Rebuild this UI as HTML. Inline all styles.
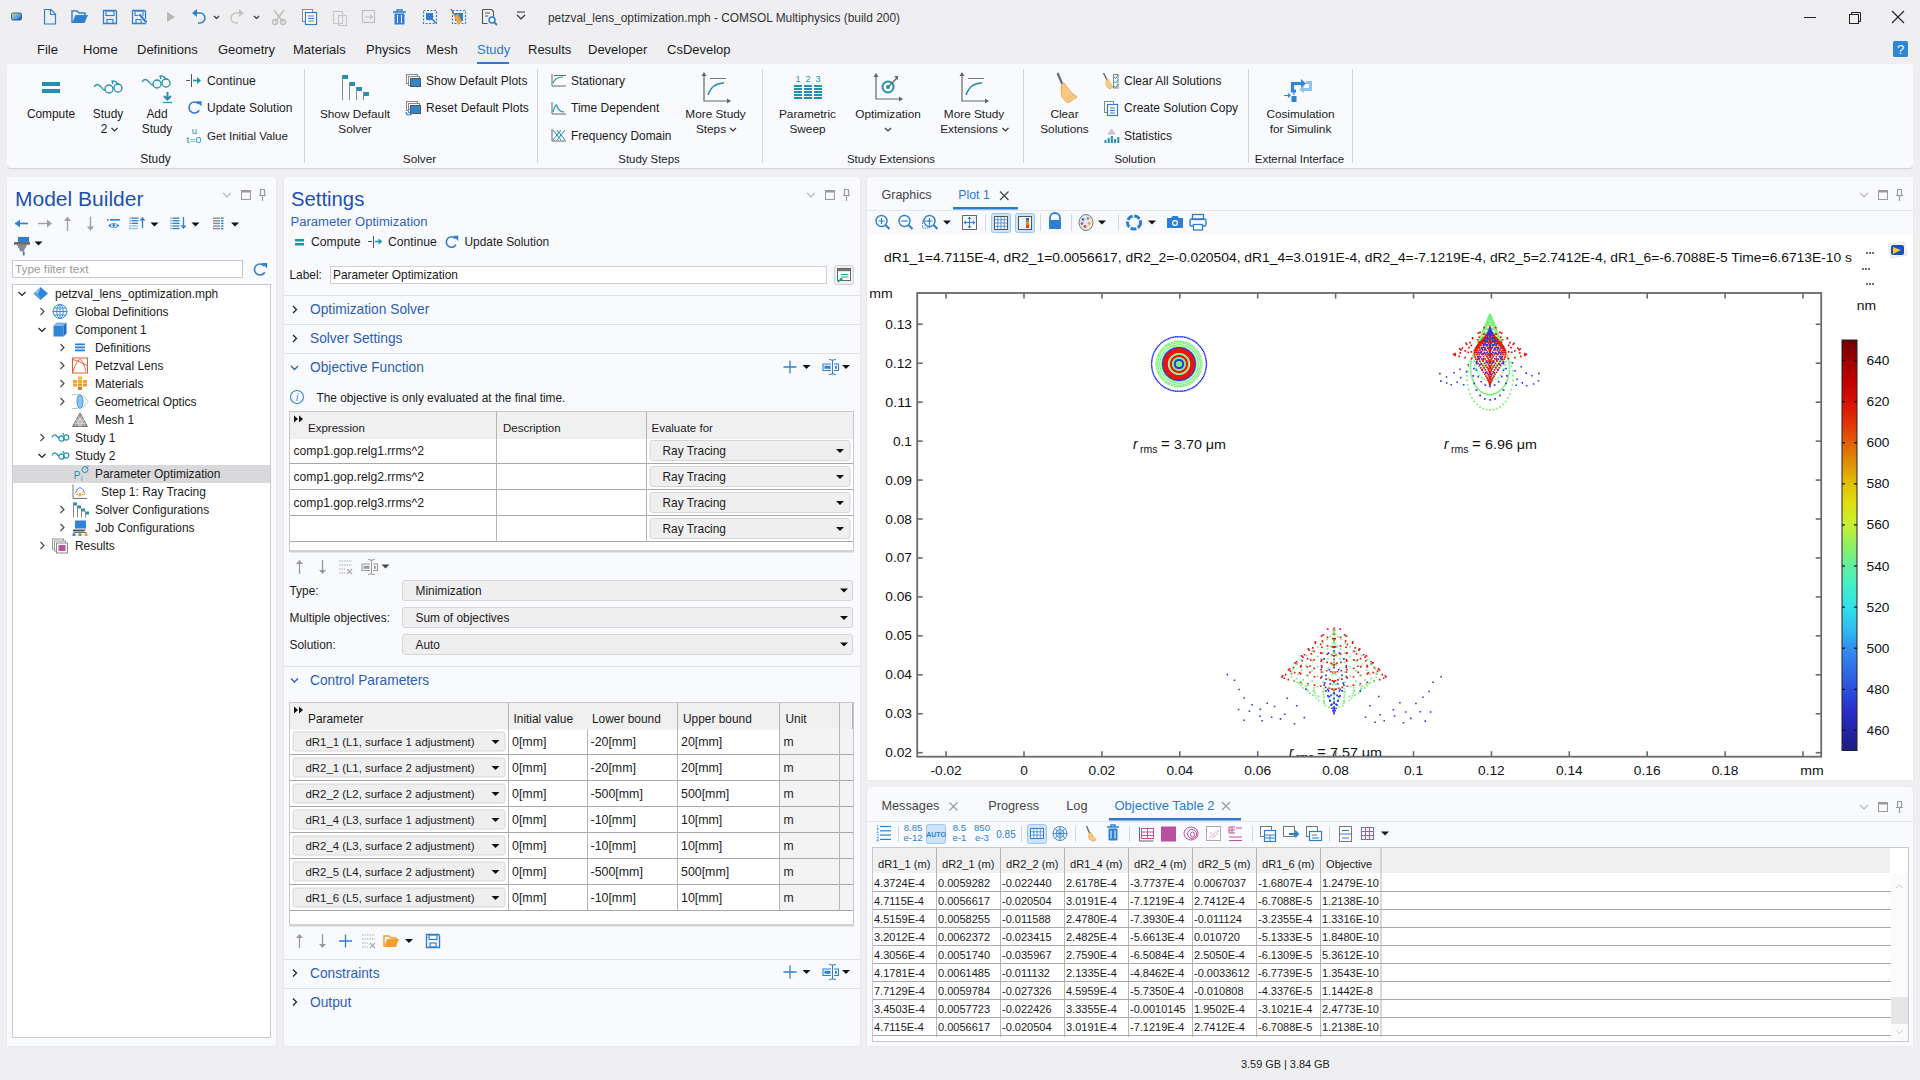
<!DOCTYPE html>
<html><head><meta charset="utf-8"><title>COMSOL</title>
<style>html,body{margin:0;padding:0;background:#efeff2;overflow:hidden}svg{display:block}text{font-family:"Liberation Sans",sans-serif;white-space:pre}</style>
</head><body><svg width="1920" height="1080" viewBox="0 0 1920 1080">
<rect width="1920" height="1080" fill="#efeff2"/>
<defs><linearGradient id="appg" x1="0" y1="0" x2="1" y2="1"><stop offset="0" stop-color="#f0e040"/><stop offset="0.6" stop-color="#50a0e0"/><stop offset="1" stop-color="#1a3fa0"/></linearGradient></defs>
<path d="M11.5 14.5q0-1.5 1.5-1.5h7q1.5 0 1.5 1.5v4q0 1.5-1.5 1.5h-7q-1.5 0-1.5-1.5z" fill="url(#appg)" stroke="#1a3fa0" stroke-width="0.8"/>
<path d="M44.5 9.5h6.5l4.5 4.5v10h-11z M50.5 9.5v5h5" fill="none" stroke="#2f7fd0" stroke-width="1.2"/>
<path d="M72 23l3.5-8h12.5l-3.5 8z" fill="#2f7fd0"/>
<path d="M72 23v-12h5l2 2h6v2" fill="none" stroke="#2f7fd0" stroke-width="1.4"/>
<path d="M103.5 10.5h12l1 1v12h-13z" fill="none" stroke="#2f7fd0" stroke-width="1.3"/>
<rect x="106" y="11" width="8" height="4.5" fill="none" stroke="#2f7fd0" stroke-width="1.1"/>
<rect x="107" y="19.5" width="6" height="4" fill="none" stroke="#2f7fd0" stroke-width="1.1"/>
<path d="M132.5 10.5h12l1 1v12h-13z" fill="none" stroke="#2f7fd0" stroke-width="1.3"/>
<rect x="135" y="11" width="8" height="4.5" fill="none" stroke="#2f7fd0" stroke-width="1.1"/>
<rect x="136" y="19.5" width="5" height="4" fill="none" stroke="#2f7fd0" stroke-width="1.1"/>
<path d="M139.5 14.5l7 8" fill="none" stroke="#f9fafd" stroke-width="3.2"/>
<path d="M139.5 14.5l7 8" fill="none" stroke="#2f7fd0" stroke-width="2"/>
<path d="M139 14l1.5 0.5l-0.5 1z" fill="#666"/>
<path d="M167 12l8 5l-8 5z" fill="#b8b8b8"/>
<path d="M192 13l5-4v8z" fill="#2f7fd0"/>
<path d="M195 13h5a5 5 0 0 1 0 10h-2" fill="none" stroke="#2f7fd0" stroke-width="1.5"/>
<path d="M214 16l2.5 2.5l2.5-2.5" fill="none" stroke="#333" stroke-width="1.2"/>
<path d="M244 13l-5-4v8z" fill="#c4c4c4"/>
<path d="M241 13h-5a5 5 0 0 0 0 10h2" fill="none" stroke="#c4c4c4" stroke-width="1.5"/>
<path d="M254 16l2.5 2.5l2.5-2.5" fill="none" stroke="#333" stroke-width="1.2"/>
<path d="M274 10l9 12 M284 10l-9 12" fill="none" stroke="#bdbdbd" stroke-width="1.5"/>
<circle cx="275" cy="22" r="2.5" fill="none" stroke="#bdbdbd" stroke-width="1.4"/>
<circle cx="283" cy="22" r="2.5" fill="none" stroke="#bdbdbd" stroke-width="1.4"/>
<rect x="302.5" y="9.5" width="10" height="12" fill="#fff" stroke="#888" stroke-width="1"/>
<rect x="305.5" y="12.5" width="11" height="12" fill="#fff" stroke="#2f7fd0" stroke-width="1.2"/>
<path d="M308 16h6M308 18.5h6M308 21h6" fill="none" stroke="#2f7fd0" stroke-width="1"/>
<rect x="333.5" y="11.5" width="9" height="12" fill="none" stroke="#c8c8c8" stroke-width="1.2"/>
<rect x="338.5" y="15.5" width="8" height="10" fill="none" stroke="#c8c8c8" stroke-width="1.2"/>
<rect x="362.5" y="10.5" width="12" height="12" fill="none" stroke="#c0c0c0" stroke-width="1.2"/>
<path d="M365 17h7l-2-2m2 2l-2 2" fill="none" stroke="#c0c0c0" stroke-width="1.2"/>
<path d="M393 12h13 M397 12v-2h5v2" fill="none" stroke="#2f7fd0" stroke-width="1.5"/>
<path d="M394.5 13.5h10v11h-10z" fill="#2f7fd0"/>
<path d="M397.5 15v8 M401.5 15v8" fill="none" stroke="#fff" stroke-width="1"/>
<rect x="423.5" y="10.5" width="13" height="13" fill="none" stroke="#2f7fd0" stroke-width="1.2" stroke-dasharray="2 1.5"/>
<rect x="426" y="13" width="7" height="7" fill="#2f7fd0"/>
<path d="M430 17l6 6" fill="none" stroke="#2f7fd0" stroke-width="1.6"/>
<path d="M429 16h5l-5 5z" fill="#2f7fd0"/>
<rect x="452.5" y="10.5" width="13" height="13" fill="none" stroke="#2f7fd0" stroke-width="1.2" stroke-dasharray="2 1.5"/>
<rect x="455" y="13" width="8" height="8" fill="#2f7fd0"/>
<path d="M451 9l5 8" fill="none" stroke="#666" stroke-width="1.2"/>
<path d="M454 16l4-2l4 8l-4 3z" fill="#f0a040"/>
<path d="M482.5 9.5h9l2 2v6 M482.5 9.5v14h5" fill="none" stroke="#555" stroke-width="1.1"/>
<path d="M485 13h5 M485 16h3" fill="none" stroke="#555" stroke-width="1"/>
<circle cx="492" cy="20" r="3" fill="none" stroke=#2f7fd0 stroke-width="1.5"/>
<path d="M494 22l3 3" fill="none" stroke="#2f7fd0" stroke-width="1.8"/>
<path d="M517 12h8 M517 15l4 4l4-4" fill="none" stroke="#333" stroke-width="1.2"/>
<text x="548" y="22" font-size="12.2" fill="#333" textLength="352" lengthAdjust="spacingAndGlyphs">petzval_lens_optimization.mph - COMSOL Multiphysics (build 200)</text>
<line x1="1804" y1="17.5" x2="1816" y2="17.5" stroke="#222" stroke-width="1"/>
<rect x="1849.5" y="14.5" width="9" height="9" fill="none" stroke="#222" stroke-width="1"/>
<path d="M1851.5 14.5v-2h9v9h-2" fill="none" stroke="#222" stroke-width="1"/>
<path d="M1892 11l12 12 M1904 11l-12 12" fill="none" stroke="#222" stroke-width="1.1"/>
<text x="37" y="54" font-size="13" fill="#1b1b1b">File</text>
<text x="83" y="54" font-size="13" fill="#1b1b1b">Home</text>
<text x="137" y="54" font-size="13" fill="#1b1b1b">Definitions</text>
<text x="218" y="54" font-size="13" fill="#1b1b1b">Geometry</text>
<text x="293" y="54" font-size="13" fill="#1b1b1b">Materials</text>
<text x="366" y="54" font-size="13" fill="#1b1b1b">Physics</text>
<text x="426" y="54" font-size="13" fill="#1b1b1b">Mesh</text>
<text x="477" y="54" font-size="13" fill="#2a7ad0">Study</text>
<text x="528" y="54" font-size="13" fill="#1b1b1b">Results</text>
<text x="588" y="54" font-size="13" fill="#1b1b1b">Developer</text>
<text x="667" y="54" font-size="13" fill="#1b1b1b">CsDevelop</text>
<rect x="477" y="62" width="32" height="2" fill="#2a7ad0"/>
<rect x="1893" y="41" width="15" height="16" fill="#2f86d6" rx="1.5"/>
<text x="1900.5" y="54" font-size="13" fill="#fff" text-anchor="middle">?</text>
<rect x="7" y="65.2" width="1906" height="104" rx="4" fill="#d6d7da"/>
<rect x="7" y="64" width="1906" height="104" fill="#f9fafd" rx="4"/>
<line x1="304.5" y1="69" x2="304.5" y2="163" stroke="#d3d5da" stroke-width="1"/>
<line x1="537.5" y1="69" x2="537.5" y2="163" stroke="#d3d5da" stroke-width="1"/>
<line x1="762.5" y1="69" x2="762.5" y2="163" stroke="#d3d5da" stroke-width="1"/>
<line x1="1023.5" y1="69" x2="1023.5" y2="163" stroke="#d3d5da" stroke-width="1"/>
<line x1="1248.5" y1="69" x2="1248.5" y2="163" stroke="#d3d5da" stroke-width="1"/>
<line x1="1352.5" y1="69" x2="1352.5" y2="163" stroke="#d3d5da" stroke-width="1"/>
<rect x="42" y="82" width="18" height="4" fill="#2191ad"/>
<rect x="42" y="89" width="18" height="4" fill="#2191ad"/>
<text x="51" y="118" font-size="11.9" fill="#1b1b1b" text-anchor="middle">Compute</text>
<g transform="translate(109,88) scale(1.0)" fill="none" stroke="#2191ad" stroke-width="1.3"><path d="M-15 -1 q3 -5 7 0 q2 3 4 3"/><circle cx="0" cy="1" r="4"/><circle cx="9" cy="0" r="4"/><path d="M4 -4 l-1 -3 q3 -1 6 3"/></g>
<text x="108" y="118" font-size="11.9" fill="#1b1b1b" text-anchor="middle">Study</text>
<text x="104" y="133" font-size="11.9" fill="#1b1b1b" text-anchor="middle">2</text>
<path d="M111.5 128.0l3 3l3-3" fill="none" stroke="#333" stroke-width="1.2"/>
<g transform="translate(157,83) scale(1.0)" fill="none" stroke="#2191ad" stroke-width="1.3"><path d="M-15 -1 q3 -5 7 0 q2 3 4 3"/><circle cx="0" cy="1" r="4"/><circle cx="9" cy="0" r="4"/><path d="M4 -4 l-1 -3 q3 -1 6 3"/></g>
<path d="M167.5 92v7 M164 96l3.5 3.5l3.5-3.5" fill="none" stroke="#2191ad" stroke-width="2"/>
<line x1="163" y1="102.5" x2="172" y2="102.5" stroke="#2191ad" stroke-width="1.2"/>
<text x="157" y="118" font-size="11.9" fill="#1b1b1b" text-anchor="middle">Add</text>
<text x="157" y="133" font-size="11.9" fill="#1b1b1b" text-anchor="middle">Study</text>
<path d="M186 80.5h4 M191.5 74v13 M193 80.5h6" fill="none" stroke="#555" stroke-width="1"/>
<path d="M197 77l4 3.5l-4 3.5z" fill="#2191ad"/>
<line x1="193" y1="80.5" x2="198" y2="80.5" stroke="#2191ad" stroke-width="1.5"/>
<text x="207" y="85" font-size="12.2" fill="#1b1b1b">Continue</text>
<path d="M198.71 103.96A5.5 5.5 0 1 0 199.26 110.25" fill="none" stroke="#2f7fd0" stroke-width="1.6"/>
<path d="M196.43 101.17h5.22v5.22z" fill="#2f7fd0"/>
<text x="207" y="112" font-size="12.0" fill="#1b1b1b">Update Solution</text>
<text x="194.5" y="134" font-size="9.5" fill="#2191ad" text-anchor="middle">u</text>
<text x="194" y="143" font-size="9.5" fill="#2191ad" text-anchor="middle" textLength="15" lengthAdjust="spacingAndGlyphs">t=0</text>
<text x="207" y="140" font-size="11.6" fill="#1b1b1b">Get Initial Value</text>
<text x="155.5" y="162.5" font-size="11.9" fill="#1b1b1b" text-anchor="middle">Study</text>
<rect x="342" y="75" width="6" height="4" fill="#2191ad"/>
<line x1="342.5" y1="75" x2="342.5" y2="100" stroke="#888" stroke-width="1"/>
<rect x="349" y="82" width="6" height="4" fill="#2191ad"/>
<line x1="349.5" y1="82" x2="349.5" y2="100" stroke="#888" stroke-width="1"/>
<rect x="356" y="87" width="6" height="4" fill="#2191ad"/>
<line x1="356.5" y1="87" x2="356.5" y2="100" stroke="#888" stroke-width="1"/>
<rect x="363" y="92" width="6" height="4" fill="#2191ad"/>
<line x1="363.5" y1="92" x2="363.5" y2="100" stroke="#888" stroke-width="1"/>
<text x="355" y="118" font-size="11.8" fill="#1b1b1b" text-anchor="middle">Show Default</text>
<text x="355" y="133" font-size="11.8" fill="#1b1b1b" text-anchor="middle">Solver</text>
<rect x="406.5" y="74.5" width="11" height="9" fill="none" stroke="#888" stroke-width="1"/>
<rect x="408.5" y="76.5" width="11" height="9" fill="#fff" stroke="#888" stroke-width="1"/>
<rect x="410.5" y="78.5" width="10" height="8" fill="#2f86c8" stroke="#555" stroke-width="1"/>
<text x="426" y="85" font-size="12.0" fill="#1b1b1b">Show Default Plots</text>
<rect x="406.5" y="101.5" width="11" height="9" fill="none" stroke="#888" stroke-width="1"/>
<rect x="408.5" y="103.5" width="11" height="9" fill="#fff" stroke="#888" stroke-width="1"/>
<rect x="410.5" y="105.5" width="10" height="8" fill="#2f86c8" stroke="#555" stroke-width="1"/>
<path d="M406 112a3 3 0 1 0 3 -3" fill="none" stroke="#2f7fd0" stroke-width="1.2"/>
<text x="426" y="112" font-size="12.0" fill="#1b1b1b">Reset Default Plots</text>
<text x="419.5" y="162.5" font-size="11.8" fill="#1b1b1b" text-anchor="middle">Solver</text>
<path d="M552 74v12h14" fill="none" stroke="#666" stroke-width="1"/>
<path d="M553 83q2-6 10-6" fill="none" stroke="#2191ad" stroke-width="1.2"/>
<line x1="554" y1="75.5" x2="566" y2="75.5" stroke="#666" stroke-width="1"/>
<text x="571" y="85" font-size="12.0" fill="#1b1b1b">Stationary</text>
<path d="M552 102v12h14" fill="none" stroke="#666" stroke-width="1"/>
<path d="M553 112q3-10 4-6q2 6 7 6" fill="none" stroke="#2191ad" stroke-width="1.2"/>
<text x="571" y="112" font-size="12.0" fill="#1b1b1b">Time Dependent</text>
<path d="M552 129v12h14" fill="none" stroke="#666" stroke-width="1"/>
<path d="M553 130l8 10 M561 130l-8 10 M557 130l8 10 M565 130l-8 10" fill="none" stroke="#2191ad" stroke-width="1"/>
<text x="571" y="140" font-size="11.9" fill="#1b1b1b">Frequency Domain</text>
<path d="M704 73v28h26" fill="none" stroke="#666" stroke-width="1.2"/>
<path d="M701.5 76l2.5-4l2.5 4z M727 98.5l4 2.5l-4 2.5z" fill="#666"/>
<path d="M708 95q4-12 16-12" fill="none" stroke="#2191ad" stroke-width="1.4"/>
<line x1="710" y1="78.5" x2="726" y2="78.5" stroke="#777" stroke-width="1"/>
<text x="715.5" y="118" font-size="11.8" fill="#1b1b1b" text-anchor="middle">More Study</text>
<text x="711" y="133" font-size="11.8" fill="#1b1b1b" text-anchor="middle">Steps</text>
<path d="M730 128.0l3 3l3-3" fill="none" stroke="#333" stroke-width="1.2"/>
<text x="649" y="162.5" font-size="11.4" fill="#1b1b1b" text-anchor="middle">Study Steps</text>
<text x="798" y="82" font-size="9" fill="#2191ad" text-anchor="middle">1</text>
<text x="808" y="82" font-size="9" fill="#2191ad" text-anchor="middle">2</text>
<text x="818" y="82" font-size="9" fill="#2191ad" text-anchor="middle">3</text>
<rect x="794" y="85" width="8" height="2" fill="#2191ad"/>
<rect x="794" y="88" width="8" height="2" fill="#2191ad"/>
<rect x="794" y="91" width="8" height="2" fill="#2191ad"/>
<rect x="794" y="94" width="8" height="2" fill="#2191ad"/>
<rect x="794" y="97" width="8" height="2" fill="#2191ad"/>
<rect x="804" y="85" width="8" height="2" fill="#2191ad"/>
<rect x="804" y="88" width="8" height="2" fill="#2191ad"/>
<rect x="804" y="91" width="8" height="2" fill="#2191ad"/>
<rect x="804" y="94" width="8" height="2" fill="#2191ad"/>
<rect x="804" y="97" width="8" height="2" fill="#2191ad"/>
<rect x="814" y="85" width="8" height="2" fill="#2191ad"/>
<rect x="814" y="88" width="8" height="2" fill="#2191ad"/>
<rect x="814" y="91" width="8" height="2" fill="#2191ad"/>
<rect x="814" y="94" width="8" height="2" fill="#2191ad"/>
<rect x="814" y="97" width="8" height="2" fill="#2191ad"/>
<text x="807.5" y="118" font-size="11.8" fill="#1b1b1b" text-anchor="middle">Parametric</text>
<text x="807.5" y="133" font-size="11.8" fill="#1b1b1b" text-anchor="middle">Sweep</text>
<path d="M876 74v25h26" fill="none" stroke="#666" stroke-width="1.2"/>
<path d="M873.5 77l2.5-4l2.5 4z M899 96.5l4 2.5l-4 2.5z" fill="#666"/>
<circle cx="888" cy="87" r="5.5" fill="none" stroke="#2191ad" stroke-width="2"/><circle cx="888" cy="87" r="2" fill="#2191ad"/>
<path d="M889 86l8-8" fill="none" stroke="#666" stroke-width="1.5"/>
<path d="M894 76l4 0l0 4z" fill="#666"/>
<text x="888" y="118" font-size="11.8" fill="#1b1b1b" text-anchor="middle">Optimization</text>
<path d="M885 128.0l3 3l3-3" fill="none" stroke="#333" stroke-width="1.2"/>
<path d="M962 73v28h26" fill="none" stroke="#666" stroke-width="1.2"/>
<path d="M959.5 76l2.5-4l2.5 4z M985 98.5l4 2.5l-4 2.5z" fill="#666"/>
<path d="M966 95q4-12 16-12" fill="none" stroke="#2191ad" stroke-width="1.4"/>
<line x1="968" y1="78.5" x2="984" y2="78.5" stroke="#777" stroke-width="1"/>
<text x="974" y="118" font-size="11.8" fill="#1b1b1b" text-anchor="middle">More Study</text>
<text x="969" y="133" font-size="11.8" fill="#1b1b1b" text-anchor="middle">Extensions</text>
<path d="M1002.5 128.0l3 3l3-3" fill="none" stroke="#333" stroke-width="1.2"/>
<text x="891" y="162.5" font-size="11.4" fill="#1b1b1b" text-anchor="middle">Study Extensions</text>
<path d="M1057.5 73l4.8 11" fill="none" stroke="#6a6a6a" stroke-width="2.2"/>
<path d="M1061.5 84.5l2.5-1.5q3 4 6 8q4 4 7 6l-3 2q-3 2 -6 4q-3 -2 -6 -6q-1.5 -5 -0.5 -12.5z" fill="#f7c987" stroke="#eea24a" stroke-width="0.9"/>
<path d="M1067 97l2 2 M1069.5 95.5l2 2 M1072 94l2 2" fill="none" stroke="#eea24a" stroke-width="0.8"/>
<text x="1064.5" y="118" font-size="11.8" fill="#1b1b1b" text-anchor="middle">Clear</text>
<text x="1064.5" y="133" font-size="11.8" fill="#1b1b1b" text-anchor="middle">Solutions</text>
<path d="M1103.5 73l3.5 7" fill="none" stroke="#6a6a6a" stroke-width="1.5"/>
<path d="M1106 80l2-1q2 4 5 8l-3 2q-3-1-4-4z" fill="#f7c987" stroke="#eea24a" stroke-width="0.7"/>
<rect x="1113.5" y="74.5" width="4.5" height="13.5" fill="none" stroke="#888" stroke-width="1"/>
<path d="M1114 77l1.5 1.5l3-3.5 M1114 81.5l1.5 1.5l3-3.5 M1114 86l1.5 1.5l3-3.5" fill="none" stroke="#2191ad" stroke-width="1"/>
<text x="1124" y="85" font-size="12.0" fill="#1b1b1b">Clear All Solutions</text>
<rect x="1104.5" y="101.5" width="9" height="11" fill="#fff" stroke="#888" stroke-width="1"/>
<rect x="1107.5" y="104.5" width="10" height="11" fill="#fff" stroke="#2f7fd0" stroke-width="1.2"/>
<path d="M1110 108h5M1110 110.5h5M1110 113h5" fill="none" stroke="#2f7fd0" stroke-width="1"/>
<text x="1124" y="112" font-size="12.0" fill="#1b1b1b">Create Solution Copy</text>
<path d="M1111.5 129l3.5 5h-7z" fill="#d0d0d0" stroke="#aaa" stroke-width="0.6"/>
<rect x="1104.5" y="140" width="2" height="3" fill="#2191ad"/>
<rect x="1107.7" y="138" width="2" height="5" fill="#2191ad"/>
<rect x="1110.9" y="136" width="2" height="7" fill="#2191ad"/>
<rect x="1114.1" y="139" width="2" height="4" fill="#2191ad"/>
<rect x="1117.3" y="137" width="2" height="6" fill="#2191ad"/>
<text x="1124" y="140" font-size="12.0" fill="#1b1b1b">Statistics</text>
<text x="1135" y="162.5" font-size="11.4" fill="#1b1b1b" text-anchor="middle">Solution</text>
<path d="M1296 91h-3.5v-7.5h9" fill="none" stroke="#2f86d6" stroke-width="3.2"/>
<path d="M1301 79l5 4.5l-5 4.5z" fill="#2f86d6"/>
<path d="M1306 82.5h4.5v7h-7" fill="none" stroke="#8cc4f0" stroke-width="3"/>
<path d="M1304 86l-5 3.5l5 3.5z" fill="#8cc4f0"/>
<path d="M1284 95.5h6 M1288 93.5l2 2l-2 2" fill="none" stroke="#2f86d6" stroke-width="1.2"/>
<path d="M1294 90v5" fill="none" stroke="#2f86d6" stroke-width="1.2"/>
<rect x="1291.5" y="96" width="5" height="6" fill="#2f86d6"/>
<text x="1300.5" y="118" font-size="11.8" fill="#1b1b1b" text-anchor="middle">Cosimulation</text>
<text x="1300.5" y="133" font-size="11.8" fill="#1b1b1b" text-anchor="middle">for Simulink</text>
<text x="1299.5" y="162.5" font-size="11.4" fill="#1b1b1b" text-anchor="middle">External Interface</text>
<path d="M7 181a4 4 0 0 1 4 -4h261a4 4 0 0 1 4 4v865h-269z" fill="#e4e5e8" transform="translate(-0.6,0.6)"/>
<path d="M7 181a4 4 0 0 1 4 -4h261a4 4 0 0 1 4 4v865h-269z" fill="#e4e5e8" transform="translate(0.6,0.6)"/>
<path d="M7 181a4 4 0 0 1 4 -4h261a4 4 0 0 1 4 4v865h-269z" fill="#f9fafd"/>
<text x="15" y="206" font-size="21" fill="#1c52ad">Model Builder</text>
<path d="M223 193l4 4l4-4" fill="none" stroke="#b5b5b5" stroke-width="1.1"/>
<rect x="241.5" y="190.5" width="9" height="9" fill="none" stroke="#9a9a9a" stroke-width="1"/>
<rect x="241.5" y="190.5" width="9" height="2" fill="#9a9a9a"/>
<path d="M260.5 190v5 M264.5 190v5 M259 195.5h7 M262.5 195v6 M260 189.5h5" fill="none" stroke="#9a9a9a" stroke-width="1.2"/>
<path d="M15 223.5h13" fill="none" stroke="#2f7fd0" stroke-width="1.6"/>
<path d="M15 223.5l5-4v8z" fill="#2f7fd0"/>
<path d="M38 223.5h12" fill="none" stroke="#a0a0a0" stroke-width="1.4"/>
<path d="M52 223.5l-5-4v8z" fill="#a0a0a0"/>
<path d="M67.5 218v13" fill="none" stroke="#a0a0a0" stroke-width="1.4"/>
<path d="M67.5 216.5l-3.5 4.5h7z" fill="#a0a0a0"/>
<path d="M90.5 216.5v12" fill="none" stroke="#a0a0a0" stroke-width="1.4"/>
<path d="M90.5 231l-3.5-4.5h7z" fill="#a0a0a0"/>
<rect x="107" y="219" width="1.6" height="1.6" fill="#2f7fd0"/>
<rect x="110" y="219" width="10" height="1.6" fill="#2f7fd0"/>
<path d="M108 225.5q5.5-5 11.5 0q-5.5 5 -11.5 0z" fill="#2f7fd0"/>
<ellipse cx="113.8" cy="225.5" rx="3" ry="1.8" fill="#fff"/><circle cx="113.8" cy="225.5" r="1.4" fill="#2f7fd0"/>
<rect x="129.5" y="217.5" width="1.2" height="1.3" fill="#2f7fd0"/>
<rect x="131.5" y="217.5" width="7" height="1.3" fill="#2f7fd0"/>
<rect x="129.5" y="220.1" width="1.2" height="1.3" fill="#2f7fd0"/>
<rect x="131.5" y="220.1" width="7" height="1.3" fill="#2f7fd0"/>
<rect x="129.5" y="222.7" width="1.2" height="1.3" fill="#2f7fd0"/>
<rect x="131.5" y="222.7" width="6.5" height="1.3" fill="#2f7fd0"/>
<rect x="129.5" y="225.3" width="1.2" height="1.3" fill="#2f7fd0"/>
<rect x="131.5" y="225.3" width="6.5" height="1.3" fill="#8cc4f0"/>
<rect x="129.5" y="227.9" width="1.2" height="1.3" fill="#2f7fd0"/>
<rect x="131.5" y="227.9" width="6.5" height="1.3" fill="#8cc4f0"/>
<path d="M142.5 219v9" fill="none" stroke="#2f7fd0" stroke-width="1.3"/>
<path d="M142.5 217l-3 3.5h6z" fill="#2f7fd0"/>
<path d="M150.5 222.5h8l-4 4z" fill="#111"/>
<rect x="170.5" y="217.5" width="1.2" height="1.3" fill="#2f7fd0"/>
<rect x="172.5" y="217.5" width="7" height="1.3" fill="#2f7fd0"/>
<rect x="170.5" y="220.1" width="1.2" height="1.3" fill="#2f7fd0"/>
<rect x="172.5" y="220.1" width="7" height="1.3" fill="#2f7fd0"/>
<rect x="170.5" y="222.7" width="1.2" height="1.3" fill="#2f7fd0"/>
<rect x="172.5" y="222.7" width="7" height="1.3" fill="#2f7fd0"/>
<rect x="170.5" y="225.3" width="1.2" height="1.3" fill="#2f7fd0"/>
<rect x="172.5" y="225.3" width="7" height="1.3" fill="#2f7fd0"/>
<rect x="170.5" y="227.9" width="1.2" height="1.3" fill="#2f7fd0"/>
<rect x="172.5" y="227.9" width="7" height="1.3" fill="#2f7fd0"/>
<path d="M183.5 217v10" fill="none" stroke="#2f7fd0" stroke-width="1.3"/>
<path d="M183.5 229l-3-3.5h6z" fill="#2f7fd0"/>
<path d="M191.5 222.5h8l-4 4z" fill="#111"/>
<rect x="213" y="217.5" width="7" height="1.4" fill="#8a8a8a"/>
<rect x="221" y="217.5" width="2.5" height="1.4" fill="#2f7fd0"/>
<rect x="213" y="220.1" width="7" height="1.4" fill="#8a8a8a"/>
<rect x="221" y="220.1" width="2.5" height="1.4" fill="#2f7fd0"/>
<rect x="213" y="222.7" width="7" height="1.4" fill="#8a8a8a"/>
<rect x="221" y="222.7" width="2.5" height="1.4" fill="#2f7fd0"/>
<rect x="213" y="225.3" width="7" height="1.4" fill="#8a8a8a"/>
<rect x="221" y="225.3" width="2.5" height="1.4" fill="#2f7fd0"/>
<rect x="213" y="227.9" width="7" height="1.4" fill="#8a8a8a"/>
<rect x="221" y="227.9" width="2.5" height="1.4" fill="#2f7fd0"/>
<path d="M231 222.5h8l-4 4z" fill="#111"/>
<rect x="18" y="237" width="11" height="5" fill="#2f7fd0"/>
<path d="M14 242h16v2.5h-3l-3 5.5h-4l-3-5.5h-3z" fill="#7a7a7a"/>
<path d="M14 242h16v2.5h-16z" fill="#6a6a6a"/>
<path d="M17 244.5h10l-3.5 7h-3z" fill="#8a8a8a"/>
<rect x="22.8" y="251.5" width="1.8" height="4" fill="#2f7fd0"/>
<path d="M34.5 241.5h8l-4 4z" fill="#111"/>
<rect x="12.5" y="260.5" width="230" height="17" fill="#fff" stroke="#c9c9c9" stroke-width="1"/>
<text x="15" y="273" font-size="11.8" fill="#9a9a9a">Type filter text</text>
<path d="M264.21 265.96A5.5 5.5 0 1 0 264.76 272.25" fill="none" stroke="#2f7fd0" stroke-width="1.6"/>
<path d="M261.65 262.90h5.50v5.50z" fill="#2f7fd0"/>
<rect x="12.5" y="284.5" width="258" height="753" fill="#fff" stroke="#c9cacd" stroke-width="1"/>
<rect x="13" y="465" width="257" height="18" fill="#d9d9dc"/>
<path d="M18.5 292.0l3.5 3.5l3.5-3.5" fill="none" stroke="#222" stroke-width="1.2"/>
<path d="M33.5 293.5l7-6.5l7.5 6.5l-7.5 6.5z" fill="#2f86d6"/>
<path d="M33.5 293.5l7-6.5l-2 6.5z" fill="#8cc4f0"/>
<path d="M33.5 293.5l5 0.5l2.5 6z" fill="#5aa2e0"/>
<text x="55" y="297.5" font-size="11.95" fill="#1b1b1b">petzval_lens_optimization.mph</text>
<path d="M40.5 308.0l3.5 3.5l-3.5 3.5" fill="none" stroke="#444" stroke-width="1.1"/>
<g fill="none" stroke="#3a8ad8" stroke-width="1"><circle cx="60" cy="311.5" r="7"/><ellipse cx="60" cy="311.5" rx="3.2" ry="7"/><path d="M53 311.5h14M54 308.0h12M54 315.0h12M60 304.5v14"/></g>
<text x="75" y="315.5" font-size="11.95" fill="#1b1b1b">Global Definitions</text>
<path d="M38.5 328.0l3.5 3.5l3.5-3.5" fill="none" stroke="#222" stroke-width="1.2"/>
<path d="M53.5 325.5h10v11h-10z" fill="#2f86d6"/>
<path d="M53.5 325.5l3-3h10l-3 3z" fill="#7ab8ea"/>
<path d="M63.5 325.5l3-3v11l-3 3z" fill="#1f6fc0"/>
<text x="75" y="333.5" font-size="11.95" fill="#1b1b1b">Component 1</text>
<path d="M60.5 344.0l3.5 3.5l-3.5 3.5" fill="none" stroke="#444" stroke-width="1.1"/>
<rect x="75" y="343.5" width="10" height="1.8" fill="#2f7fd0"/>
<rect x="75" y="346.5" width="10" height="1.8" fill="#2f7fd0"/>
<rect x="75" y="349.5" width="10" height="1.8" fill="#2f7fd0"/>
<text x="95" y="351.5" font-size="11.95" fill="#1b1b1b">Definitions</text>
<path d="M60.5 362.0l3.5 3.5l-3.5 3.5" fill="none" stroke="#444" stroke-width="1.1"/>
<rect x="72.5" y="358.0" width="15" height="15" fill="none" stroke="#e05a30" stroke-width="1"/>
<path d="M73 371.5q4-12 7-12q3 0 6 12 M73 359.5q7 2 14 6" fill="none" stroke="#e05a30" stroke-width="0.9"/>
<text x="95" y="369.5" font-size="11.95" fill="#1b1b1b">Petzval Lens</text>
<path d="M60.5 380.0l3.5 3.5l-3.5 3.5" fill="none" stroke="#444" stroke-width="1.1"/>
<rect x="78" y="376.5" width="4" height="3" fill="#f8b440"/>
<rect x="73" y="380.0" width="4" height="3" fill="#f5a623"/>
<rect x="78" y="380.0" width="4" height="3" fill="#f5a623"/>
<rect x="83" y="380.0" width="4" height="3" fill="#f5a623"/>
<rect x="73" y="383.5" width="4" height="3" fill="#f0a030"/>
<rect x="78" y="383.5" width="4" height="3" fill="#ee9a2a"/>
<rect x="83" y="383.5" width="4" height="3" fill="#ee9a2a"/>
<rect x="78" y="387.0" width="4" height="3" fill="#d88020"/>
<text x="95" y="387.5" font-size="11.95" fill="#1b1b1b">Materials</text>
<path d="M60.5 398.0l3.5 3.5l-3.5 3.5" fill="none" stroke="#444" stroke-width="1.1"/>
<ellipse cx="80" cy="401.5" rx="3" ry="7" fill="#8cc4f0" stroke="#2f7fd0" stroke-width="0.8"/>
<path d="M72 394.5h6 M72 408.5h6 M83 395.5l5 6l-5 6" fill="none" stroke="#9bc" stroke-width="0.8"/>
<text x="95" y="405.5" font-size="11.95" fill="#1b1b1b">Geometrical Optics</text>
<path d="M72.5 426.5l7.5-13.5l7.5 13.5z" fill="#a8a8a8" stroke="#777" stroke-width="1"/>
<path d="M76.3 419.8h7.4 M74.5 423.2h11 M76.3 419.8l3.7 6.7l3.7-6.7 M78.2 416.5l3.6 6.6 M81.8 416.5l-3.6 6.6" fill="none" stroke="#e8e8e8" stroke-width="0.7"/>
<text x="95" y="423.5" font-size="11.95" fill="#1b1b1b">Mesh 1</text>
<path d="M40.5 434.0l3.5 3.5l-3.5 3.5" fill="none" stroke="#444" stroke-width="1.1"/>
<g fill="none" stroke="#2191ad" stroke-width="1.2" transform="translate(60,437.5)"><path d="M-8 0q2-4 4-2q2 2 3 2.5"/><circle cx="1.5" cy="1" r="2.6"/><circle cx="6.2" cy="0" r="2.6"/><path d="M3.5 -2.5l-0.5-2"/></g>
<text x="75" y="441.5" font-size="11.95" fill="#1b1b1b">Study 1</text>
<path d="M38.5 454.0l3.5 3.5l3.5-3.5" fill="none" stroke="#222" stroke-width="1.2"/>
<g fill="none" stroke="#2191ad" stroke-width="1.2" transform="translate(60,455.5)"><path d="M-8 0q2-4 4-2q2 2 3 2.5"/><circle cx="1.5" cy="1" r="2.6"/><circle cx="6.2" cy="0" r="2.6"/><path d="M3.5 -2.5l-0.5-2"/></g>
<text x="75" y="459.5" font-size="11.95" fill="#1b1b1b">Study 2</text>
<text x="77" y="478.5" font-size="10" fill="#2191ad" text-anchor="middle">P</text>
<text x="81" y="480.5" font-size="7" fill="#2191ad">i</text>
<circle cx="85" cy="469.5" r="3" fill="none" stroke="#2191ad" stroke-width="1"/>
<path d="M85 469.5l4-4" fill="none" stroke="#777" stroke-width="0.8"/>
<text x="95" y="477.5" font-size="11.95" fill="#1b1b1b">Parameter Optimization</text>
<path d="M73 484.5v14h14" fill="none" stroke="#777" stroke-width="1"/>
<path d="M75 493.5q5-12 10 0" fill="none" stroke="#2f86d6" stroke-width="0.9"/>
<circle cx="80" cy="494.5" r="1.5" fill="#f0a030"/>
<path d="M76 494.5h2M82 494.5h3M77 491.5l1.5 1.5M83 491.5l-1.5 1.5M78 497.5l1-1M82 497.5l-1-1" fill="none" stroke="#f0a030" stroke-width="1"/>
<text x="101" y="495.5" font-size="11.95" fill="#1b1b1b">Step 1: Ray Tracing</text>
<path d="M60.5 506.0l3.5 3.5l-3.5 3.5" fill="none" stroke="#444" stroke-width="1.1"/>
<rect x="73" y="502.5" width="4" height="3" fill="#2191ad"/>
<line x1="73.5" y1="502.5" x2="73.5" y2="517.5" stroke="#888" stroke-width="1"/>
<rect x="77" y="505.5" width="4" height="3" fill="#2191ad"/>
<line x1="77.5" y1="505.5" x2="77.5" y2="517.5" stroke="#888" stroke-width="1"/>
<rect x="81" y="508.5" width="4" height="3" fill="#2191ad"/>
<line x1="81.5" y1="508.5" x2="81.5" y2="517.5" stroke="#888" stroke-width="1"/>
<rect x="85" y="511.5" width="4" height="3" fill="#2191ad"/>
<line x1="85.5" y1="511.5" x2="85.5" y2="517.5" stroke="#888" stroke-width="1"/>
<text x="95" y="513.5" font-size="11.95" fill="#1b1b1b">Solver Configurations</text>
<path d="M60.5 524.0l3.5 3.5l-3.5 3.5" fill="none" stroke="#444" stroke-width="1.1"/>
<rect x="75" y="520.5" width="11" height="8" fill="#2f86d6"/>
<path d="M73 529.5h13l-2 2h-11z" fill="#555"/>
<path d="M74 532.5v2 M80 532.5v2 M86 532.5v2 M74 532.5h12" fill="none" stroke="#777" stroke-width="1"/>
<rect x="72.5" y="533.5" width="3" height="2.5" fill="#2f86d6"/>
<rect x="78.5" y="533.5" width="3" height="2.5" fill="#4caf50"/>
<rect x="84.5" y="533.5" width="3" height="2.5" fill="#f0a030"/>
<text x="95" y="531.5" font-size="11.95" fill="#1b1b1b">Job Configurations</text>
<path d="M40.5 542.0l3.5 3.5l-3.5 3.5" fill="none" stroke="#444" stroke-width="1.1"/>
<rect x="52.5" y="539.0" width="11" height="10" fill="#fff" stroke="#999" stroke-width="1"/>
<rect x="54.5" y="541.0" width="11" height="10" fill="#fff" stroke="#999" stroke-width="1"/>
<rect x="56.5" y="543.0" width="11" height="10" fill="#fff" stroke="#888" stroke-width="1"/>
<rect x="58.5" y="545.0" width="7" height="6" fill="#c050a0"/>
<text x="75" y="549.5" font-size="11.95" fill="#1b1b1b">Results</text>
<path d="M284 181a4 4 0 0 1 4 -4h568a4 4 0 0 1 4 4v865h-576z" fill="#e4e5e8" transform="translate(-0.6,0.6)"/>
<path d="M284 181a4 4 0 0 1 4 -4h568a4 4 0 0 1 4 4v865h-576z" fill="#e4e5e8" transform="translate(0.6,0.6)"/>
<path d="M284 181a4 4 0 0 1 4 -4h568a4 4 0 0 1 4 4v865h-576z" fill="#f9fafd"/>
<text x="291" y="206" font-size="20.3" fill="#1c52ad">Settings</text>
<path d="M807 193l4 4l4-4" fill="none" stroke="#b5b5b5" stroke-width="1.1"/>
<rect x="825.5" y="190.5" width="9" height="9" fill="none" stroke="#9a9a9a" stroke-width="1"/>
<rect x="825.5" y="190.5" width="9" height="2" fill="#9a9a9a"/>
<path d="M844.5 190v5 M848.5 190v5 M843 195.5h7 M846.5 195v6 M844 189.5h5" fill="none" stroke="#9a9a9a" stroke-width="1.2"/>
<text x="290.5" y="226" font-size="13.05" fill="#2f62b8">Parameter Optimization</text>
<rect x="295" y="239" width="9" height="2.5" fill="#2191ad"/>
<rect x="295" y="243" width="9" height="2.5" fill="#2191ad"/>
<text x="311" y="246" font-size="12.2" fill="#1b1b1b">Compute</text>
<path d="M368 241.5h4 M373.5 236v12 M375 241.5h5" fill="none" stroke="#555" stroke-width="1"/>
<path d="M378.5 238.5l4 3l-4 3z" fill="#2191ad"/>
<line x1="375" y1="241.5" x2="380" y2="241.5" stroke="#2191ad" stroke-width="1.5"/>
<text x="388" y="246" font-size="12.2" fill="#1b1b1b">Continue</text>
<path d="M455.48 238.66A5.2 5.2 0 1 0 456.00 244.60" fill="none" stroke="#2f7fd0" stroke-width="1.6"/>
<path d="M453.06 235.76h5.20v5.20z" fill="#2f7fd0"/>
<text x="464.5" y="246" font-size="11.9" fill="#1b1b1b">Update Solution</text>
<text x="289.5" y="279" font-size="11.9" fill="#1b1b1b">Label:</text>
<rect x="330.5" y="266.5" width="496" height="17" fill="#fff" stroke="#d0d0d0" stroke-width="1"/>
<text x="333" y="279" font-size="11.9" fill="#1b1b1b">Parameter Optimization</text>
<rect x="834.5" y="265.5" width="19" height="19" fill="#f0f0f0" stroke="#d2d2d2" stroke-width="1" rx="2"/>
<rect x="837.5" y="268.5" width="13" height="12" fill="#fff" stroke="#666" stroke-width="1"/>
<rect x="838" y="269" width="12" height="2.2" fill="#777"/>
<path d="M841 274.5h7.5 M841 277h7.5" fill="none" stroke="#20a090" stroke-width="1"/>
<path d="M838 282l3.5-3.5" fill="none" stroke="#20a090" stroke-width="1.6"/>
<path d="M839.5 278h3v3z" fill="#20a090"/>
<line x1="284" y1="295.5" x2="860" y2="295.5" stroke="#dfe1e5" stroke-width="1"/>
<path d="M293.0 306.0l3.5 3.5l-3.5 3.5" fill="none" stroke="#222" stroke-width="1.3"/>
<text x="310" y="314" font-size="13.75" fill="#2a5fb3">Optimization Solver</text>
<line x1="284" y1="324.5" x2="860" y2="324.5" stroke="#dfe1e5" stroke-width="1"/>
<path d="M293.0 335.0l3.5 3.5l-3.5 3.5" fill="none" stroke="#222" stroke-width="1.3"/>
<text x="310" y="343" font-size="13.75" fill="#2a5fb3">Solver Settings</text>
<line x1="284" y1="353.5" x2="860" y2="353.5" stroke="#dfe1e5" stroke-width="1"/>
<path d="M291.0 366.0l3.5 3.5l3.5-3.5" fill="none" stroke="#2a5fb3" stroke-width="1.3"/>
<text x="310" y="372" font-size="13.75" fill="#2a5fb3">Objective Function</text>
<path d="M783.5 367h13 M790 360.5v13" fill="none" stroke="#2f7fd0" stroke-width="1.3"/>
<path d="M802.5 365h8l-4 4z" fill="#111"/>
<path d="M831.0 364h-8v6.5h8" fill="none" stroke="#2f7fd0" stroke-width="1.1"/>
<rect x="824.5" y="365.8" width="6" height="3" fill="#2f7fd0"/>
<path d="M834.0 364h4.5v6.5h-4.5" fill="none" stroke="#2f7fd0" stroke-width="1.1"/>
<rect x="835.0" y="365.8" width="1.8" height="3" fill="#2f7fd0"/>
<path d="M832.5 359.5v15 M829.0 359.5q3.5 0 3.5 1.5q0-1.5 3.5-1.5 M829.0 374.5q3.5 0 3.5-1.5q0 1.5 3.5 1.5" fill="none" stroke="#2f7fd0" stroke-width="1"/>
<path d="M842 365h8l-4 4z" fill="#111"/>
<circle cx="297" cy="397" r="6.5" fill="none" stroke="#2f86d6" stroke-width="1.1"/>
<text x="297" y="401" font-size="10" fill="#2f86d6" text-anchor="middle" font-style="italic" font-family="Liberation Serif">i</text>
<text x="316.5" y="402" font-size="11.85" fill="#1b1b1b">The objective is only evaluated at the final time.</text>
<rect x="289.5" y="411.5" width="564" height="140" fill="#fff" stroke="#c8c8c8" stroke-width="1"/>
<rect x="290" y="412" width="563" height="27" fill="#f0f0f0"/>
<path d="M294 415.5l4 3.5l-4 3.5z M299 415.5l4 3.5l-4 3.5z" fill="#111"/>
<text x="308" y="432" font-size="11.5" fill="#1b1b1b">Expression</text>
<text x="503" y="432" font-size="11.5" fill="#1b1b1b">Description</text>
<text x="651.5" y="432" font-size="11.5" fill="#1b1b1b">Evaluate for</text>
<line x1="290" y1="463.5" x2="853" y2="463.5" stroke="#a8a8a8" stroke-width="1"/>
<line x1="290" y1="489.5" x2="853" y2="489.5" stroke="#a8a8a8" stroke-width="1"/>
<line x1="290" y1="515.5" x2="853" y2="515.5" stroke="#a8a8a8" stroke-width="1"/>
<line x1="290" y1="541.5" x2="853" y2="541.5" stroke="#a8a8a8" stroke-width="1"/>
<line x1="496.5" y1="412" x2="496.5" y2="541.5" stroke="#b5b5b5" stroke-width="1"/>
<line x1="646.5" y1="412" x2="646.5" y2="541.5" stroke="#b5b5b5" stroke-width="1"/>
<rect x="290" y="550" width="564" height="2.5" fill="#d2d2d2"/>
<text x="293.5" y="455" font-size="12.15" fill="#1b1b1b">comp1.gop.relg1.rrms^2</text>
<rect x="650.0" y="440.5" width="200" height="20" fill="#efefef" stroke="#d6d6d6" stroke-width="1" rx="2.5"/>
<text x="662.5" y="455" font-size="11.9" fill="#1b1b1b">Ray Tracing</text>
<path d="M836 449h8l-4 4z" fill="#111"/>
<text x="293.5" y="481" font-size="12.15" fill="#1b1b1b">comp1.gop.relg2.rrms^2</text>
<rect x="650.0" y="466.5" width="200" height="20" fill="#efefef" stroke="#d6d6d6" stroke-width="1" rx="2.5"/>
<text x="662.5" y="481" font-size="11.9" fill="#1b1b1b">Ray Tracing</text>
<path d="M836 475h8l-4 4z" fill="#111"/>
<text x="293.5" y="507" font-size="12.15" fill="#1b1b1b">comp1.gop.relg3.rrms^2</text>
<rect x="650.0" y="492.5" width="200" height="20" fill="#efefef" stroke="#d6d6d6" stroke-width="1" rx="2.5"/>
<text x="662.5" y="507" font-size="11.9" fill="#1b1b1b">Ray Tracing</text>
<path d="M836 501h8l-4 4z" fill="#111"/>
<rect x="650.0" y="518.5" width="200" height="20" fill="#efefef" stroke="#d6d6d6" stroke-width="1" rx="2.5"/>
<text x="662.5" y="533" font-size="11.9" fill="#1b1b1b">Ray Tracing</text>
<path d="M836 527h8l-4 4z" fill="#111"/>
<path d="M299.5 563v11" fill="none" stroke="#999" stroke-width="1.3"/>
<path d="M299.5 560l-3.5 4h7z" fill="#999"/>
<path d="M322.5 560v11" fill="none" stroke="#999" stroke-width="1.3"/>
<path d="M322.5 574l-3.5-4h7z" fill="#999"/>
<path d="M339 561h13 M339 565h13 M339 569h6 M339 573h6" fill="none" stroke="#aaa" stroke-width="1.2" stroke-dasharray="1.5 1"/>
<path d="M347 569l5 5 M352 569l-5 5" fill="none" stroke="#aaa" stroke-width="1.1"/>
<path d="M370.0 564h-8v6.5h8" fill="none" stroke="#999" stroke-width="1.1"/>
<rect x="363.5" y="565.8" width="6" height="3" fill="#999"/>
<path d="M373.0 564h4.5v6.5h-4.5" fill="none" stroke="#999" stroke-width="1.1"/>
<rect x="374.0" y="565.8" width="1.8" height="3" fill="#999"/>
<path d="M371.5 559.5v15 M368.0 559.5q3.5 0 3.5 1.5q0-1.5 3.5-1.5 M368.0 574.5q3.5 0 3.5-1.5q0 1.5 3.5 1.5" fill="none" stroke="#999" stroke-width="1"/>
<path d="M381.5 564.5h8l-4 4z" fill="#444"/>
<text x="289.5" y="594.5" font-size="11.9" fill="#1b1b1b">Type:</text>
<rect x="402.5" y="580.5" width="450" height="20" fill="#efefef" stroke="#d6d6d6" stroke-width="1" rx="2.5"/>
<text x="415.5" y="594.5" font-size="11.9" fill="#1b1b1b">Minimization</text>
<path d="M840 588.5h8l-4 4z" fill="#111"/>
<text x="289.5" y="622" font-size="11.9" fill="#1b1b1b">Multiple objectives:</text>
<rect x="402.5" y="607.5" width="450" height="20" fill="#efefef" stroke="#d6d6d6" stroke-width="1" rx="2.5"/>
<text x="415.5" y="622" font-size="11.9" fill="#1b1b1b">Sum of objectives</text>
<path d="M840 616h8l-4 4z" fill="#111"/>
<text x="289.5" y="648.5" font-size="11.9" fill="#1b1b1b">Solution:</text>
<rect x="402.5" y="634.5" width="450" height="20" fill="#efefef" stroke="#d6d6d6" stroke-width="1" rx="2.5"/>
<text x="415.5" y="648.5" font-size="11.9" fill="#1b1b1b">Auto</text>
<path d="M840 642.5h8l-4 4z" fill="#111"/>
<line x1="284" y1="666.5" x2="860" y2="666.5" stroke="#dfe1e5" stroke-width="1"/>
<path d="M291.0 678.5l3.5 3.5l3.5-3.5" fill="none" stroke="#2a5fb3" stroke-width="1.3"/>
<text x="310" y="684.5" font-size="13.75" fill="#2a5fb3">Control Parameters</text>
<rect x="289.5" y="702.5" width="564" height="223" fill="#fff" stroke="#c8c8c8" stroke-width="1"/>
<rect x="290" y="703" width="563" height="26.5" fill="#f0f0f0"/>
<path d="M294 706.5l4 3.5l-4 3.5z M299 706.5l4 3.5l-4 3.5z" fill="#111"/>
<rect x="780" y="729.5" width="73" height="181" fill="#f3f3f3"/>
<text x="308" y="723" font-size="11.9" fill="#1b1b1b">Parameter</text>
<text x="513.5" y="723" font-size="11.9" fill="#1b1b1b">Initial value</text>
<text x="592" y="723" font-size="11.9" fill="#1b1b1b">Lower bound</text>
<text x="683" y="723" font-size="11.9" fill="#1b1b1b">Upper bound</text>
<text x="785.5" y="723" font-size="11.9" fill="#1b1b1b">Unit</text>
<line x1="290" y1="754.5" x2="853" y2="754.5" stroke="#a8a8a8" stroke-width="1"/>
<line x1="290" y1="780.5" x2="853" y2="780.5" stroke="#a8a8a8" stroke-width="1"/>
<line x1="290" y1="806.5" x2="853" y2="806.5" stroke="#a8a8a8" stroke-width="1"/>
<line x1="290" y1="832.5" x2="853" y2="832.5" stroke="#a8a8a8" stroke-width="1"/>
<line x1="290" y1="858.5" x2="853" y2="858.5" stroke="#a8a8a8" stroke-width="1"/>
<line x1="290" y1="884.5" x2="853" y2="884.5" stroke="#a8a8a8" stroke-width="1"/>
<line x1="290" y1="910.5" x2="853" y2="910.5" stroke="#a8a8a8" stroke-width="1"/>
<line x1="508.5" y1="703" x2="508.5" y2="910.5" stroke="#b5b5b5" stroke-width="1"/>
<line x1="677.5" y1="703" x2="677.5" y2="910.5" stroke="#b5b5b5" stroke-width="1"/>
<line x1="779.5" y1="703" x2="779.5" y2="910.5" stroke="#b5b5b5" stroke-width="1"/>
<line x1="839.5" y1="703" x2="839.5" y2="910.5" stroke="#b5b5b5" stroke-width="1"/>
<line x1="587.5" y1="729.5" x2="587.5" y2="910.5" stroke="#b5b5b5" stroke-width="1"/>
<line x1="852.5" y1="703" x2="852.5" y2="729" stroke="#b5b5b5" stroke-width="1"/>
<rect x="290" y="924" width="564" height="2.5" fill="#d2d2d2"/>
<rect x="293.0" y="732.0" width="212" height="19" fill="#efefef" stroke="#d6d6d6" stroke-width="1" rx="2.5"/>
<text x="305.5" y="746" font-size="11.4" fill="#1b1b1b">dR1_1 (L1, surface 1 adjustment)</text>
<path d="M491.5 740h8l-4 4z" fill="#111"/>
<text x="512" y="746" font-size="12.4" fill="#1b1b1b">0[mm]</text>
<text x="590.5" y="746" font-size="12.4" fill="#1b1b1b">-20[mm]</text>
<text x="681" y="746" font-size="12.4" fill="#1b1b1b">20[mm]</text>
<text x="783.5" y="746" font-size="12.2" fill="#1b1b1b">m</text>
<rect x="293.0" y="758.0" width="212" height="19" fill="#efefef" stroke="#d6d6d6" stroke-width="1" rx="2.5"/>
<text x="305.5" y="772" font-size="11.4" fill="#1b1b1b">dR2_1 (L1, surface 2 adjustment)</text>
<path d="M491.5 766h8l-4 4z" fill="#111"/>
<text x="512" y="772" font-size="12.4" fill="#1b1b1b">0[mm]</text>
<text x="590.5" y="772" font-size="12.4" fill="#1b1b1b">-20[mm]</text>
<text x="681" y="772" font-size="12.4" fill="#1b1b1b">20[mm]</text>
<text x="783.5" y="772" font-size="12.2" fill="#1b1b1b">m</text>
<rect x="293.0" y="784.0" width="212" height="19" fill="#efefef" stroke="#d6d6d6" stroke-width="1" rx="2.5"/>
<text x="305.5" y="798" font-size="11.4" fill="#1b1b1b">dR2_2 (L2, surface 2 adjustment)</text>
<path d="M491.5 792h8l-4 4z" fill="#111"/>
<text x="512" y="798" font-size="12.4" fill="#1b1b1b">0[mm]</text>
<text x="590.5" y="798" font-size="12.4" fill="#1b1b1b">-500[mm]</text>
<text x="681" y="798" font-size="12.4" fill="#1b1b1b">500[mm]</text>
<text x="783.5" y="798" font-size="12.2" fill="#1b1b1b">m</text>
<rect x="293.0" y="810.0" width="212" height="19" fill="#efefef" stroke="#d6d6d6" stroke-width="1" rx="2.5"/>
<text x="305.5" y="824" font-size="11.4" fill="#1b1b1b">dR1_4 (L3, surface 1 adjustment)</text>
<path d="M491.5 818h8l-4 4z" fill="#111"/>
<text x="512" y="824" font-size="12.4" fill="#1b1b1b">0[mm]</text>
<text x="590.5" y="824" font-size="12.4" fill="#1b1b1b">-10[mm]</text>
<text x="681" y="824" font-size="12.4" fill="#1b1b1b">10[mm]</text>
<text x="783.5" y="824" font-size="12.2" fill="#1b1b1b">m</text>
<rect x="293.0" y="836.0" width="212" height="19" fill="#efefef" stroke="#d6d6d6" stroke-width="1" rx="2.5"/>
<text x="305.5" y="850" font-size="11.4" fill="#1b1b1b">dR2_4 (L3, surface 2 adjustment)</text>
<path d="M491.5 844h8l-4 4z" fill="#111"/>
<text x="512" y="850" font-size="12.4" fill="#1b1b1b">0[mm]</text>
<text x="590.5" y="850" font-size="12.4" fill="#1b1b1b">-10[mm]</text>
<text x="681" y="850" font-size="12.4" fill="#1b1b1b">10[mm]</text>
<text x="783.5" y="850" font-size="12.2" fill="#1b1b1b">m</text>
<rect x="293.0" y="862.0" width="212" height="19" fill="#efefef" stroke="#d6d6d6" stroke-width="1" rx="2.5"/>
<text x="305.5" y="876" font-size="11.4" fill="#1b1b1b">dR2_5 (L4, surface 2 adjustment)</text>
<path d="M491.5 870h8l-4 4z" fill="#111"/>
<text x="512" y="876" font-size="12.4" fill="#1b1b1b">0[mm]</text>
<text x="590.5" y="876" font-size="12.4" fill="#1b1b1b">-500[mm]</text>
<text x="681" y="876" font-size="12.4" fill="#1b1b1b">500[mm]</text>
<text x="783.5" y="876" font-size="12.2" fill="#1b1b1b">m</text>
<rect x="293.0" y="888.0" width="212" height="19" fill="#efefef" stroke="#d6d6d6" stroke-width="1" rx="2.5"/>
<text x="305.5" y="902" font-size="11.4" fill="#1b1b1b">dR1_6 (L5, surface 1 adjustment)</text>
<path d="M491.5 896h8l-4 4z" fill="#111"/>
<text x="512" y="902" font-size="12.4" fill="#1b1b1b">0[mm]</text>
<text x="590.5" y="902" font-size="12.4" fill="#1b1b1b">-10[mm]</text>
<text x="681" y="902" font-size="12.4" fill="#1b1b1b">10[mm]</text>
<text x="783.5" y="902" font-size="12.2" fill="#1b1b1b">m</text>
<path d="M299.5 937v11" fill="none" stroke="#999" stroke-width="1.3"/>
<path d="M299.5 934l-3.5 4h7z" fill="#999"/>
<path d="M322.5 934v11" fill="none" stroke="#999" stroke-width="1.3"/>
<path d="M322.5 948l-3.5-4h7z" fill="#999"/>
<path d="M339 941h13 M345.5 934.5v13" fill="none" stroke="#2f7fd0" stroke-width="1.3"/>
<path d="M362 935h13 M362 939h13 M362 943h6 M362 947h6" fill="none" stroke="#aaa" stroke-width="1.2" stroke-dasharray="1.5 1"/>
<path d="M370 943l5 5 M375 943l-5 5" fill="none" stroke="#aaa" stroke-width="1.1"/>
<path d="M384 947l3-8h12l-3 8z" fill="#f0a030"/>
<path d="M384 947v-11h5l2 2h5v2" fill="none" stroke="#f0a030" stroke-width="1.4"/>
<path d="M405 939h8l-4 4z" fill="#111"/>
<path d="M426.5 934.5h12l1 1v12h-13z" fill="none" stroke="#2f7fd0" stroke-width="1.4"/>
<rect x="429" y="935" width="8" height="4.5" fill="none" stroke="#2f7fd0" stroke-width="1.2"/>
<rect x="430" y="943" width="6" height="4" fill="none" stroke="#2f7fd0" stroke-width="1.2"/>
<line x1="284" y1="959.5" x2="860" y2="959.5" stroke="#dfe1e5" stroke-width="1"/>
<path d="M293.0 969.5l3.5 3.5l-3.5 3.5" fill="none" stroke="#222" stroke-width="1.3"/>
<text x="310" y="978" font-size="13.75" fill="#2a5fb3">Constraints</text>
<path d="M783.5 972h13 M790 965.5v13" fill="none" stroke="#2f7fd0" stroke-width="1.3"/>
<path d="M802.5 970h8l-4 4z" fill="#111"/>
<path d="M831.0 969h-8v6.5h8" fill="none" stroke="#2f7fd0" stroke-width="1.1"/>
<rect x="824.5" y="970.8" width="6" height="3" fill="#2f7fd0"/>
<path d="M834.0 969h4.5v6.5h-4.5" fill="none" stroke="#2f7fd0" stroke-width="1.1"/>
<rect x="835.0" y="970.8" width="1.8" height="3" fill="#2f7fd0"/>
<path d="M832.5 964.5v15 M829.0 964.5q3.5 0 3.5 1.5q0-1.5 3.5-1.5 M829.0 979.5q3.5 0 3.5-1.5q0 1.5 3.5 1.5" fill="none" stroke="#2f7fd0" stroke-width="1"/>
<path d="M842 970h8l-4 4z" fill="#111"/>
<line x1="284" y1="988.5" x2="860" y2="988.5" stroke="#dfe1e5" stroke-width="1"/>
<path d="M293.0 998.5l3.5 3.5l-3.5 3.5" fill="none" stroke="#222" stroke-width="1.3"/>
<text x="310" y="1007" font-size="13.75" fill="#2a5fb3">Output</text>
<path d="M867 181a4 4 0 0 1 4 -4h1038a4 4 0 0 1 4 4v599h-1046z" fill="#e4e5e8" transform="translate(-0.6,0.6)"/>
<path d="M867 181a4 4 0 0 1 4 -4h1038a4 4 0 0 1 4 4v599h-1046z" fill="#e4e5e8" transform="translate(0.6,0.6)"/>
<path d="M867 181a4 4 0 0 1 4 -4h1038a4 4 0 0 1 4 4v599h-1046z" fill="#f9fafd"/>
<text x="881.5" y="199" font-size="12.5" fill="#444">Graphics</text>
<text x="958.3" y="199" font-size="12.3" fill="#2a7ad0">Plot 1</text>
<path d="M1000 191.5l8.5 8.5 M1008.5 191.5l-8.5 8.5" fill="none" stroke="#444" stroke-width="1.2"/>
<rect x="953" y="207" width="65" height="2.5" fill="#2a7ad0"/>
<path d="M1860 193l4 4l4-4" fill="none" stroke="#b5b5b5" stroke-width="1.1"/>
<rect x="1878.5" y="190.5" width="9" height="9" fill="none" stroke="#9a9a9a" stroke-width="1"/>
<rect x="1878.5" y="190.5" width="9" height="2" fill="#9a9a9a"/>
<path d="M1897.5 190v5 M1901.5 190v5 M1896 195.5h7 M1899.5 195v6 M1897 189.5h5" fill="none" stroke="#9a9a9a" stroke-width="1.2"/>
<line x1="867" y1="210.5" x2="1913" y2="210.5" stroke="#e3e5ea" stroke-width="1"/>
<circle cx="881.5" cy="221.0" r="5.5" fill="none" stroke="#2f7fd0" stroke-width="1.4"/>
<path d="M885.5 225.0l4 4" fill="none" stroke="#2f7fd0" stroke-width="2"/>
<path d="M878.5 221.0h6 M881.5 218.0v6" fill="none" stroke="#2f7fd0" stroke-width="1.2"/>
<circle cx="904.5" cy="221.0" r="5.5" fill="none" stroke="#2f7fd0" stroke-width="1.4"/>
<path d="M908.5 225.0l4 4" fill="none" stroke="#2f7fd0" stroke-width="2"/>
<path d="M901.5 221.0h6" fill="none" stroke="#2f7fd0" stroke-width="1.2"/>
<circle cx="929.5" cy="221.0" r="5.5" fill="none" stroke="#2f7fd0" stroke-width="1.4"/>
<path d="M933.5 225.0l4 4" fill="none" stroke="#2f7fd0" stroke-width="2"/>
<path d="M926.5 221.0h6 M929.5 218.0v6" fill="none" stroke="#2f7fd0" stroke-width="1.2"/>
<rect x="922.5" y="221.0" width="7" height="7" fill="none" stroke="#2f7fd0" stroke-width="1" stroke-dasharray="1.5 1"/>
<path d="M943 220.5h8l-4 4z" fill="#111"/>
<rect x="962.5" y="215.5" width="14" height="14" fill="none" stroke="#666" stroke-width="1"/>
<path d="M969.5 217v11 M964 222.5h11" fill="none" stroke="#2f7fd0" stroke-width="1"/>
<path d="M969.5 216.5l-2 2.5h4z M969.5 228.5l-2-2.5h4z M963.5 222.5l2.5-2v4z M975.5 222.5l-2.5-2v4z" fill="#2f7fd0"/>
<line x1="985.5" y1="214" x2="985.5" y2="231" stroke="#d6d8dd" stroke-width="1"/>
<line x1="1040.5" y1="214" x2="1040.5" y2="231" stroke="#d6d8dd" stroke-width="1"/>
<line x1="1071.5" y1="214" x2="1071.5" y2="231" stroke="#d6d8dd" stroke-width="1"/>
<line x1="1118.5" y1="214" x2="1118.5" y2="231" stroke="#d6d8dd" stroke-width="1"/>
<rect x="991.5" y="213.5" width="19" height="19" fill="#cde4f8" stroke="#9cc8ee" stroke-width="1" rx="2"/>
<rect x="1015.5" y="213.5" width="19" height="19" fill="#cde4f8" stroke="#9cc8ee" stroke-width="1" rx="2"/>
<rect x="994.5" y="216.5" width="13" height="13" fill="#fff" stroke="#555" stroke-width="1"/>
<line x1="997.75" y1="217" x2="997.75" y2="229" stroke="#2f7fd0" stroke-width="0.8"/>
<line x1="995" y1="219.75" x2="1007" y2="219.75" stroke="#2f7fd0" stroke-width="0.8"/>
<line x1="1001.0" y1="217" x2="1001.0" y2="229" stroke="#2f7fd0" stroke-width="0.8"/>
<line x1="995" y1="223.0" x2="1007" y2="223.0" stroke="#2f7fd0" stroke-width="0.8"/>
<line x1="1004.25" y1="217" x2="1004.25" y2="229" stroke="#2f7fd0" stroke-width="0.8"/>
<line x1="995" y1="226.25" x2="1007" y2="226.25" stroke="#2f7fd0" stroke-width="0.8"/>
<rect x="1018.5" y="216.5" width="13" height="13" fill="#e8f0f8" stroke="#555" stroke-width="1"/>
<defs><linearGradient id="cbg" x1="0" y1="0" x2="0" y2="1"><stop offset="0" stop-color="#2050d0"/><stop offset="0.5" stop-color="#e0a000"/><stop offset="1" stop-color="#e02010"/></linearGradient></defs>
<rect x="1026" y="218" width="3" height="10" fill="url(#cbg)"/>
<path d="M1050 221v-3a5 5 0 0 1 10 0v3" fill="none" stroke="#2f7fd0" stroke-width="1.8"/>
<rect x="1049" y="220" width="12" height="9" fill="#2f7fd0" rx="1"/>
<ellipse cx="1086" cy="222.5" rx="7" ry="8" fill="#e8e8e8" stroke="#777" stroke-width="1"/>
<circle cx="1083" cy="219.5" r="1.4" fill="#2f86d6"/>
<circle cx="1088" cy="218.5" r="1.4" fill="#999"/>
<circle cx="1089" cy="223.5" r="1.4" fill="#f0a030"/>
<circle cx="1085" cy="226.5" r="1.4" fill="#e04040"/>
<circle cx="1082" cy="223.5" r="1.4" fill="#c050a0"/>
<path d="M1098 220.5h8l-4 4z" fill="#111"/>
<circle cx="1134" cy="222.5" r="6.5" fill="none" stroke="#2f7fd0" stroke-width="3" stroke-dasharray="6 1.5"/>
<path d="M1148 220.5h8l-4 4z" fill="#111"/>
<path d="M1167 218h4l1.5-2h5l1.5 2h4v10h-16z" fill="#2f7fd0"/>
<circle cx="1175" cy="223" r="3" fill="#fff"/><circle cx="1175" cy="223" r="1.8" fill="#2f7fd0"/>
<rect x="1192.5" y="214.5" width="11" height="5" fill="none" stroke="#2f7fd0" stroke-width="1.3"/>
<rect x="1190" y="219" width="16" height="7" fill="none" stroke="#2f7fd0" stroke-width="1.4" rx="1.5"/>
<rect x="1193.5" y="224.5" width="9" height="5.5" fill="#fff" stroke="#2f7fd0" stroke-width="1.3"/>
<rect x="868" y="235" width="1045" height="545" fill="#fff"/>
<text x="884" y="261.5" font-size="12.6" fill="#111" textLength="968" lengthAdjust="spacingAndGlyphs">dR1_1=4.7115E-4, dR2_1=0.0056617, dR2_2=-0.020504, dR1_4=3.0191E-4, dR2_4=-7.1219E-4, dR2_5=2.7412E-4, dR1_6=-6.7088E-5 Time=6.6713E-10 s</text>
<rect x="1866.2" y="252.2" width="1.6" height="1.6" fill="#222"/>
<rect x="1869.2" y="252.2" width="1.6" height="1.6" fill="#222"/>
<rect x="1872.2" y="252.2" width="1.6" height="1.6" fill="#222"/>
<rect x="1862.2" y="268.2" width="1.6" height="1.6" fill="#222"/>
<rect x="1865.2" y="268.2" width="1.6" height="1.6" fill="#222"/>
<rect x="1868.2" y="268.2" width="1.6" height="1.6" fill="#222"/>
<rect x="1866.2" y="283.2" width="1.6" height="1.6" fill="#222"/>
<rect x="1869.2" y="283.2" width="1.6" height="1.6" fill="#222"/>
<rect x="1872.2" y="283.2" width="1.6" height="1.6" fill="#222"/>
<path d="M1888 244l16-2l3 13l-16 3z" fill="#f4f4f4" stroke="#ddd" stroke-width="0.8"/>
<rect x="1891" y="245" width="13" height="10" fill="#1a4fc0" rx="2"/>
<path d="M1893 247l8 3l-8 4z" fill="#f0d020"/>
<rect x="917.2" y="293" width="904.0" height="463.70000000000005" fill="none" stroke="#6a6a6a" stroke-width="1.8"/>
<line x1="946.1" y1="756.7" x2="946.1" y2="751.2" stroke="#6a6a6a" stroke-width="1.6"/>
<line x1="946.1" y1="293" x2="946.1" y2="298.5" stroke="#6a6a6a" stroke-width="1.6"/>
<text x="946.1" y="774.5" font-size="12.2" fill="#111" text-anchor="middle" textLength="31.04" lengthAdjust="spacingAndGlyphs">-0.02</text>
<line x1="1024.0" y1="756.7" x2="1024.0" y2="751.2" stroke="#6a6a6a" stroke-width="1.6"/>
<line x1="1024.0" y1="293" x2="1024.0" y2="298.5" stroke="#6a6a6a" stroke-width="1.6"/>
<text x="1024.0" y="774.5" font-size="12.2" fill="#111" text-anchor="middle" textLength="7.63" lengthAdjust="spacingAndGlyphs">0</text>
<line x1="1101.9" y1="756.7" x2="1101.9" y2="751.2" stroke="#6a6a6a" stroke-width="1.6"/>
<line x1="1101.9" y1="293" x2="1101.9" y2="298.5" stroke="#6a6a6a" stroke-width="1.6"/>
<text x="1101.9" y="774.5" font-size="12.2" fill="#111" text-anchor="middle" textLength="26.71" lengthAdjust="spacingAndGlyphs">0.02</text>
<line x1="1179.8" y1="756.7" x2="1179.8" y2="751.2" stroke="#6a6a6a" stroke-width="1.6"/>
<line x1="1179.8" y1="293" x2="1179.8" y2="298.5" stroke="#6a6a6a" stroke-width="1.6"/>
<text x="1179.8" y="774.5" font-size="12.2" fill="#111" text-anchor="middle" textLength="26.71" lengthAdjust="spacingAndGlyphs">0.04</text>
<line x1="1257.7" y1="756.7" x2="1257.7" y2="751.2" stroke="#6a6a6a" stroke-width="1.6"/>
<line x1="1257.7" y1="293" x2="1257.7" y2="298.5" stroke="#6a6a6a" stroke-width="1.6"/>
<text x="1257.7" y="774.5" font-size="12.2" fill="#111" text-anchor="middle" textLength="26.71" lengthAdjust="spacingAndGlyphs">0.06</text>
<line x1="1335.6" y1="756.7" x2="1335.6" y2="751.2" stroke="#6a6a6a" stroke-width="1.6"/>
<line x1="1335.6" y1="293" x2="1335.6" y2="298.5" stroke="#6a6a6a" stroke-width="1.6"/>
<text x="1335.6" y="774.5" font-size="12.2" fill="#111" text-anchor="middle" textLength="26.71" lengthAdjust="spacingAndGlyphs">0.08</text>
<line x1="1413.5" y1="756.7" x2="1413.5" y2="751.2" stroke="#6a6a6a" stroke-width="1.6"/>
<line x1="1413.5" y1="293" x2="1413.5" y2="298.5" stroke="#6a6a6a" stroke-width="1.6"/>
<text x="1413.5" y="774.5" font-size="12.2" fill="#111" text-anchor="middle" textLength="19.08" lengthAdjust="spacingAndGlyphs">0.1</text>
<line x1="1491.4" y1="756.7" x2="1491.4" y2="751.2" stroke="#6a6a6a" stroke-width="1.6"/>
<line x1="1491.4" y1="293" x2="1491.4" y2="298.5" stroke="#6a6a6a" stroke-width="1.6"/>
<text x="1491.4" y="774.5" font-size="12.2" fill="#111" text-anchor="middle" textLength="26.71" lengthAdjust="spacingAndGlyphs">0.12</text>
<line x1="1569.3000000000002" y1="756.7" x2="1569.3000000000002" y2="751.2" stroke="#6a6a6a" stroke-width="1.6"/>
<line x1="1569.3000000000002" y1="293" x2="1569.3000000000002" y2="298.5" stroke="#6a6a6a" stroke-width="1.6"/>
<text x="1569.3000000000002" y="774.5" font-size="12.2" fill="#111" text-anchor="middle" textLength="26.71" lengthAdjust="spacingAndGlyphs">0.14</text>
<line x1="1647.2" y1="756.7" x2="1647.2" y2="751.2" stroke="#6a6a6a" stroke-width="1.6"/>
<line x1="1647.2" y1="293" x2="1647.2" y2="298.5" stroke="#6a6a6a" stroke-width="1.6"/>
<text x="1647.2" y="774.5" font-size="12.2" fill="#111" text-anchor="middle" textLength="26.71" lengthAdjust="spacingAndGlyphs">0.16</text>
<line x1="1725.1" y1="756.7" x2="1725.1" y2="751.2" stroke="#6a6a6a" stroke-width="1.6"/>
<line x1="1725.1" y1="293" x2="1725.1" y2="298.5" stroke="#6a6a6a" stroke-width="1.6"/>
<text x="1725.1" y="774.5" font-size="12.2" fill="#111" text-anchor="middle" textLength="26.71" lengthAdjust="spacingAndGlyphs">0.18</text>
<line x1="1803.0" y1="756.7" x2="1803.0" y2="751.2" stroke="#6a6a6a" stroke-width="1.6"/>
<line x1="1803.0" y1="293" x2="1803.0" y2="298.5" stroke="#6a6a6a" stroke-width="1.6"/>
<text x="1812" y="774.5" font-size="12.2" fill="#111" text-anchor="middle" textLength="23.38" lengthAdjust="spacingAndGlyphs">mm</text>
<line x1="917.2" y1="752.7" x2="922.7" y2="752.7" stroke="#6a6a6a" stroke-width="1.6"/>
<line x1="1821.2" y1="752.7" x2="1815.7" y2="752.7" stroke="#6a6a6a" stroke-width="1.6"/>
<text x="912" y="757.2" font-size="12.2" fill="#111" text-anchor="end" textLength="26.71" lengthAdjust="spacingAndGlyphs">0.02</text>
<line x1="917.2" y1="713.75" x2="922.7" y2="713.75" stroke="#6a6a6a" stroke-width="1.6"/>
<line x1="1821.2" y1="713.75" x2="1815.7" y2="713.75" stroke="#6a6a6a" stroke-width="1.6"/>
<text x="912" y="718.25" font-size="12.2" fill="#111" text-anchor="end" textLength="26.71" lengthAdjust="spacingAndGlyphs">0.03</text>
<line x1="917.2" y1="674.8000000000001" x2="922.7" y2="674.8000000000001" stroke="#6a6a6a" stroke-width="1.6"/>
<line x1="1821.2" y1="674.8000000000001" x2="1815.7" y2="674.8000000000001" stroke="#6a6a6a" stroke-width="1.6"/>
<text x="912" y="679.3000000000001" font-size="12.2" fill="#111" text-anchor="end" textLength="26.71" lengthAdjust="spacingAndGlyphs">0.04</text>
<line x1="917.2" y1="635.85" x2="922.7" y2="635.85" stroke="#6a6a6a" stroke-width="1.6"/>
<line x1="1821.2" y1="635.85" x2="1815.7" y2="635.85" stroke="#6a6a6a" stroke-width="1.6"/>
<text x="912" y="640.35" font-size="12.2" fill="#111" text-anchor="end" textLength="26.71" lengthAdjust="spacingAndGlyphs">0.05</text>
<line x1="917.2" y1="596.9000000000001" x2="922.7" y2="596.9000000000001" stroke="#6a6a6a" stroke-width="1.6"/>
<line x1="1821.2" y1="596.9000000000001" x2="1815.7" y2="596.9000000000001" stroke="#6a6a6a" stroke-width="1.6"/>
<text x="912" y="601.4000000000001" font-size="12.2" fill="#111" text-anchor="end" textLength="26.71" lengthAdjust="spacingAndGlyphs">0.06</text>
<line x1="917.2" y1="557.95" x2="922.7" y2="557.95" stroke="#6a6a6a" stroke-width="1.6"/>
<line x1="1821.2" y1="557.95" x2="1815.7" y2="557.95" stroke="#6a6a6a" stroke-width="1.6"/>
<text x="912" y="562.45" font-size="12.2" fill="#111" text-anchor="end" textLength="26.71" lengthAdjust="spacingAndGlyphs">0.07</text>
<line x1="917.2" y1="519.0" x2="922.7" y2="519.0" stroke="#6a6a6a" stroke-width="1.6"/>
<line x1="1821.2" y1="519.0" x2="1815.7" y2="519.0" stroke="#6a6a6a" stroke-width="1.6"/>
<text x="912" y="523.5" font-size="12.2" fill="#111" text-anchor="end" textLength="26.71" lengthAdjust="spacingAndGlyphs">0.08</text>
<line x1="917.2" y1="480.05000000000007" x2="922.7" y2="480.05000000000007" stroke="#6a6a6a" stroke-width="1.6"/>
<line x1="1821.2" y1="480.05000000000007" x2="1815.7" y2="480.05000000000007" stroke="#6a6a6a" stroke-width="1.6"/>
<text x="912" y="484.55000000000007" font-size="12.2" fill="#111" text-anchor="end" textLength="26.71" lengthAdjust="spacingAndGlyphs">0.09</text>
<line x1="917.2" y1="441.1" x2="922.7" y2="441.1" stroke="#6a6a6a" stroke-width="1.6"/>
<line x1="1821.2" y1="441.1" x2="1815.7" y2="441.1" stroke="#6a6a6a" stroke-width="1.6"/>
<text x="912" y="445.6" font-size="12.2" fill="#111" text-anchor="end" textLength="19.08" lengthAdjust="spacingAndGlyphs">0.1</text>
<line x1="917.2" y1="402.15000000000003" x2="922.7" y2="402.15000000000003" stroke="#6a6a6a" stroke-width="1.6"/>
<line x1="1821.2" y1="402.15000000000003" x2="1815.7" y2="402.15000000000003" stroke="#6a6a6a" stroke-width="1.6"/>
<text x="912" y="406.65000000000003" font-size="12.2" fill="#111" text-anchor="end" textLength="26.71" lengthAdjust="spacingAndGlyphs">0.11</text>
<line x1="917.2" y1="363.2000000000001" x2="922.7" y2="363.2000000000001" stroke="#6a6a6a" stroke-width="1.6"/>
<line x1="1821.2" y1="363.2000000000001" x2="1815.7" y2="363.2000000000001" stroke="#6a6a6a" stroke-width="1.6"/>
<text x="912" y="367.7000000000001" font-size="12.2" fill="#111" text-anchor="end" textLength="26.71" lengthAdjust="spacingAndGlyphs">0.12</text>
<line x1="917.2" y1="324.25000000000006" x2="922.7" y2="324.25000000000006" stroke="#6a6a6a" stroke-width="1.6"/>
<line x1="1821.2" y1="324.25000000000006" x2="1815.7" y2="324.25000000000006" stroke="#6a6a6a" stroke-width="1.6"/>
<text x="912" y="328.75000000000006" font-size="12.2" fill="#111" text-anchor="end" textLength="26.71" lengthAdjust="spacingAndGlyphs">0.13</text>
<text x="881" y="298" font-size="12.2" fill="#111" text-anchor="middle" textLength="23.38" lengthAdjust="spacingAndGlyphs">mm</text>
<defs><linearGradient id="rb" x1="0" y1="0" x2="0" y2="1"><stop offset="0.0" stop-color="#6a0000"/><stop offset="0.05" stop-color="#a00000"/><stop offset="0.1" stop-color="#c00000"/><stop offset="0.15" stop-color="#d81000"/><stop offset="0.2" stop-color="#e03000"/><stop offset="0.25" stop-color="#e06000"/><stop offset="0.3" stop-color="#e09000"/><stop offset="0.35" stop-color="#e0c000"/><stop offset="0.4" stop-color="#e0e010"/><stop offset="0.45" stop-color="#c8f030"/><stop offset="0.5" stop-color="#90f060"/><stop offset="0.55" stop-color="#60f0a0"/><stop offset="0.6" stop-color="#40f0c8"/><stop offset="0.65" stop-color="#30e0e8"/><stop offset="0.7" stop-color="#30c0f0"/><stop offset="0.75" stop-color="#3090f0"/><stop offset="0.8" stop-color="#3070e8"/><stop offset="0.85" stop-color="#2c50e0"/><stop offset="0.9" stop-color="#2830c8"/><stop offset="0.95" stop-color="#2424a8"/><stop offset="1.0" stop-color="#1c1c80"/></linearGradient></defs>
<rect x="1842" y="340" width="15" height="410.5" fill="url(#rb)" stroke="#222" stroke-width="1"/>
<line x1="1842" y1="360.5" x2="1845" y2="360.5" stroke="#111" stroke-width="1.2"/>
<line x1="1854" y1="360.5" x2="1857" y2="360.5" stroke="#111" stroke-width="1.2"/>
<text x="1866.5" y="365.0" font-size="12.2" fill="#111" textLength="22.9" lengthAdjust="spacingAndGlyphs">640</text>
<line x1="1842" y1="401.6" x2="1845" y2="401.6" stroke="#111" stroke-width="1.2"/>
<line x1="1854" y1="401.6" x2="1857" y2="401.6" stroke="#111" stroke-width="1.2"/>
<text x="1866.5" y="406.1" font-size="12.2" fill="#111" textLength="22.9" lengthAdjust="spacingAndGlyphs">620</text>
<line x1="1842" y1="442.7" x2="1845" y2="442.7" stroke="#111" stroke-width="1.2"/>
<line x1="1854" y1="442.7" x2="1857" y2="442.7" stroke="#111" stroke-width="1.2"/>
<text x="1866.5" y="447.2" font-size="12.2" fill="#111" textLength="22.9" lengthAdjust="spacingAndGlyphs">600</text>
<line x1="1842" y1="483.8" x2="1845" y2="483.8" stroke="#111" stroke-width="1.2"/>
<line x1="1854" y1="483.8" x2="1857" y2="483.8" stroke="#111" stroke-width="1.2"/>
<text x="1866.5" y="488.3" font-size="12.2" fill="#111" textLength="22.9" lengthAdjust="spacingAndGlyphs">580</text>
<line x1="1842" y1="524.9" x2="1845" y2="524.9" stroke="#111" stroke-width="1.2"/>
<line x1="1854" y1="524.9" x2="1857" y2="524.9" stroke="#111" stroke-width="1.2"/>
<text x="1866.5" y="529.4" font-size="12.2" fill="#111" textLength="22.9" lengthAdjust="spacingAndGlyphs">560</text>
<line x1="1842" y1="566.0" x2="1845" y2="566.0" stroke="#111" stroke-width="1.2"/>
<line x1="1854" y1="566.0" x2="1857" y2="566.0" stroke="#111" stroke-width="1.2"/>
<text x="1866.5" y="570.5" font-size="12.2" fill="#111" textLength="22.9" lengthAdjust="spacingAndGlyphs">540</text>
<line x1="1842" y1="607.1" x2="1845" y2="607.1" stroke="#111" stroke-width="1.2"/>
<line x1="1854" y1="607.1" x2="1857" y2="607.1" stroke="#111" stroke-width="1.2"/>
<text x="1866.5" y="611.6" font-size="12.2" fill="#111" textLength="22.9" lengthAdjust="spacingAndGlyphs">520</text>
<line x1="1842" y1="648.2" x2="1845" y2="648.2" stroke="#111" stroke-width="1.2"/>
<line x1="1854" y1="648.2" x2="1857" y2="648.2" stroke="#111" stroke-width="1.2"/>
<text x="1866.5" y="652.7" font-size="12.2" fill="#111" textLength="22.9" lengthAdjust="spacingAndGlyphs">500</text>
<line x1="1842" y1="689.3" x2="1845" y2="689.3" stroke="#111" stroke-width="1.2"/>
<line x1="1854" y1="689.3" x2="1857" y2="689.3" stroke="#111" stroke-width="1.2"/>
<text x="1866.5" y="693.8" font-size="12.2" fill="#111" textLength="22.9" lengthAdjust="spacingAndGlyphs">480</text>
<line x1="1842" y1="730.4000000000001" x2="1845" y2="730.4000000000001" stroke="#111" stroke-width="1.2"/>
<line x1="1854" y1="730.4000000000001" x2="1857" y2="730.4000000000001" stroke="#111" stroke-width="1.2"/>
<text x="1866.5" y="734.9000000000001" font-size="12.2" fill="#111" textLength="22.9" lengthAdjust="spacingAndGlyphs">460</text>
<text x="1866.5" y="310" font-size="12.2" fill="#111" text-anchor="middle" textLength="19.3" lengthAdjust="spacingAndGlyphs">nm</text>
<path fill="#78f078" d="M1195.5 363.4h1.3v1.3h-1.3zM1195.5 364.5h1.3v1.3h-1.3zM1195.4 365.6h1.3v1.3h-1.3zM1195.2 366.7h1.3v1.3h-1.3zM1195.0 367.8h1.3v1.3h-1.3zM1194.6 368.9h1.3v1.3h-1.3zM1194.2 369.9h1.3v1.3h-1.3zM1193.8 371.0h1.3v1.3h-1.3zM1193.2 372.0h1.3v1.3h-1.3zM1192.7 372.9h1.3v1.3h-1.3zM1192.0 373.8h1.3v1.3h-1.3zM1191.3 374.7h1.3v1.3h-1.3zM1190.5 375.5h1.3v1.3h-1.3zM1189.7 376.3h1.3v1.3h-1.3zM1188.8 377.0h1.3v1.3h-1.3zM1187.9 377.7h1.3v1.3h-1.3zM1186.9 378.2h1.3v1.3h-1.3zM1186.0 378.8h1.3v1.3h-1.3zM1184.9 379.2h1.3v1.3h-1.3zM1183.9 379.6h1.3v1.3h-1.3zM1182.8 380.0h1.3v1.3h-1.3zM1181.7 380.2h1.3v1.3h-1.3zM1180.6 380.4h1.3v1.3h-1.3zM1179.5 380.5h1.3v1.3h-1.3zM1178.3 380.6h1.3v1.3h-1.3zM1177.2 380.5h1.3v1.3h-1.3zM1176.1 380.4h1.3v1.3h-1.3zM1175.0 380.2h1.3v1.3h-1.3zM1173.9 380.0h1.3v1.3h-1.3zM1172.8 379.6h1.3v1.3h-1.3zM1171.8 379.2h1.3v1.3h-1.3zM1170.7 378.8h1.3v1.3h-1.3zM1169.8 378.2h1.3v1.3h-1.3zM1168.8 377.7h1.3v1.3h-1.3zM1167.9 377.0h1.3v1.3h-1.3zM1167.0 376.3h1.3v1.3h-1.3zM1166.2 375.5h1.3v1.3h-1.3zM1165.4 374.7h1.3v1.3h-1.3zM1164.7 373.8h1.3v1.3h-1.3zM1164.0 372.9h1.3v1.3h-1.3zM1163.5 372.0h1.3v1.3h-1.3zM1162.9 371.0h1.3v1.3h-1.3zM1162.5 369.9h1.3v1.3h-1.3zM1162.1 368.9h1.3v1.3h-1.3zM1161.7 367.8h1.3v1.3h-1.3zM1161.5 366.7h1.3v1.3h-1.3zM1161.3 365.6h1.3v1.3h-1.3zM1161.2 364.5h1.3v1.3h-1.3zM1161.1 363.4h1.3v1.3h-1.3zM1161.2 362.2h1.3v1.3h-1.3zM1161.3 361.1h1.3v1.3h-1.3zM1161.5 360.0h1.3v1.3h-1.3zM1161.7 358.9h1.3v1.3h-1.3zM1162.1 357.8h1.3v1.3h-1.3zM1162.5 356.8h1.3v1.3h-1.3zM1162.9 355.7h1.3v1.3h-1.3zM1163.5 354.8h1.3v1.3h-1.3zM1164.0 353.8h1.3v1.3h-1.3zM1164.7 352.9h1.3v1.3h-1.3zM1165.4 352.0h1.3v1.3h-1.3zM1166.2 351.2h1.3v1.3h-1.3zM1167.0 350.4h1.3v1.3h-1.3zM1167.9 349.7h1.3v1.3h-1.3zM1168.8 349.0h1.3v1.3h-1.3zM1169.8 348.5h1.3v1.3h-1.3zM1170.7 347.9h1.3v1.3h-1.3zM1171.8 347.5h1.3v1.3h-1.3zM1172.8 347.1h1.3v1.3h-1.3zM1173.9 346.7h1.3v1.3h-1.3zM1175.0 346.5h1.3v1.3h-1.3zM1176.1 346.3h1.3v1.3h-1.3zM1177.2 346.2h1.3v1.3h-1.3zM1178.3 346.2h1.3v1.3h-1.3zM1179.5 346.2h1.3v1.3h-1.3zM1180.6 346.3h1.3v1.3h-1.3zM1181.7 346.5h1.3v1.3h-1.3zM1182.8 346.7h1.3v1.3h-1.3zM1183.9 347.1h1.3v1.3h-1.3zM1184.9 347.5h1.3v1.3h-1.3zM1186.0 347.9h1.3v1.3h-1.3zM1186.9 348.5h1.3v1.3h-1.3zM1187.9 349.0h1.3v1.3h-1.3zM1188.8 349.7h1.3v1.3h-1.3zM1189.7 350.4h1.3v1.3h-1.3zM1190.5 351.2h1.3v1.3h-1.3zM1191.3 352.0h1.3v1.3h-1.3zM1192.0 352.9h1.3v1.3h-1.3zM1192.7 353.8h1.3v1.3h-1.3zM1193.2 354.8h1.3v1.3h-1.3zM1193.8 355.7h1.3v1.3h-1.3zM1194.2 356.8h1.3v1.3h-1.3zM1194.6 357.8h1.3v1.3h-1.3zM1195.0 358.9h1.3v1.3h-1.3zM1195.2 360.0h1.3v1.3h-1.3zM1195.4 361.1h1.3v1.3h-1.3zM1195.5 362.2h1.3v1.3h-1.3zM1197.5 363.4h1.3v1.3h-1.3zM1197.5 364.6h1.3v1.3h-1.3zM1197.4 365.9h1.3v1.3h-1.3zM1197.2 367.1h1.3v1.3h-1.3zM1196.9 368.3h1.3v1.3h-1.3zM1196.5 369.5h1.3v1.3h-1.3zM1196.1 370.7h1.3v1.3h-1.3zM1195.6 371.8h1.3v1.3h-1.3zM1195.0 373.0h1.3v1.3h-1.3zM1194.3 374.0h1.3v1.3h-1.3zM1193.6 375.0h1.3v1.3h-1.3zM1192.8 376.0h1.3v1.3h-1.3zM1191.9 376.9h1.3v1.3h-1.3zM1191.0 377.8h1.3v1.3h-1.3zM1190.0 378.6h1.3v1.3h-1.3zM1189.0 379.3h1.3v1.3h-1.3zM1187.9 380.0h1.3v1.3h-1.3zM1186.8 380.6h1.3v1.3h-1.3zM1185.7 381.1h1.3v1.3h-1.3zM1184.5 381.5h1.3v1.3h-1.3zM1183.3 381.9h1.3v1.3h-1.3zM1182.1 382.2h1.3v1.3h-1.3zM1180.9 382.4h1.3v1.3h-1.3zM1179.6 382.5h1.3v1.3h-1.3zM1178.3 382.6h1.3v1.3h-1.3zM1177.1 382.5h1.3v1.3h-1.3zM1175.8 382.4h1.3v1.3h-1.3zM1174.6 382.2h1.3v1.3h-1.3zM1173.4 381.9h1.3v1.3h-1.3zM1172.2 381.5h1.3v1.3h-1.3zM1171.0 381.1h1.3v1.3h-1.3zM1169.9 380.6h1.3v1.3h-1.3zM1168.8 380.0h1.3v1.3h-1.3zM1167.7 379.3h1.3v1.3h-1.3zM1166.7 378.6h1.3v1.3h-1.3zM1165.7 377.8h1.3v1.3h-1.3zM1164.8 376.9h1.3v1.3h-1.3zM1163.9 376.0h1.3v1.3h-1.3zM1163.1 375.0h1.3v1.3h-1.3zM1162.4 374.0h1.3v1.3h-1.3zM1161.7 373.0h1.3v1.3h-1.3zM1161.1 371.8h1.3v1.3h-1.3zM1160.6 370.7h1.3v1.3h-1.3zM1160.2 369.5h1.3v1.3h-1.3zM1159.8 368.3h1.3v1.3h-1.3zM1159.5 367.1h1.3v1.3h-1.3zM1159.3 365.9h1.3v1.3h-1.3zM1159.2 364.6h1.3v1.3h-1.3zM1159.1 363.4h1.3v1.3h-1.3zM1159.2 362.1h1.3v1.3h-1.3zM1159.3 360.8h1.3v1.3h-1.3zM1159.5 359.6h1.3v1.3h-1.3zM1159.8 358.4h1.3v1.3h-1.3zM1160.2 357.2h1.3v1.3h-1.3zM1160.6 356.0h1.3v1.3h-1.3zM1161.1 354.9h1.3v1.3h-1.3zM1161.7 353.8h1.3v1.3h-1.3zM1162.4 352.7h1.3v1.3h-1.3zM1163.1 351.7h1.3v1.3h-1.3zM1163.9 350.7h1.3v1.3h-1.3zM1164.8 349.8h1.3v1.3h-1.3zM1165.7 348.9h1.3v1.3h-1.3zM1166.7 348.1h1.3v1.3h-1.3zM1167.7 347.4h1.3v1.3h-1.3zM1168.8 346.7h1.3v1.3h-1.3zM1169.9 346.1h1.3v1.3h-1.3zM1171.0 345.6h1.3v1.3h-1.3zM1172.2 345.2h1.3v1.3h-1.3zM1173.4 344.8h1.3v1.3h-1.3zM1174.6 344.5h1.3v1.3h-1.3zM1175.8 344.3h1.3v1.3h-1.3zM1177.1 344.2h1.3v1.3h-1.3zM1178.3 344.2h1.3v1.3h-1.3zM1179.6 344.2h1.3v1.3h-1.3zM1180.9 344.3h1.3v1.3h-1.3zM1182.1 344.5h1.3v1.3h-1.3zM1183.3 344.8h1.3v1.3h-1.3zM1184.5 345.2h1.3v1.3h-1.3zM1185.7 345.6h1.3v1.3h-1.3zM1186.8 346.1h1.3v1.3h-1.3zM1187.9 346.7h1.3v1.3h-1.3zM1189.0 347.4h1.3v1.3h-1.3zM1190.0 348.1h1.3v1.3h-1.3zM1191.0 348.9h1.3v1.3h-1.3zM1191.9 349.8h1.3v1.3h-1.3zM1192.8 350.7h1.3v1.3h-1.3zM1193.6 351.7h1.3v1.3h-1.3zM1194.3 352.7h1.3v1.3h-1.3zM1195.0 353.8h1.3v1.3h-1.3zM1195.6 354.9h1.3v1.3h-1.3zM1196.1 356.0h1.3v1.3h-1.3zM1196.5 357.2h1.3v1.3h-1.3zM1196.9 358.4h1.3v1.3h-1.3zM1197.2 359.6h1.3v1.3h-1.3zM1197.4 360.8h1.3v1.3h-1.3zM1197.5 362.1h1.3v1.3h-1.3zM1199.5 363.4h1.3v1.3h-1.3zM1199.5 364.7h1.3v1.3h-1.3zM1199.4 366.1h1.3v1.3h-1.3zM1199.1 367.5h1.3v1.3h-1.3zM1198.8 368.8h1.3v1.3h-1.3zM1198.4 370.2h1.3v1.3h-1.3zM1197.9 371.5h1.3v1.3h-1.3zM1197.4 372.7h1.3v1.3h-1.3zM1196.7 374.0h1.3v1.3h-1.3zM1196.0 375.1h1.3v1.3h-1.3zM1195.2 376.3h1.3v1.3h-1.3zM1194.3 377.3h1.3v1.3h-1.3zM1193.3 378.3h1.3v1.3h-1.3zM1192.3 379.3h1.3v1.3h-1.3zM1191.3 380.2h1.3v1.3h-1.3zM1190.1 381.0h1.3v1.3h-1.3zM1188.9 381.7h1.3v1.3h-1.3zM1187.7 382.4h1.3v1.3h-1.3zM1186.5 382.9h1.3v1.3h-1.3zM1185.2 383.4h1.3v1.3h-1.3zM1183.8 383.8h1.3v1.3h-1.3zM1182.5 384.1h1.3v1.3h-1.3zM1181.1 384.4h1.3v1.3h-1.3zM1179.7 384.5h1.3v1.3h-1.3zM1178.3 384.6h1.3v1.3h-1.3zM1177.0 384.5h1.3v1.3h-1.3zM1175.6 384.4h1.3v1.3h-1.3zM1174.2 384.1h1.3v1.3h-1.3zM1172.9 383.8h1.3v1.3h-1.3zM1171.5 383.4h1.3v1.3h-1.3zM1170.2 382.9h1.3v1.3h-1.3zM1169.0 382.4h1.3v1.3h-1.3zM1167.8 381.7h1.3v1.3h-1.3zM1166.6 381.0h1.3v1.3h-1.3zM1165.4 380.2h1.3v1.3h-1.3zM1164.4 379.3h1.3v1.3h-1.3zM1163.4 378.3h1.3v1.3h-1.3zM1162.4 377.3h1.3v1.3h-1.3zM1161.5 376.3h1.3v1.3h-1.3zM1160.7 375.1h1.3v1.3h-1.3zM1160.0 374.0h1.3v1.3h-1.3zM1159.3 372.7h1.3v1.3h-1.3zM1158.8 371.5h1.3v1.3h-1.3zM1158.3 370.2h1.3v1.3h-1.3zM1157.9 368.8h1.3v1.3h-1.3zM1157.6 367.5h1.3v1.3h-1.3zM1157.3 366.1h1.3v1.3h-1.3zM1157.2 364.7h1.3v1.3h-1.3zM1157.1 363.4h1.3v1.3h-1.3zM1157.2 362.0h1.3v1.3h-1.3zM1157.3 360.6h1.3v1.3h-1.3zM1157.6 359.2h1.3v1.3h-1.3zM1157.9 357.9h1.3v1.3h-1.3zM1158.3 356.5h1.3v1.3h-1.3zM1158.8 355.2h1.3v1.3h-1.3zM1159.3 354.0h1.3v1.3h-1.3zM1160.0 352.8h1.3v1.3h-1.3zM1160.7 351.6h1.3v1.3h-1.3zM1161.5 350.4h1.3v1.3h-1.3zM1162.4 349.4h1.3v1.3h-1.3zM1163.4 348.4h1.3v1.3h-1.3zM1164.4 347.4h1.3v1.3h-1.3zM1165.4 346.5h1.3v1.3h-1.3zM1166.6 345.7h1.3v1.3h-1.3zM1167.8 345.0h1.3v1.3h-1.3zM1169.0 344.3h1.3v1.3h-1.3zM1170.2 343.8h1.3v1.3h-1.3zM1171.5 343.3h1.3v1.3h-1.3zM1172.9 342.9h1.3v1.3h-1.3zM1174.2 342.6h1.3v1.3h-1.3zM1175.6 342.3h1.3v1.3h-1.3zM1177.0 342.2h1.3v1.3h-1.3zM1178.3 342.2h1.3v1.3h-1.3zM1179.7 342.2h1.3v1.3h-1.3zM1181.1 342.3h1.3v1.3h-1.3zM1182.5 342.6h1.3v1.3h-1.3zM1183.8 342.9h1.3v1.3h-1.3zM1185.2 343.3h1.3v1.3h-1.3zM1186.5 343.8h1.3v1.3h-1.3zM1187.7 344.3h1.3v1.3h-1.3zM1188.9 345.0h1.3v1.3h-1.3zM1190.1 345.7h1.3v1.3h-1.3zM1191.3 346.5h1.3v1.3h-1.3zM1192.3 347.4h1.3v1.3h-1.3zM1193.3 348.4h1.3v1.3h-1.3zM1194.3 349.4h1.3v1.3h-1.3zM1195.2 350.4h1.3v1.3h-1.3zM1196.0 351.6h1.3v1.3h-1.3zM1196.7 352.8h1.3v1.3h-1.3zM1197.4 354.0h1.3v1.3h-1.3zM1197.9 355.2h1.3v1.3h-1.3zM1198.4 356.5h1.3v1.3h-1.3zM1198.8 357.9h1.3v1.3h-1.3zM1199.1 359.2h1.3v1.3h-1.3zM1199.4 360.6h1.3v1.3h-1.3zM1199.5 362.0h1.3v1.3h-1.3zM1201.1 363.4h1.3v1.3h-1.3zM1201.1 364.8h1.3v1.3h-1.3zM1201.0 366.3h1.3v1.3h-1.3zM1200.7 367.8h1.3v1.3h-1.3zM1200.4 369.3h1.3v1.3h-1.3zM1199.9 370.7h1.3v1.3h-1.3zM1199.4 372.1h1.3v1.3h-1.3zM1198.8 373.4h1.3v1.3h-1.3zM1198.1 374.8h1.3v1.3h-1.3zM1197.3 376.0h1.3v1.3h-1.3zM1196.4 377.2h1.3v1.3h-1.3zM1195.5 378.4h1.3v1.3h-1.3zM1194.5 379.5h1.3v1.3h-1.3zM1193.4 380.5h1.3v1.3h-1.3zM1192.2 381.4h1.3v1.3h-1.3zM1191.0 382.3h1.3v1.3h-1.3zM1189.8 383.1h1.3v1.3h-1.3zM1188.4 383.8h1.3v1.3h-1.3zM1187.1 384.4h1.3v1.3h-1.3zM1185.7 384.9h1.3v1.3h-1.3zM1184.3 385.4h1.3v1.3h-1.3zM1182.8 385.7h1.3v1.3h-1.3zM1181.3 386.0h1.3v1.3h-1.3zM1179.8 386.1h1.3v1.3h-1.3zM1178.3 386.2h1.3v1.3h-1.3zM1176.9 386.1h1.3v1.3h-1.3zM1175.4 386.0h1.3v1.3h-1.3zM1173.9 385.7h1.3v1.3h-1.3zM1172.4 385.4h1.3v1.3h-1.3zM1171.0 384.9h1.3v1.3h-1.3zM1169.6 384.4h1.3v1.3h-1.3zM1168.3 383.8h1.3v1.3h-1.3zM1166.9 383.1h1.3v1.3h-1.3zM1165.7 382.3h1.3v1.3h-1.3zM1164.5 381.4h1.3v1.3h-1.3zM1163.3 380.5h1.3v1.3h-1.3zM1162.2 379.5h1.3v1.3h-1.3zM1161.2 378.4h1.3v1.3h-1.3zM1160.3 377.2h1.3v1.3h-1.3zM1159.4 376.0h1.3v1.3h-1.3zM1158.6 374.8h1.3v1.3h-1.3zM1157.9 373.4h1.3v1.3h-1.3zM1157.3 372.1h1.3v1.3h-1.3zM1156.8 370.7h1.3v1.3h-1.3zM1156.3 369.3h1.3v1.3h-1.3zM1156.0 367.8h1.3v1.3h-1.3zM1155.7 366.3h1.3v1.3h-1.3zM1155.6 364.8h1.3v1.3h-1.3zM1155.5 363.4h1.3v1.3h-1.3zM1155.6 361.9h1.3v1.3h-1.3zM1155.7 360.4h1.3v1.3h-1.3zM1156.0 358.9h1.3v1.3h-1.3zM1156.3 357.4h1.3v1.3h-1.3zM1156.8 356.0h1.3v1.3h-1.3zM1157.3 354.6h1.3v1.3h-1.3zM1157.9 353.3h1.3v1.3h-1.3zM1158.6 352.0h1.3v1.3h-1.3zM1159.4 350.7h1.3v1.3h-1.3zM1160.3 349.5h1.3v1.3h-1.3zM1161.2 348.3h1.3v1.3h-1.3zM1162.2 347.2h1.3v1.3h-1.3zM1163.3 346.2h1.3v1.3h-1.3zM1164.5 345.3h1.3v1.3h-1.3zM1165.7 344.4h1.3v1.3h-1.3zM1166.9 343.6h1.3v1.3h-1.3zM1168.3 342.9h1.3v1.3h-1.3zM1169.6 342.3h1.3v1.3h-1.3zM1171.0 341.8h1.3v1.3h-1.3zM1172.4 341.3h1.3v1.3h-1.3zM1173.9 341.0h1.3v1.3h-1.3zM1175.4 340.7h1.3v1.3h-1.3zM1176.9 340.6h1.3v1.3h-1.3zM1178.3 340.6h1.3v1.3h-1.3zM1179.8 340.6h1.3v1.3h-1.3zM1181.3 340.7h1.3v1.3h-1.3zM1182.8 341.0h1.3v1.3h-1.3zM1184.3 341.3h1.3v1.3h-1.3zM1185.7 341.8h1.3v1.3h-1.3zM1187.1 342.3h1.3v1.3h-1.3zM1188.4 342.9h1.3v1.3h-1.3zM1189.8 343.6h1.3v1.3h-1.3zM1191.0 344.4h1.3v1.3h-1.3zM1192.2 345.3h1.3v1.3h-1.3zM1193.4 346.2h1.3v1.3h-1.3zM1194.5 347.2h1.3v1.3h-1.3zM1195.5 348.3h1.3v1.3h-1.3zM1196.4 349.5h1.3v1.3h-1.3zM1197.3 350.7h1.3v1.3h-1.3zM1198.1 351.9h1.3v1.3h-1.3zM1198.8 353.3h1.3v1.3h-1.3zM1199.4 354.6h1.3v1.3h-1.3zM1199.9 356.0h1.3v1.3h-1.3zM1200.4 357.4h1.3v1.3h-1.3zM1200.7 358.9h1.3v1.3h-1.3zM1201.0 360.4h1.3v1.3h-1.3zM1201.1 361.9h1.3v1.3h-1.3z"/>
<path fill="#2a36f2" d="M1205.7 363.2h1.5v1.5h-1.5zM1205.6 365.0h1.5v1.5h-1.5zM1205.4 366.8h1.5v1.5h-1.5zM1205.1 368.6h1.5v1.5h-1.5zM1204.7 370.3h1.5v1.5h-1.5zM1204.2 372.1h1.5v1.5h-1.5zM1203.6 373.7h1.5v1.5h-1.5zM1202.8 375.4h1.5v1.5h-1.5zM1202.0 376.9h1.5v1.5h-1.5zM1201.0 378.5h1.5v1.5h-1.5zM1200.0 379.9h1.5v1.5h-1.5zM1198.9 381.3h1.5v1.5h-1.5zM1197.6 382.6h1.5v1.5h-1.5zM1196.3 383.9h1.5v1.5h-1.5zM1194.9 385.0h1.5v1.5h-1.5zM1193.5 386.0h1.5v1.5h-1.5zM1192.0 387.0h1.5v1.5h-1.5zM1190.4 387.8h1.5v1.5h-1.5zM1188.7 388.6h1.5v1.5h-1.5zM1187.1 389.2h1.5v1.5h-1.5zM1185.3 389.7h1.5v1.5h-1.5zM1183.6 390.1h1.5v1.5h-1.5zM1181.8 390.4h1.5v1.5h-1.5zM1180.0 390.6h1.5v1.5h-1.5zM1178.2 390.6h1.5v1.5h-1.5zM1176.5 390.6h1.5v1.5h-1.5zM1174.7 390.4h1.5v1.5h-1.5zM1172.9 390.1h1.5v1.5h-1.5zM1171.2 389.7h1.5v1.5h-1.5zM1169.4 389.2h1.5v1.5h-1.5zM1167.8 388.6h1.5v1.5h-1.5zM1166.1 387.8h1.5v1.5h-1.5zM1164.5 387.0h1.5v1.5h-1.5zM1163.0 386.0h1.5v1.5h-1.5zM1161.6 385.0h1.5v1.5h-1.5zM1160.2 383.9h1.5v1.5h-1.5zM1158.9 382.6h1.5v1.5h-1.5zM1157.6 381.3h1.5v1.5h-1.5zM1156.5 379.9h1.5v1.5h-1.5zM1155.5 378.5h1.5v1.5h-1.5zM1154.5 376.9h1.5v1.5h-1.5zM1153.7 375.4h1.5v1.5h-1.5zM1152.9 373.7h1.5v1.5h-1.5zM1152.3 372.1h1.5v1.5h-1.5zM1151.8 370.3h1.5v1.5h-1.5zM1151.4 368.6h1.5v1.5h-1.5zM1151.1 366.8h1.5v1.5h-1.5zM1150.9 365.0h1.5v1.5h-1.5zM1150.8 363.2h1.5v1.5h-1.5zM1150.9 361.5h1.5v1.5h-1.5zM1151.1 359.7h1.5v1.5h-1.5zM1151.4 357.9h1.5v1.5h-1.5zM1151.8 356.2h1.5v1.5h-1.5zM1152.3 354.4h1.5v1.5h-1.5zM1152.9 352.8h1.5v1.5h-1.5zM1153.7 351.1h1.5v1.5h-1.5zM1154.5 349.6h1.5v1.5h-1.5zM1155.5 348.0h1.5v1.5h-1.5zM1156.5 346.6h1.5v1.5h-1.5zM1157.6 345.2h1.5v1.5h-1.5zM1158.9 343.9h1.5v1.5h-1.5zM1160.2 342.6h1.5v1.5h-1.5zM1161.6 341.5h1.5v1.5h-1.5zM1163.0 340.5h1.5v1.5h-1.5zM1164.5 339.5h1.5v1.5h-1.5zM1166.1 338.7h1.5v1.5h-1.5zM1167.8 337.9h1.5v1.5h-1.5zM1169.4 337.3h1.5v1.5h-1.5zM1171.2 336.8h1.5v1.5h-1.5zM1172.9 336.4h1.5v1.5h-1.5zM1174.7 336.1h1.5v1.5h-1.5zM1176.5 335.9h1.5v1.5h-1.5zM1178.2 335.9h1.5v1.5h-1.5zM1180.0 335.9h1.5v1.5h-1.5zM1181.8 336.1h1.5v1.5h-1.5zM1183.6 336.4h1.5v1.5h-1.5zM1185.3 336.8h1.5v1.5h-1.5zM1187.1 337.3h1.5v1.5h-1.5zM1188.7 337.9h1.5v1.5h-1.5zM1190.4 338.7h1.5v1.5h-1.5zM1192.0 339.5h1.5v1.5h-1.5zM1193.5 340.5h1.5v1.5h-1.5zM1194.9 341.5h1.5v1.5h-1.5zM1196.3 342.6h1.5v1.5h-1.5zM1197.6 343.9h1.5v1.5h-1.5zM1198.9 345.2h1.5v1.5h-1.5zM1200.0 346.6h1.5v1.5h-1.5zM1201.0 348.0h1.5v1.5h-1.5zM1202.0 349.6h1.5v1.5h-1.5zM1202.8 351.1h1.5v1.5h-1.5zM1203.6 352.8h1.5v1.5h-1.5zM1204.2 354.4h1.5v1.5h-1.5zM1204.7 356.2h1.5v1.5h-1.5zM1205.1 357.9h1.5v1.5h-1.5zM1205.4 359.7h1.5v1.5h-1.5zM1205.6 361.5h1.5v1.5h-1.5z"/>
<path fill="#2a36f2" d="M1194.0 363.1h1.9v1.9h-1.9zM1194.0 364.2h1.9v1.9h-1.9zM1193.9 365.3h1.9v1.9h-1.9zM1193.7 366.4h1.9v1.9h-1.9zM1193.4 367.5h1.9v1.9h-1.9zM1193.1 368.5h1.9v1.9h-1.9zM1192.7 369.6h1.9v1.9h-1.9zM1192.2 370.6h1.9v1.9h-1.9zM1191.6 371.5h1.9v1.9h-1.9zM1191.0 372.5h1.9v1.9h-1.9zM1190.3 373.3h1.9v1.9h-1.9zM1189.6 374.2h1.9v1.9h-1.9zM1188.8 374.9h1.9v1.9h-1.9zM1187.9 375.7h1.9v1.9h-1.9zM1187.0 376.3h1.9v1.9h-1.9zM1186.0 376.9h1.9v1.9h-1.9zM1185.1 377.4h1.9v1.9h-1.9zM1184.0 377.9h1.9v1.9h-1.9zM1183.0 378.3h1.9v1.9h-1.9zM1181.9 378.6h1.9v1.9h-1.9zM1180.8 378.8h1.9v1.9h-1.9zM1179.7 379.0h1.9v1.9h-1.9zM1178.6 379.0h1.9v1.9h-1.9zM1177.5 379.0h1.9v1.9h-1.9zM1176.4 379.0h1.9v1.9h-1.9zM1175.3 378.8h1.9v1.9h-1.9zM1174.2 378.6h1.9v1.9h-1.9zM1173.1 378.3h1.9v1.9h-1.9zM1172.1 377.9h1.9v1.9h-1.9zM1171.0 377.4h1.9v1.9h-1.9zM1170.0 376.9h1.9v1.9h-1.9zM1169.1 376.3h1.9v1.9h-1.9zM1168.2 375.7h1.9v1.9h-1.9zM1167.3 374.9h1.9v1.9h-1.9zM1166.5 374.2h1.9v1.9h-1.9zM1165.8 373.3h1.9v1.9h-1.9zM1165.1 372.5h1.9v1.9h-1.9zM1164.5 371.5h1.9v1.9h-1.9zM1163.9 370.6h1.9v1.9h-1.9zM1163.4 369.6h1.9v1.9h-1.9zM1163.0 368.5h1.9v1.9h-1.9zM1162.7 367.5h1.9v1.9h-1.9zM1162.4 366.4h1.9v1.9h-1.9zM1162.2 365.3h1.9v1.9h-1.9zM1162.1 364.2h1.9v1.9h-1.9zM1162.0 363.1h1.9v1.9h-1.9zM1162.1 361.9h1.9v1.9h-1.9zM1162.2 360.8h1.9v1.9h-1.9zM1162.4 359.7h1.9v1.9h-1.9zM1162.7 358.6h1.9v1.9h-1.9zM1163.0 357.6h1.9v1.9h-1.9zM1163.4 356.5h1.9v1.9h-1.9zM1163.9 355.5h1.9v1.9h-1.9zM1164.5 354.6h1.9v1.9h-1.9zM1165.1 353.6h1.9v1.9h-1.9zM1165.8 352.8h1.9v1.9h-1.9zM1166.5 351.9h1.9v1.9h-1.9zM1167.3 351.2h1.9v1.9h-1.9zM1168.2 350.4h1.9v1.9h-1.9zM1169.1 349.8h1.9v1.9h-1.9zM1170.0 349.2h1.9v1.9h-1.9zM1171.0 348.7h1.9v1.9h-1.9zM1172.1 348.2h1.9v1.9h-1.9zM1173.1 347.8h1.9v1.9h-1.9zM1174.2 347.5h1.9v1.9h-1.9zM1175.3 347.3h1.9v1.9h-1.9zM1176.4 347.1h1.9v1.9h-1.9zM1177.5 347.1h1.9v1.9h-1.9zM1178.6 347.1h1.9v1.9h-1.9zM1179.7 347.1h1.9v1.9h-1.9zM1180.8 347.3h1.9v1.9h-1.9zM1181.9 347.5h1.9v1.9h-1.9zM1183.0 347.8h1.9v1.9h-1.9zM1184.0 348.2h1.9v1.9h-1.9zM1185.1 348.7h1.9v1.9h-1.9zM1186.0 349.2h1.9v1.9h-1.9zM1187.0 349.8h1.9v1.9h-1.9zM1187.9 350.4h1.9v1.9h-1.9zM1188.8 351.2h1.9v1.9h-1.9zM1189.6 351.9h1.9v1.9h-1.9zM1190.3 352.8h1.9v1.9h-1.9zM1191.0 353.6h1.9v1.9h-1.9zM1191.6 354.6h1.9v1.9h-1.9zM1192.2 355.5h1.9v1.9h-1.9zM1192.7 356.5h1.9v1.9h-1.9zM1193.1 357.6h1.9v1.9h-1.9zM1193.4 358.6h1.9v1.9h-1.9zM1193.7 359.7h1.9v1.9h-1.9zM1193.9 360.8h1.9v1.9h-1.9zM1194.0 361.9h1.9v1.9h-1.9zM1193.6 363.1h1.9v1.9h-1.9zM1193.6 364.3h1.9v1.9h-1.9zM1193.5 365.5h1.9v1.9h-1.9zM1193.2 366.7h1.9v1.9h-1.9zM1192.9 367.9h1.9v1.9h-1.9zM1192.5 369.0h1.9v1.9h-1.9zM1191.9 370.1h1.9v1.9h-1.9zM1191.4 371.2h1.9v1.9h-1.9zM1190.7 372.2h1.9v1.9h-1.9zM1189.9 373.2h1.9v1.9h-1.9zM1189.1 374.1h1.9v1.9h-1.9zM1188.2 374.9h1.9v1.9h-1.9zM1187.2 375.7h1.9v1.9h-1.9zM1186.2 376.4h1.9v1.9h-1.9zM1185.1 376.9h1.9v1.9h-1.9zM1184.0 377.5h1.9v1.9h-1.9zM1182.9 377.9h1.9v1.9h-1.9zM1181.7 378.2h1.9v1.9h-1.9zM1180.5 378.5h1.9v1.9h-1.9zM1179.3 378.6h1.9v1.9h-1.9zM1178.0 378.7h1.9v1.9h-1.9zM1176.8 378.6h1.9v1.9h-1.9zM1175.6 378.5h1.9v1.9h-1.9zM1174.4 378.2h1.9v1.9h-1.9zM1173.2 377.9h1.9v1.9h-1.9zM1172.1 377.5h1.9v1.9h-1.9zM1171.0 376.9h1.9v1.9h-1.9zM1169.9 376.4h1.9v1.9h-1.9zM1168.9 375.7h1.9v1.9h-1.9zM1167.9 374.9h1.9v1.9h-1.9zM1167.0 374.1h1.9v1.9h-1.9zM1166.2 373.2h1.9v1.9h-1.9zM1165.4 372.2h1.9v1.9h-1.9zM1164.7 371.2h1.9v1.9h-1.9zM1164.2 370.1h1.9v1.9h-1.9zM1163.6 369.0h1.9v1.9h-1.9zM1163.2 367.9h1.9v1.9h-1.9zM1162.9 366.7h1.9v1.9h-1.9zM1162.6 365.5h1.9v1.9h-1.9zM1162.5 364.3h1.9v1.9h-1.9zM1162.5 363.1h1.9v1.9h-1.9zM1162.5 361.8h1.9v1.9h-1.9zM1162.6 360.6h1.9v1.9h-1.9zM1162.9 359.4h1.9v1.9h-1.9zM1163.2 358.2h1.9v1.9h-1.9zM1163.6 357.1h1.9v1.9h-1.9zM1164.2 356.0h1.9v1.9h-1.9zM1164.7 354.9h1.9v1.9h-1.9zM1165.4 353.9h1.9v1.9h-1.9zM1166.2 352.9h1.9v1.9h-1.9zM1167.0 352.0h1.9v1.9h-1.9zM1167.9 351.2h1.9v1.9h-1.9zM1168.9 350.4h1.9v1.9h-1.9zM1169.9 349.7h1.9v1.9h-1.9zM1171.0 349.2h1.9v1.9h-1.9zM1172.1 348.6h1.9v1.9h-1.9zM1173.2 348.2h1.9v1.9h-1.9zM1174.4 347.9h1.9v1.9h-1.9zM1175.6 347.6h1.9v1.9h-1.9zM1176.8 347.5h1.9v1.9h-1.9zM1178.0 347.4h1.9v1.9h-1.9zM1179.3 347.5h1.9v1.9h-1.9zM1180.5 347.6h1.9v1.9h-1.9zM1181.7 347.9h1.9v1.9h-1.9zM1182.9 348.2h1.9v1.9h-1.9zM1184.0 348.6h1.9v1.9h-1.9zM1185.1 349.2h1.9v1.9h-1.9zM1186.2 349.7h1.9v1.9h-1.9zM1187.2 350.4h1.9v1.9h-1.9zM1188.2 351.2h1.9v1.9h-1.9zM1189.1 352.0h1.9v1.9h-1.9zM1189.9 352.9h1.9v1.9h-1.9zM1190.7 353.9h1.9v1.9h-1.9zM1191.4 354.9h1.9v1.9h-1.9zM1191.9 356.0h1.9v1.9h-1.9zM1192.5 357.1h1.9v1.9h-1.9zM1192.9 358.2h1.9v1.9h-1.9zM1193.2 359.4h1.9v1.9h-1.9zM1193.5 360.6h1.9v1.9h-1.9zM1193.6 361.8h1.9v1.9h-1.9z"/>
<path fill="#e8140e" d="M1190.2 363.1h1.7v1.7h-1.7zM1190.1 364.0h1.7v1.7h-1.7zM1190.0 364.9h1.7v1.7h-1.7zM1189.8 365.8h1.7v1.7h-1.7zM1189.6 366.7h1.7v1.7h-1.7zM1189.3 367.5h1.7v1.7h-1.7zM1189.0 368.4h1.7v1.7h-1.7zM1188.5 369.1h1.7v1.7h-1.7zM1188.1 369.9h1.7v1.7h-1.7zM1187.5 370.6h1.7v1.7h-1.7zM1186.9 371.3h1.7v1.7h-1.7zM1186.3 371.9h1.7v1.7h-1.7zM1185.6 372.5h1.7v1.7h-1.7zM1184.9 373.1h1.7v1.7h-1.7zM1184.2 373.5h1.7v1.7h-1.7zM1183.4 374.0h1.7v1.7h-1.7zM1182.5 374.3h1.7v1.7h-1.7zM1181.7 374.6h1.7v1.7h-1.7zM1180.8 374.8h1.7v1.7h-1.7zM1179.9 375.0h1.7v1.7h-1.7zM1179.0 375.1h1.7v1.7h-1.7zM1178.2 375.1h1.7v1.7h-1.7zM1177.3 375.1h1.7v1.7h-1.7zM1176.4 375.0h1.7v1.7h-1.7zM1175.5 374.8h1.7v1.7h-1.7zM1174.6 374.6h1.7v1.7h-1.7zM1173.8 374.3h1.7v1.7h-1.7zM1172.9 374.0h1.7v1.7h-1.7zM1172.2 373.5h1.7v1.7h-1.7zM1171.4 373.1h1.7v1.7h-1.7zM1170.7 372.5h1.7v1.7h-1.7zM1170.0 371.9h1.7v1.7h-1.7zM1169.4 371.3h1.7v1.7h-1.7zM1168.8 370.6h1.7v1.7h-1.7zM1168.2 369.9h1.7v1.7h-1.7zM1167.8 369.1h1.7v1.7h-1.7zM1167.3 368.4h1.7v1.7h-1.7zM1167.0 367.5h1.7v1.7h-1.7zM1166.7 366.7h1.7v1.7h-1.7zM1166.5 365.8h1.7v1.7h-1.7zM1166.3 364.9h1.7v1.7h-1.7zM1166.2 364.0h1.7v1.7h-1.7zM1166.2 363.1h1.7v1.7h-1.7zM1166.2 362.3h1.7v1.7h-1.7zM1166.3 361.4h1.7v1.7h-1.7zM1166.5 360.5h1.7v1.7h-1.7zM1166.7 359.6h1.7v1.7h-1.7zM1167.0 358.8h1.7v1.7h-1.7zM1167.3 357.9h1.7v1.7h-1.7zM1167.8 357.1h1.7v1.7h-1.7zM1168.2 356.4h1.7v1.7h-1.7zM1168.8 355.7h1.7v1.7h-1.7zM1169.4 355.0h1.7v1.7h-1.7zM1170.0 354.4h1.7v1.7h-1.7zM1170.7 353.8h1.7v1.7h-1.7zM1171.4 353.2h1.7v1.7h-1.7zM1172.2 352.8h1.7v1.7h-1.7zM1172.9 352.3h1.7v1.7h-1.7zM1173.8 352.0h1.7v1.7h-1.7zM1174.6 351.7h1.7v1.7h-1.7zM1175.5 351.5h1.7v1.7h-1.7zM1176.4 351.3h1.7v1.7h-1.7zM1177.3 351.2h1.7v1.7h-1.7zM1178.2 351.1h1.7v1.7h-1.7zM1179.0 351.2h1.7v1.7h-1.7zM1179.9 351.3h1.7v1.7h-1.7zM1180.8 351.5h1.7v1.7h-1.7zM1181.7 351.7h1.7v1.7h-1.7zM1182.5 352.0h1.7v1.7h-1.7zM1183.4 352.3h1.7v1.7h-1.7zM1184.2 352.8h1.7v1.7h-1.7zM1184.9 353.2h1.7v1.7h-1.7zM1185.6 353.8h1.7v1.7h-1.7zM1186.3 354.4h1.7v1.7h-1.7zM1186.9 355.0h1.7v1.7h-1.7zM1187.5 355.7h1.7v1.7h-1.7zM1188.1 356.4h1.7v1.7h-1.7zM1188.5 357.1h1.7v1.7h-1.7zM1189.0 357.9h1.7v1.7h-1.7zM1189.3 358.8h1.7v1.7h-1.7zM1189.6 359.6h1.7v1.7h-1.7zM1189.8 360.5h1.7v1.7h-1.7zM1190.0 361.4h1.7v1.7h-1.7zM1190.1 362.3h1.7v1.7h-1.7zM1191.2 363.1h1.7v1.7h-1.7zM1191.2 364.1h1.7v1.7h-1.7zM1191.1 365.1h1.7v1.7h-1.7zM1190.9 366.1h1.7v1.7h-1.7zM1190.7 367.0h1.7v1.7h-1.7zM1190.3 367.9h1.7v1.7h-1.7zM1190.0 368.8h1.7v1.7h-1.7zM1189.5 369.7h1.7v1.7h-1.7zM1189.0 370.5h1.7v1.7h-1.7zM1188.4 371.3h1.7v1.7h-1.7zM1187.8 372.1h1.7v1.7h-1.7zM1187.1 372.8h1.7v1.7h-1.7zM1186.3 373.4h1.7v1.7h-1.7zM1185.5 374.0h1.7v1.7h-1.7zM1184.7 374.5h1.7v1.7h-1.7zM1183.8 375.0h1.7v1.7h-1.7zM1182.9 375.3h1.7v1.7h-1.7zM1182.0 375.7h1.7v1.7h-1.7zM1181.1 375.9h1.7v1.7h-1.7zM1180.1 376.1h1.7v1.7h-1.7zM1179.1 376.2h1.7v1.7h-1.7zM1178.2 376.2h1.7v1.7h-1.7zM1177.2 376.2h1.7v1.7h-1.7zM1176.2 376.1h1.7v1.7h-1.7zM1175.2 375.9h1.7v1.7h-1.7zM1174.3 375.7h1.7v1.7h-1.7zM1173.4 375.3h1.7v1.7h-1.7zM1172.5 375.0h1.7v1.7h-1.7zM1171.6 374.5h1.7v1.7h-1.7zM1170.8 374.0h1.7v1.7h-1.7zM1170.0 373.4h1.7v1.7h-1.7zM1169.2 372.8h1.7v1.7h-1.7zM1168.5 372.1h1.7v1.7h-1.7zM1167.9 371.3h1.7v1.7h-1.7zM1167.3 370.5h1.7v1.7h-1.7zM1166.8 369.7h1.7v1.7h-1.7zM1166.3 368.8h1.7v1.7h-1.7zM1166.0 367.9h1.7v1.7h-1.7zM1165.6 367.0h1.7v1.7h-1.7zM1165.4 366.1h1.7v1.7h-1.7zM1165.2 365.1h1.7v1.7h-1.7zM1165.1 364.1h1.7v1.7h-1.7zM1165.1 363.1h1.7v1.7h-1.7zM1165.1 362.2h1.7v1.7h-1.7zM1165.2 361.2h1.7v1.7h-1.7zM1165.4 360.2h1.7v1.7h-1.7zM1165.6 359.3h1.7v1.7h-1.7zM1166.0 358.4h1.7v1.7h-1.7zM1166.3 357.5h1.7v1.7h-1.7zM1166.8 356.6h1.7v1.7h-1.7zM1167.3 355.8h1.7v1.7h-1.7zM1167.9 355.0h1.7v1.7h-1.7zM1168.5 354.2h1.7v1.7h-1.7zM1169.2 353.5h1.7v1.7h-1.7zM1170.0 352.9h1.7v1.7h-1.7zM1170.8 352.3h1.7v1.7h-1.7zM1171.6 351.8h1.7v1.7h-1.7zM1172.5 351.3h1.7v1.7h-1.7zM1173.4 351.0h1.7v1.7h-1.7zM1174.3 350.6h1.7v1.7h-1.7zM1175.2 350.4h1.7v1.7h-1.7zM1176.2 350.2h1.7v1.7h-1.7zM1177.2 350.1h1.7v1.7h-1.7zM1178.2 350.0h1.7v1.7h-1.7zM1179.1 350.1h1.7v1.7h-1.7zM1180.1 350.2h1.7v1.7h-1.7zM1181.1 350.4h1.7v1.7h-1.7zM1182.0 350.6h1.7v1.7h-1.7zM1182.9 351.0h1.7v1.7h-1.7zM1183.8 351.3h1.7v1.7h-1.7zM1184.7 351.8h1.7v1.7h-1.7zM1185.5 352.3h1.7v1.7h-1.7zM1186.3 352.9h1.7v1.7h-1.7zM1187.1 353.5h1.7v1.7h-1.7zM1187.8 354.2h1.7v1.7h-1.7zM1188.4 355.0h1.7v1.7h-1.7zM1189.0 355.8h1.7v1.7h-1.7zM1189.5 356.6h1.7v1.7h-1.7zM1190.0 357.5h1.7v1.7h-1.7zM1190.3 358.4h1.7v1.7h-1.7zM1190.7 359.3h1.7v1.7h-1.7zM1190.9 360.2h1.7v1.7h-1.7zM1191.1 361.2h1.7v1.7h-1.7zM1191.2 362.2h1.7v1.7h-1.7zM1192.4 363.1h1.7v1.7h-1.7zM1192.3 364.2h1.7v1.7h-1.7zM1192.2 365.3h1.7v1.7h-1.7zM1192.0 366.3h1.7v1.7h-1.7zM1191.7 367.3h1.7v1.7h-1.7zM1191.4 368.3h1.7v1.7h-1.7zM1190.9 369.3h1.7v1.7h-1.7zM1190.4 370.2h1.7v1.7h-1.7zM1189.9 371.1h1.7v1.7h-1.7zM1189.3 372.0h1.7v1.7h-1.7zM1188.6 372.8h1.7v1.7h-1.7zM1187.8 373.6h1.7v1.7h-1.7zM1187.0 374.3h1.7v1.7h-1.7zM1186.1 374.9h1.7v1.7h-1.7zM1185.2 375.4h1.7v1.7h-1.7zM1184.3 375.9h1.7v1.7h-1.7zM1183.3 376.4h1.7v1.7h-1.7zM1182.3 376.7h1.7v1.7h-1.7zM1181.3 377.0h1.7v1.7h-1.7zM1180.3 377.2h1.7v1.7h-1.7zM1179.2 377.3h1.7v1.7h-1.7zM1178.2 377.3h1.7v1.7h-1.7zM1177.1 377.3h1.7v1.7h-1.7zM1176.0 377.2h1.7v1.7h-1.7zM1175.0 377.0h1.7v1.7h-1.7zM1174.0 376.7h1.7v1.7h-1.7zM1173.0 376.4h1.7v1.7h-1.7zM1172.0 375.9h1.7v1.7h-1.7zM1171.1 375.4h1.7v1.7h-1.7zM1170.2 374.9h1.7v1.7h-1.7zM1169.3 374.3h1.7v1.7h-1.7zM1168.5 373.6h1.7v1.7h-1.7zM1167.7 372.8h1.7v1.7h-1.7zM1167.0 372.0h1.7v1.7h-1.7zM1166.4 371.1h1.7v1.7h-1.7zM1165.9 370.2h1.7v1.7h-1.7zM1165.4 369.3h1.7v1.7h-1.7zM1164.9 368.3h1.7v1.7h-1.7zM1164.6 367.3h1.7v1.7h-1.7zM1164.3 366.3h1.7v1.7h-1.7zM1164.1 365.3h1.7v1.7h-1.7zM1164.0 364.2h1.7v1.7h-1.7zM1164.0 363.1h1.7v1.7h-1.7zM1164.0 362.1h1.7v1.7h-1.7zM1164.1 361.0h1.7v1.7h-1.7zM1164.3 360.0h1.7v1.7h-1.7zM1164.6 359.0h1.7v1.7h-1.7zM1164.9 358.0h1.7v1.7h-1.7zM1165.4 357.0h1.7v1.7h-1.7zM1165.9 356.0h1.7v1.7h-1.7zM1166.4 355.2h1.7v1.7h-1.7zM1167.0 354.3h1.7v1.7h-1.7zM1167.7 353.5h1.7v1.7h-1.7zM1168.5 352.7h1.7v1.7h-1.7zM1169.3 352.0h1.7v1.7h-1.7zM1170.2 351.4h1.7v1.7h-1.7zM1171.1 350.9h1.7v1.7h-1.7zM1172.0 350.4h1.7v1.7h-1.7zM1173.0 349.9h1.7v1.7h-1.7zM1174.0 349.6h1.7v1.7h-1.7zM1175.0 349.3h1.7v1.7h-1.7zM1176.0 349.1h1.7v1.7h-1.7zM1177.1 349.0h1.7v1.7h-1.7zM1178.2 348.9h1.7v1.7h-1.7zM1179.2 349.0h1.7v1.7h-1.7zM1180.3 349.1h1.7v1.7h-1.7zM1181.3 349.3h1.7v1.7h-1.7zM1182.3 349.6h1.7v1.7h-1.7zM1183.3 349.9h1.7v1.7h-1.7zM1184.3 350.4h1.7v1.7h-1.7zM1185.2 350.9h1.7v1.7h-1.7zM1186.1 351.4h1.7v1.7h-1.7zM1187.0 352.0h1.7v1.7h-1.7zM1187.8 352.7h1.7v1.7h-1.7zM1188.6 353.5h1.7v1.7h-1.7zM1189.3 354.3h1.7v1.7h-1.7zM1189.9 355.2h1.7v1.7h-1.7zM1190.4 356.0h1.7v1.7h-1.7zM1190.9 357.0h1.7v1.7h-1.7zM1191.4 358.0h1.7v1.7h-1.7zM1191.7 359.0h1.7v1.7h-1.7zM1192.0 360.0h1.7v1.7h-1.7zM1192.2 361.0h1.7v1.7h-1.7zM1192.3 362.1h1.7v1.7h-1.7zM1193.2 363.1h1.7v1.7h-1.7zM1193.1 364.3h1.7v1.7h-1.7zM1193.0 365.4h1.7v1.7h-1.7zM1192.8 366.5h1.7v1.7h-1.7zM1192.5 367.6h1.7v1.7h-1.7zM1192.1 368.6h1.7v1.7h-1.7zM1191.7 369.7h1.7v1.7h-1.7zM1191.1 370.6h1.7v1.7h-1.7zM1190.5 371.6h1.7v1.7h-1.7zM1189.9 372.5h1.7v1.7h-1.7zM1189.1 373.4h1.7v1.7h-1.7zM1188.4 374.1h1.7v1.7h-1.7zM1187.5 374.9h1.7v1.7h-1.7zM1186.6 375.5h1.7v1.7h-1.7zM1185.7 376.1h1.7v1.7h-1.7zM1184.7 376.7h1.7v1.7h-1.7zM1183.6 377.1h1.7v1.7h-1.7zM1182.6 377.5h1.7v1.7h-1.7zM1181.5 377.8h1.7v1.7h-1.7zM1180.4 378.0h1.7v1.7h-1.7zM1179.3 378.1h1.7v1.7h-1.7zM1178.2 378.1h1.7v1.7h-1.7zM1177.0 378.1h1.7v1.7h-1.7zM1175.9 378.0h1.7v1.7h-1.7zM1174.8 377.8h1.7v1.7h-1.7zM1173.7 377.5h1.7v1.7h-1.7zM1172.7 377.1h1.7v1.7h-1.7zM1171.6 376.7h1.7v1.7h-1.7zM1170.7 376.1h1.7v1.7h-1.7zM1169.7 375.5h1.7v1.7h-1.7zM1168.8 374.9h1.7v1.7h-1.7zM1167.9 374.1h1.7v1.7h-1.7zM1167.2 373.4h1.7v1.7h-1.7zM1166.4 372.5h1.7v1.7h-1.7zM1165.8 371.6h1.7v1.7h-1.7zM1165.2 370.6h1.7v1.7h-1.7zM1164.6 369.7h1.7v1.7h-1.7zM1164.2 368.6h1.7v1.7h-1.7zM1163.8 367.6h1.7v1.7h-1.7zM1163.5 366.5h1.7v1.7h-1.7zM1163.3 365.4h1.7v1.7h-1.7zM1163.2 364.3h1.7v1.7h-1.7zM1163.2 363.1h1.7v1.7h-1.7zM1163.2 362.0h1.7v1.7h-1.7zM1163.3 360.9h1.7v1.7h-1.7zM1163.5 359.8h1.7v1.7h-1.7zM1163.8 358.7h1.7v1.7h-1.7zM1164.2 357.7h1.7v1.7h-1.7zM1164.6 356.6h1.7v1.7h-1.7zM1165.2 355.6h1.7v1.7h-1.7zM1165.8 354.7h1.7v1.7h-1.7zM1166.4 353.8h1.7v1.7h-1.7zM1167.2 352.9h1.7v1.7h-1.7zM1167.9 352.2h1.7v1.7h-1.7zM1168.8 351.4h1.7v1.7h-1.7zM1169.7 350.8h1.7v1.7h-1.7zM1170.7 350.2h1.7v1.7h-1.7zM1171.6 349.6h1.7v1.7h-1.7zM1172.7 349.2h1.7v1.7h-1.7zM1173.7 348.8h1.7v1.7h-1.7zM1174.8 348.5h1.7v1.7h-1.7zM1175.9 348.3h1.7v1.7h-1.7zM1177.0 348.2h1.7v1.7h-1.7zM1178.2 348.1h1.7v1.7h-1.7zM1179.3 348.2h1.7v1.7h-1.7zM1180.4 348.3h1.7v1.7h-1.7zM1181.5 348.5h1.7v1.7h-1.7zM1182.6 348.8h1.7v1.7h-1.7zM1183.6 349.2h1.7v1.7h-1.7zM1184.7 349.6h1.7v1.7h-1.7zM1185.7 350.2h1.7v1.7h-1.7zM1186.6 350.8h1.7v1.7h-1.7zM1187.5 351.4h1.7v1.7h-1.7zM1188.4 352.2h1.7v1.7h-1.7zM1189.1 352.9h1.7v1.7h-1.7zM1189.9 353.8h1.7v1.7h-1.7zM1190.5 354.7h1.7v1.7h-1.7zM1191.1 355.6h1.7v1.7h-1.7zM1191.7 356.6h1.7v1.7h-1.7zM1192.1 357.7h1.7v1.7h-1.7zM1192.5 358.7h1.7v1.7h-1.7zM1192.8 359.8h1.7v1.7h-1.7zM1193.0 360.9h1.7v1.7h-1.7zM1193.1 362.0h1.7v1.7h-1.7z"/>
<path fill="#78f078" d="M1188.2 363.2h1.5v1.5h-1.5zM1188.1 364.3h1.5v1.5h-1.5zM1187.9 365.3h1.5v1.5h-1.5zM1187.7 366.3h1.5v1.5h-1.5zM1187.3 367.3h1.5v1.5h-1.5zM1186.8 368.2h1.5v1.5h-1.5zM1186.3 369.1h1.5v1.5h-1.5zM1185.6 369.9h1.5v1.5h-1.5zM1184.9 370.6h1.5v1.5h-1.5zM1184.1 371.3h1.5v1.5h-1.5zM1183.2 371.8h1.5v1.5h-1.5zM1182.3 372.3h1.5v1.5h-1.5zM1181.3 372.7h1.5v1.5h-1.5zM1180.3 372.9h1.5v1.5h-1.5zM1179.3 373.1h1.5v1.5h-1.5zM1178.2 373.1h1.5v1.5h-1.5zM1177.2 373.1h1.5v1.5h-1.5zM1176.2 372.9h1.5v1.5h-1.5zM1175.2 372.7h1.5v1.5h-1.5zM1174.2 372.3h1.5v1.5h-1.5zM1173.3 371.8h1.5v1.5h-1.5zM1172.4 371.3h1.5v1.5h-1.5zM1171.6 370.6h1.5v1.5h-1.5zM1170.9 369.9h1.5v1.5h-1.5zM1170.2 369.1h1.5v1.5h-1.5zM1169.7 368.2h1.5v1.5h-1.5zM1169.2 367.3h1.5v1.5h-1.5zM1168.8 366.3h1.5v1.5h-1.5zM1168.6 365.3h1.5v1.5h-1.5zM1168.4 364.3h1.5v1.5h-1.5zM1168.3 363.2h1.5v1.5h-1.5zM1168.4 362.2h1.5v1.5h-1.5zM1168.6 361.2h1.5v1.5h-1.5zM1168.8 360.2h1.5v1.5h-1.5zM1169.2 359.2h1.5v1.5h-1.5zM1169.7 358.3h1.5v1.5h-1.5zM1170.2 357.4h1.5v1.5h-1.5zM1170.9 356.6h1.5v1.5h-1.5zM1171.6 355.9h1.5v1.5h-1.5zM1172.4 355.2h1.5v1.5h-1.5zM1173.3 354.7h1.5v1.5h-1.5zM1174.2 354.2h1.5v1.5h-1.5zM1175.2 353.8h1.5v1.5h-1.5zM1176.2 353.6h1.5v1.5h-1.5zM1177.2 353.4h1.5v1.5h-1.5zM1178.2 353.4h1.5v1.5h-1.5zM1179.3 353.4h1.5v1.5h-1.5zM1180.3 353.6h1.5v1.5h-1.5zM1181.3 353.8h1.5v1.5h-1.5zM1182.3 354.2h1.5v1.5h-1.5zM1183.2 354.7h1.5v1.5h-1.5zM1184.1 355.2h1.5v1.5h-1.5zM1184.9 355.9h1.5v1.5h-1.5zM1185.6 356.6h1.5v1.5h-1.5zM1186.3 357.4h1.5v1.5h-1.5zM1186.8 358.3h1.5v1.5h-1.5zM1187.3 359.2h1.5v1.5h-1.5zM1187.7 360.2h1.5v1.5h-1.5zM1187.9 361.2h1.5v1.5h-1.5zM1188.1 362.2h1.5v1.5h-1.5z"/>
<path fill="#e8140e" d="M1186.5 363.2h1.5v1.5h-1.5zM1186.5 364.2h1.5v1.5h-1.5zM1186.3 365.1h1.5v1.5h-1.5zM1186.1 366.0h1.5v1.5h-1.5zM1185.7 366.9h1.5v1.5h-1.5zM1185.3 367.7h1.5v1.5h-1.5zM1184.7 368.4h1.5v1.5h-1.5zM1184.1 369.1h1.5v1.5h-1.5zM1183.4 369.7h1.5v1.5h-1.5zM1182.7 370.3h1.5v1.5h-1.5zM1181.9 370.7h1.5v1.5h-1.5zM1181.0 371.1h1.5v1.5h-1.5zM1180.1 371.3h1.5v1.5h-1.5zM1179.2 371.5h1.5v1.5h-1.5zM1178.2 371.6h1.5v1.5h-1.5zM1177.3 371.5h1.5v1.5h-1.5zM1176.4 371.3h1.5v1.5h-1.5zM1175.5 371.1h1.5v1.5h-1.5zM1174.6 370.7h1.5v1.5h-1.5zM1173.8 370.3h1.5v1.5h-1.5zM1173.1 369.7h1.5v1.5h-1.5zM1172.4 369.1h1.5v1.5h-1.5zM1171.8 368.4h1.5v1.5h-1.5zM1171.2 367.7h1.5v1.5h-1.5zM1170.8 366.9h1.5v1.5h-1.5zM1170.4 366.0h1.5v1.5h-1.5zM1170.2 365.1h1.5v1.5h-1.5zM1170.0 364.2h1.5v1.5h-1.5zM1170.0 363.2h1.5v1.5h-1.5zM1170.0 362.3h1.5v1.5h-1.5zM1170.2 361.4h1.5v1.5h-1.5zM1170.4 360.5h1.5v1.5h-1.5zM1170.8 359.6h1.5v1.5h-1.5zM1171.2 358.8h1.5v1.5h-1.5zM1171.8 358.1h1.5v1.5h-1.5zM1172.4 357.4h1.5v1.5h-1.5zM1173.1 356.8h1.5v1.5h-1.5zM1173.8 356.2h1.5v1.5h-1.5zM1174.6 355.8h1.5v1.5h-1.5zM1175.5 355.4h1.5v1.5h-1.5zM1176.4 355.2h1.5v1.5h-1.5zM1177.3 355.0h1.5v1.5h-1.5zM1178.2 354.9h1.5v1.5h-1.5zM1179.2 355.0h1.5v1.5h-1.5zM1180.1 355.2h1.5v1.5h-1.5zM1181.0 355.4h1.5v1.5h-1.5zM1181.9 355.8h1.5v1.5h-1.5zM1182.7 356.2h1.5v1.5h-1.5zM1183.4 356.8h1.5v1.5h-1.5zM1184.1 357.4h1.5v1.5h-1.5zM1184.7 358.1h1.5v1.5h-1.5zM1185.3 358.8h1.5v1.5h-1.5zM1185.7 359.6h1.5v1.5h-1.5zM1186.1 360.5h1.5v1.5h-1.5zM1186.3 361.4h1.5v1.5h-1.5zM1186.5 362.3h1.5v1.5h-1.5zM1185.8 363.2h1.5v1.5h-1.5zM1185.8 364.2h1.5v1.5h-1.5zM1185.6 365.1h1.5v1.5h-1.5zM1185.3 366.0h1.5v1.5h-1.5zM1184.9 366.9h1.5v1.5h-1.5zM1184.4 367.7h1.5v1.5h-1.5zM1183.8 368.5h1.5v1.5h-1.5zM1183.1 369.1h1.5v1.5h-1.5zM1182.3 369.7h1.5v1.5h-1.5zM1181.5 370.1h1.5v1.5h-1.5zM1180.6 370.5h1.5v1.5h-1.5zM1179.7 370.7h1.5v1.5h-1.5zM1178.7 370.8h1.5v1.5h-1.5zM1177.8 370.8h1.5v1.5h-1.5zM1176.8 370.7h1.5v1.5h-1.5zM1175.9 370.5h1.5v1.5h-1.5zM1175.0 370.1h1.5v1.5h-1.5zM1174.2 369.7h1.5v1.5h-1.5zM1173.4 369.1h1.5v1.5h-1.5zM1172.7 368.5h1.5v1.5h-1.5zM1172.1 367.7h1.5v1.5h-1.5zM1171.6 366.9h1.5v1.5h-1.5zM1171.2 366.0h1.5v1.5h-1.5zM1170.9 365.1h1.5v1.5h-1.5zM1170.7 364.2h1.5v1.5h-1.5zM1170.7 363.2h1.5v1.5h-1.5zM1170.7 362.3h1.5v1.5h-1.5zM1170.9 361.4h1.5v1.5h-1.5zM1171.2 360.5h1.5v1.5h-1.5zM1171.6 359.6h1.5v1.5h-1.5zM1172.1 358.8h1.5v1.5h-1.5zM1172.7 358.0h1.5v1.5h-1.5zM1173.4 357.4h1.5v1.5h-1.5zM1174.2 356.8h1.5v1.5h-1.5zM1175.0 356.4h1.5v1.5h-1.5zM1175.9 356.0h1.5v1.5h-1.5zM1176.8 355.8h1.5v1.5h-1.5zM1177.8 355.7h1.5v1.5h-1.5zM1178.7 355.7h1.5v1.5h-1.5zM1179.7 355.8h1.5v1.5h-1.5zM1180.6 356.0h1.5v1.5h-1.5zM1181.5 356.4h1.5v1.5h-1.5zM1182.3 356.8h1.5v1.5h-1.5zM1183.1 357.4h1.5v1.5h-1.5zM1183.8 358.0h1.5v1.5h-1.5zM1184.4 358.8h1.5v1.5h-1.5zM1184.9 359.6h1.5v1.5h-1.5zM1185.3 360.5h1.5v1.5h-1.5zM1185.6 361.4h1.5v1.5h-1.5zM1185.8 362.3h1.5v1.5h-1.5z"/>
<path fill="#78f078" d="M1184.2 363.2h1.6v1.6h-1.6zM1184.1 364.1h1.6v1.6h-1.6zM1183.9 365.1h1.6v1.6h-1.6zM1183.5 365.9h1.6v1.6h-1.6zM1183.1 366.7h1.6v1.6h-1.6zM1182.4 367.4h1.6v1.6h-1.6zM1181.7 368.1h1.6v1.6h-1.6zM1180.9 368.5h1.6v1.6h-1.6zM1180.1 368.9h1.6v1.6h-1.6zM1179.1 369.1h1.6v1.6h-1.6zM1178.2 369.2h1.6v1.6h-1.6zM1177.3 369.1h1.6v1.6h-1.6zM1176.3 368.9h1.6v1.6h-1.6zM1175.5 368.5h1.6v1.6h-1.6zM1174.7 368.1h1.6v1.6h-1.6zM1174.0 367.4h1.6v1.6h-1.6zM1173.3 366.7h1.6v1.6h-1.6zM1172.9 365.9h1.6v1.6h-1.6zM1172.5 365.1h1.6v1.6h-1.6zM1172.3 364.1h1.6v1.6h-1.6zM1172.2 363.2h1.6v1.6h-1.6zM1172.3 362.3h1.6v1.6h-1.6zM1172.5 361.3h1.6v1.6h-1.6zM1172.9 360.5h1.6v1.6h-1.6zM1173.3 359.7h1.6v1.6h-1.6zM1174.0 359.0h1.6v1.6h-1.6zM1174.7 358.3h1.6v1.6h-1.6zM1175.5 357.9h1.6v1.6h-1.6zM1176.3 357.5h1.6v1.6h-1.6zM1177.3 357.3h1.6v1.6h-1.6zM1178.2 357.2h1.6v1.6h-1.6zM1179.1 357.3h1.6v1.6h-1.6zM1180.1 357.5h1.6v1.6h-1.6zM1180.9 357.9h1.6v1.6h-1.6zM1181.7 358.3h1.6v1.6h-1.6zM1182.4 359.0h1.6v1.6h-1.6zM1183.1 359.7h1.6v1.6h-1.6zM1183.5 360.5h1.6v1.6h-1.6zM1183.9 361.3h1.6v1.6h-1.6zM1184.1 362.3h1.6v1.6h-1.6z"/>
<path fill="#2a36f2" d="M1182.5 363.2h1.6v1.6h-1.6zM1182.4 364.0h1.6v1.6h-1.6zM1182.2 364.8h1.6v1.6h-1.6zM1181.9 365.5h1.6v1.6h-1.6zM1181.4 366.1h1.6v1.6h-1.6zM1180.8 366.6h1.6v1.6h-1.6zM1180.1 367.0h1.6v1.6h-1.6zM1179.4 367.3h1.6v1.6h-1.6zM1178.6 367.5h1.6v1.6h-1.6zM1177.8 367.5h1.6v1.6h-1.6zM1177.0 367.3h1.6v1.6h-1.6zM1176.3 367.0h1.6v1.6h-1.6zM1175.6 366.6h1.6v1.6h-1.6zM1175.0 366.1h1.6v1.6h-1.6zM1174.5 365.5h1.6v1.6h-1.6zM1174.2 364.8h1.6v1.6h-1.6zM1174.0 364.0h1.6v1.6h-1.6zM1173.9 363.2h1.6v1.6h-1.6zM1174.0 362.4h1.6v1.6h-1.6zM1174.2 361.6h1.6v1.6h-1.6zM1174.5 360.9h1.6v1.6h-1.6zM1175.0 360.3h1.6v1.6h-1.6zM1175.6 359.8h1.6v1.6h-1.6zM1176.3 359.4h1.6v1.6h-1.6zM1177.0 359.1h1.6v1.6h-1.6zM1177.8 358.9h1.6v1.6h-1.6zM1178.6 358.9h1.6v1.6h-1.6zM1179.4 359.1h1.6v1.6h-1.6zM1180.1 359.4h1.6v1.6h-1.6zM1180.8 359.8h1.6v1.6h-1.6zM1181.4 360.3h1.6v1.6h-1.6zM1181.9 360.9h1.6v1.6h-1.6zM1182.2 361.6h1.6v1.6h-1.6zM1182.4 362.4h1.6v1.6h-1.6zM1181.8 363.2h1.6v1.6h-1.6zM1181.7 363.9h1.6v1.6h-1.6zM1181.5 364.7h1.6v1.6h-1.6zM1181.1 365.3h1.6v1.6h-1.6zM1180.6 365.9h1.6v1.6h-1.6zM1180.0 366.3h1.6v1.6h-1.6zM1179.3 366.6h1.6v1.6h-1.6zM1178.6 366.8h1.6v1.6h-1.6zM1177.8 366.8h1.6v1.6h-1.6zM1177.1 366.6h1.6v1.6h-1.6zM1176.4 366.3h1.6v1.6h-1.6zM1175.8 365.9h1.6v1.6h-1.6zM1175.3 365.3h1.6v1.6h-1.6zM1174.9 364.7h1.6v1.6h-1.6zM1174.7 363.9h1.6v1.6h-1.6zM1174.6 363.2h1.6v1.6h-1.6zM1174.7 362.5h1.6v1.6h-1.6zM1174.9 361.7h1.6v1.6h-1.6zM1175.3 361.1h1.6v1.6h-1.6zM1175.8 360.5h1.6v1.6h-1.6zM1176.4 360.1h1.6v1.6h-1.6zM1177.1 359.8h1.6v1.6h-1.6zM1177.8 359.6h1.6v1.6h-1.6zM1178.6 359.6h1.6v1.6h-1.6zM1179.3 359.8h1.6v1.6h-1.6zM1180.0 360.1h1.6v1.6h-1.6zM1180.6 360.5h1.6v1.6h-1.6zM1181.1 361.1h1.6v1.6h-1.6zM1181.5 361.7h1.6v1.6h-1.6zM1181.7 362.5h1.6v1.6h-1.6z"/>
<path fill="#78f078" d="M1180.3 363.1h1.8v1.8h-1.8zM1180.1 364.1h1.8v1.8h-1.8zM1179.5 364.8h1.8v1.8h-1.8zM1178.6 365.2h1.8v1.8h-1.8zM1177.6 365.2h1.8v1.8h-1.8zM1176.7 364.8h1.8v1.8h-1.8zM1176.1 364.1h1.8v1.8h-1.8zM1175.9 363.1h1.8v1.8h-1.8zM1176.1 362.1h1.8v1.8h-1.8zM1176.7 361.4h1.8v1.8h-1.8zM1177.6 361.0h1.8v1.8h-1.8zM1178.6 361.0h1.8v1.8h-1.8zM1179.5 361.4h1.8v1.8h-1.8zM1180.1 362.1h1.8v1.8h-1.8zM1179.1 363.1h1.8v1.8h-1.8zM1178.8 363.8h1.8v1.8h-1.8zM1178.1 364.1h1.8v1.8h-1.8zM1177.4 363.8h1.8v1.8h-1.8zM1177.1 363.1h1.8v1.8h-1.8zM1177.4 362.4h1.8v1.8h-1.8zM1178.1 362.1h1.8v1.8h-1.8zM1178.8 362.4h1.8v1.8h-1.8z"/>
<path fill="#78f078" d="M1489.2 313.8h1.7v1.7h-1.7zM1489.3 313.5h1.7v1.7h-1.7zM1489.1 313.4h1.7v1.7h-1.7zM1489.0 313.7h1.7v1.7h-1.7zM1489.3 313.7h1.7v1.7h-1.7zM1489.2 313.4h1.7v1.7h-1.7zM1489.0 313.5h1.7v1.7h-1.7zM1489.2 315.8h1.7v1.7h-1.7zM1489.7 315.5h1.7v1.7h-1.7zM1489.8 314.7h1.7v1.7h-1.7zM1489.4 314.1h1.7v1.7h-1.7zM1488.9 314.1h1.7v1.7h-1.7zM1488.5 314.7h1.7v1.7h-1.7zM1488.6 315.5h1.7v1.7h-1.7zM1489.2 315.8h1.7v1.7h-1.7zM1489.7 315.5h1.7v1.7h-1.7zM1489.8 314.7h1.7v1.7h-1.7zM1489.4 314.1h1.7v1.7h-1.7zM1488.9 314.1h1.7v1.7h-1.7zM1488.5 314.7h1.7v1.7h-1.7zM1488.6 315.5h1.7v1.7h-1.7zM1489.2 319.1h1.7v1.7h-1.7zM1490.0 318.8h1.7v1.7h-1.7zM1490.5 317.9h1.7v1.7h-1.7zM1490.6 316.7h1.7v1.7h-1.7zM1490.1 315.7h1.7v1.7h-1.7zM1489.4 315.2h1.7v1.7h-1.7zM1488.5 315.3h1.7v1.7h-1.7zM1487.9 316.1h1.7v1.7h-1.7zM1487.7 317.3h1.7v1.7h-1.7zM1488.0 318.4h1.7v1.7h-1.7zM1488.7 319.1h1.7v1.7h-1.7zM1489.6 319.1h1.7v1.7h-1.7zM1490.3 318.4h1.7v1.7h-1.7zM1490.6 317.3h1.7v1.7h-1.7zM1490.4 316.1h1.7v1.7h-1.7zM1489.8 315.3h1.7v1.7h-1.7zM1488.9 315.2h1.7v1.7h-1.7zM1488.2 315.7h1.7v1.7h-1.7zM1487.7 316.7h1.7v1.7h-1.7zM1487.8 317.9h1.7v1.7h-1.7zM1488.3 318.8h1.7v1.7h-1.7zM1489.2 323.8h1.7v1.7h-1.7zM1490.3 323.5h1.7v1.7h-1.7zM1491.2 322.5h1.7v1.7h-1.7zM1491.6 321.1h1.7v1.7h-1.7zM1491.6 319.5h1.7v1.7h-1.7zM1491.2 318.0h1.7v1.7h-1.7zM1490.3 317.1h1.7v1.7h-1.7zM1489.2 316.7h1.7v1.7h-1.7zM1488.0 317.1h1.7v1.7h-1.7zM1487.1 318.0h1.7v1.7h-1.7zM1486.7 319.5h1.7v1.7h-1.7zM1486.7 321.1h1.7v1.7h-1.7zM1487.1 322.5h1.7v1.7h-1.7zM1488.0 323.5h1.7v1.7h-1.7zM1489.2 323.8h1.7v1.7h-1.7zM1490.3 323.5h1.7v1.7h-1.7zM1491.2 322.5h1.7v1.7h-1.7zM1491.6 321.1h1.7v1.7h-1.7zM1491.6 319.5h1.7v1.7h-1.7zM1491.2 318.0h1.7v1.7h-1.7zM1490.3 317.1h1.7v1.7h-1.7zM1489.2 316.7h1.7v1.7h-1.7zM1488.0 317.1h1.7v1.7h-1.7zM1487.1 318.0h1.7v1.7h-1.7zM1486.7 319.5h1.7v1.7h-1.7zM1486.7 321.1h1.7v1.7h-1.7zM1487.1 322.5h1.7v1.7h-1.7zM1488.0 323.5h1.7v1.7h-1.7zM1489.2 329.8h1.7v1.7h-1.7zM1490.6 329.5h1.7v1.7h-1.7zM1491.8 328.4h1.7v1.7h-1.7zM1492.7 326.9h1.7v1.7h-1.7zM1493.1 325.0h1.7v1.7h-1.7zM1493.0 323.0h1.7v1.7h-1.7zM1492.5 321.2h1.7v1.7h-1.7zM1491.5 319.8h1.7v1.7h-1.7zM1490.2 318.9h1.7v1.7h-1.7zM1488.8 318.7h1.7v1.7h-1.7zM1487.4 319.3h1.7v1.7h-1.7zM1486.3 320.4h1.7v1.7h-1.7zM1485.5 322.1h1.7v1.7h-1.7zM1485.2 324.0h1.7v1.7h-1.7zM1485.3 326.0h1.7v1.7h-1.7zM1486.0 327.7h1.7v1.7h-1.7zM1487.1 329.0h1.7v1.7h-1.7zM1488.4 329.7h1.7v1.7h-1.7zM1489.9 329.7h1.7v1.7h-1.7zM1491.2 329.0h1.7v1.7h-1.7zM1492.3 327.7h1.7v1.7h-1.7zM1493.0 326.0h1.7v1.7h-1.7zM1493.1 324.0h1.7v1.7h-1.7zM1492.8 322.1h1.7v1.7h-1.7zM1492.0 320.4h1.7v1.7h-1.7zM1490.9 319.3h1.7v1.7h-1.7zM1489.5 318.7h1.7v1.7h-1.7zM1488.1 318.9h1.7v1.7h-1.7zM1486.8 319.8h1.7v1.7h-1.7zM1485.8 321.2h1.7v1.7h-1.7zM1485.3 323.0h1.7v1.7h-1.7zM1485.2 325.0h1.7v1.7h-1.7zM1485.6 326.9h1.7v1.7h-1.7zM1486.5 328.4h1.7v1.7h-1.7zM1487.7 329.5h1.7v1.7h-1.7zM1489.2 337.1h1.7v1.7h-1.7zM1490.8 336.8h1.7v1.7h-1.7zM1492.4 335.8h1.7v1.7h-1.7zM1493.7 334.1h1.7v1.7h-1.7zM1494.5 332.1h1.7v1.7h-1.7zM1494.9 329.7h1.7v1.7h-1.7zM1494.8 327.4h1.7v1.7h-1.7zM1494.1 325.1h1.7v1.7h-1.7zM1493.1 323.3h1.7v1.7h-1.7zM1491.6 321.9h1.7v1.7h-1.7zM1490.0 321.2h1.7v1.7h-1.7zM1488.3 321.2h1.7v1.7h-1.7zM1486.7 321.9h1.7v1.7h-1.7zM1485.2 323.3h1.7v1.7h-1.7zM1484.2 325.1h1.7v1.7h-1.7zM1483.5 327.4h1.7v1.7h-1.7zM1483.4 329.7h1.7v1.7h-1.7zM1483.8 332.1h1.7v1.7h-1.7zM1484.6 334.1h1.7v1.7h-1.7zM1485.9 335.8h1.7v1.7h-1.7zM1487.5 336.8h1.7v1.7h-1.7zM1489.2 337.1h1.7v1.7h-1.7zM1490.8 336.8h1.7v1.7h-1.7zM1492.4 335.8h1.7v1.7h-1.7zM1493.7 334.1h1.7v1.7h-1.7zM1494.5 332.1h1.7v1.7h-1.7zM1494.9 329.7h1.7v1.7h-1.7zM1494.8 327.4h1.7v1.7h-1.7zM1494.1 325.1h1.7v1.7h-1.7zM1493.1 323.3h1.7v1.7h-1.7zM1491.6 321.9h1.7v1.7h-1.7zM1490.0 321.2h1.7v1.7h-1.7zM1488.3 321.2h1.7v1.7h-1.7zM1486.7 321.9h1.7v1.7h-1.7zM1485.2 323.3h1.7v1.7h-1.7zM1484.2 325.1h1.7v1.7h-1.7zM1483.5 327.4h1.7v1.7h-1.7zM1483.4 329.7h1.7v1.7h-1.7zM1483.8 332.1h1.7v1.7h-1.7zM1484.6 334.1h1.7v1.7h-1.7zM1485.9 335.8h1.7v1.7h-1.7zM1487.5 336.8h1.7v1.7h-1.7zM1489.2 345.8h1.7v1.7h-1.7zM1491.1 345.5h1.7v1.7h-1.7zM1493.0 344.4h1.7v1.7h-1.7zM1494.6 342.7h1.7v1.7h-1.7zM1495.9 340.6h1.7v1.7h-1.7zM1496.7 338.0h1.7v1.7h-1.7zM1497.0 335.3h1.7v1.7h-1.7zM1496.8 332.5h1.7v1.7h-1.7zM1496.1 329.9h1.7v1.7h-1.7zM1495.0 327.6h1.7v1.7h-1.7zM1493.4 325.8h1.7v1.7h-1.7zM1491.6 324.6h1.7v1.7h-1.7zM1489.7 324.1h1.7v1.7h-1.7zM1487.7 324.2h1.7v1.7h-1.7zM1485.7 325.1h1.7v1.7h-1.7zM1484.1 326.6h1.7v1.7h-1.7zM1482.7 328.7h1.7v1.7h-1.7zM1481.8 331.2h1.7v1.7h-1.7zM1481.3 333.9h1.7v1.7h-1.7zM1481.4 336.7h1.7v1.7h-1.7zM1482.0 339.3h1.7v1.7h-1.7zM1483.0 341.7h1.7v1.7h-1.7zM1484.5 343.7h1.7v1.7h-1.7zM1486.2 345.0h1.7v1.7h-1.7zM1488.1 345.7h1.7v1.7h-1.7zM1490.2 345.7h1.7v1.7h-1.7zM1492.1 345.0h1.7v1.7h-1.7zM1493.8 343.7h1.7v1.7h-1.7zM1495.3 341.7h1.7v1.7h-1.7zM1496.3 339.3h1.7v1.7h-1.7zM1496.9 336.7h1.7v1.7h-1.7zM1497.0 333.9h1.7v1.7h-1.7zM1496.5 331.2h1.7v1.7h-1.7zM1495.6 328.7h1.7v1.7h-1.7zM1494.2 326.6h1.7v1.7h-1.7zM1492.6 325.1h1.7v1.7h-1.7zM1490.6 324.2h1.7v1.7h-1.7zM1488.6 324.1h1.7v1.7h-1.7zM1486.7 324.6h1.7v1.7h-1.7zM1484.9 325.8h1.7v1.7h-1.7zM1483.3 327.6h1.7v1.7h-1.7zM1482.2 329.9h1.7v1.7h-1.7zM1481.5 332.5h1.7v1.7h-1.7zM1481.3 335.3h1.7v1.7h-1.7zM1481.6 338.0h1.7v1.7h-1.7zM1482.4 340.6h1.7v1.7h-1.7zM1483.7 342.7h1.7v1.7h-1.7zM1485.3 344.4h1.7v1.7h-1.7zM1487.2 345.5h1.7v1.7h-1.7zM1489.2 355.8h1.7v1.7h-1.7zM1491.4 355.5h1.7v1.7h-1.7zM1493.6 354.4h1.7v1.7h-1.7zM1495.5 352.7h1.7v1.7h-1.7zM1497.2 350.5h1.7v1.7h-1.7zM1498.4 347.8h1.7v1.7h-1.7zM1499.1 344.8h1.7v1.7h-1.7zM1499.4 341.6h1.7v1.7h-1.7zM1499.1 338.4h1.7v1.7h-1.7zM1498.4 335.4h1.7v1.7h-1.7zM1497.2 332.7h1.7v1.7h-1.7zM1495.5 330.5h1.7v1.7h-1.7zM1493.6 328.8h1.7v1.7h-1.7zM1491.4 327.7h1.7v1.7h-1.7zM1489.2 327.4h1.7v1.7h-1.7zM1486.9 327.7h1.7v1.7h-1.7zM1484.7 328.8h1.7v1.7h-1.7zM1482.8 330.5h1.7v1.7h-1.7zM1481.1 332.7h1.7v1.7h-1.7zM1479.9 335.4h1.7v1.7h-1.7zM1479.2 338.4h1.7v1.7h-1.7zM1478.9 341.6h1.7v1.7h-1.7zM1479.2 344.8h1.7v1.7h-1.7zM1479.9 347.8h1.7v1.7h-1.7zM1481.1 350.5h1.7v1.7h-1.7zM1482.8 352.7h1.7v1.7h-1.7zM1484.7 354.4h1.7v1.7h-1.7zM1486.9 355.5h1.7v1.7h-1.7zM1489.2 355.8h1.7v1.7h-1.7zM1491.4 355.5h1.7v1.7h-1.7zM1493.6 354.4h1.7v1.7h-1.7zM1495.5 352.7h1.7v1.7h-1.7zM1497.2 350.5h1.7v1.7h-1.7zM1498.4 347.8h1.7v1.7h-1.7zM1499.1 344.8h1.7v1.7h-1.7zM1499.4 341.6h1.7v1.7h-1.7zM1499.1 338.4h1.7v1.7h-1.7zM1498.4 335.4h1.7v1.7h-1.7zM1497.2 332.7h1.7v1.7h-1.7zM1495.5 330.5h1.7v1.7h-1.7zM1493.6 328.8h1.7v1.7h-1.7zM1491.4 327.7h1.7v1.7h-1.7zM1489.2 327.4h1.7v1.7h-1.7zM1486.9 327.7h1.7v1.7h-1.7zM1484.7 328.8h1.7v1.7h-1.7zM1482.8 330.5h1.7v1.7h-1.7zM1481.1 332.7h1.7v1.7h-1.7zM1479.9 335.4h1.7v1.7h-1.7zM1479.2 338.4h1.7v1.7h-1.7zM1478.9 341.6h1.7v1.7h-1.7zM1479.2 344.8h1.7v1.7h-1.7zM1479.9 347.8h1.7v1.7h-1.7zM1481.1 350.5h1.7v1.7h-1.7zM1482.8 352.7h1.7v1.7h-1.7zM1484.7 354.4h1.7v1.7h-1.7zM1486.9 355.5h1.7v1.7h-1.7zM1489.2 367.1h1.7v1.7h-1.7zM1491.7 366.8h1.7v1.7h-1.7zM1494.2 365.7h1.7v1.7h-1.7zM1496.5 364.0h1.7v1.7h-1.7zM1498.4 361.7h1.7v1.7h-1.7zM1500.0 358.9h1.7v1.7h-1.7zM1501.2 355.7h1.7v1.7h-1.7zM1501.9 352.3h1.7v1.7h-1.7zM1502.1 348.7h1.7v1.7h-1.7zM1501.8 345.1h1.7v1.7h-1.7zM1501.0 341.7h1.7v1.7h-1.7zM1499.7 338.6h1.7v1.7h-1.7zM1498.0 336.0h1.7v1.7h-1.7zM1495.9 333.8h1.7v1.7h-1.7zM1493.6 332.2h1.7v1.7h-1.7zM1491.1 331.4h1.7v1.7h-1.7zM1488.5 331.2h1.7v1.7h-1.7zM1486.0 331.7h1.7v1.7h-1.7zM1483.5 332.9h1.7v1.7h-1.7zM1481.3 334.8h1.7v1.7h-1.7zM1479.4 337.2h1.7v1.7h-1.7zM1477.9 340.1h1.7v1.7h-1.7zM1476.9 343.4h1.7v1.7h-1.7zM1476.3 346.9h1.7v1.7h-1.7zM1476.2 350.5h1.7v1.7h-1.7zM1476.7 354.0h1.7v1.7h-1.7zM1477.6 357.4h1.7v1.7h-1.7zM1479.0 360.4h1.7v1.7h-1.7zM1480.8 362.9h1.7v1.7h-1.7zM1483.0 365.0h1.7v1.7h-1.7zM1485.3 366.4h1.7v1.7h-1.7zM1487.9 367.1h1.7v1.7h-1.7zM1490.4 367.1h1.7v1.7h-1.7zM1493.0 366.4h1.7v1.7h-1.7zM1495.3 365.0h1.7v1.7h-1.7zM1497.5 362.9h1.7v1.7h-1.7zM1499.3 360.4h1.7v1.7h-1.7zM1500.7 357.4h1.7v1.7h-1.7zM1501.6 354.0h1.7v1.7h-1.7zM1502.1 350.5h1.7v1.7h-1.7zM1502.0 346.9h1.7v1.7h-1.7zM1501.4 343.4h1.7v1.7h-1.7zM1500.4 340.1h1.7v1.7h-1.7zM1498.9 337.2h1.7v1.7h-1.7zM1497.0 334.8h1.7v1.7h-1.7zM1494.8 332.9h1.7v1.7h-1.7zM1492.3 331.7h1.7v1.7h-1.7zM1489.8 331.2h1.7v1.7h-1.7zM1487.2 331.4h1.7v1.7h-1.7zM1484.7 332.2h1.7v1.7h-1.7zM1482.4 333.8h1.7v1.7h-1.7zM1480.3 336.0h1.7v1.7h-1.7zM1478.6 338.6h1.7v1.7h-1.7zM1477.3 341.7h1.7v1.7h-1.7zM1476.5 345.1h1.7v1.7h-1.7zM1476.2 348.7h1.7v1.7h-1.7zM1476.4 352.3h1.7v1.7h-1.7zM1477.1 355.7h1.7v1.7h-1.7zM1478.3 358.9h1.7v1.7h-1.7zM1479.9 361.7h1.7v1.7h-1.7zM1481.8 364.0h1.7v1.7h-1.7zM1484.1 365.7h1.7v1.7h-1.7zM1486.6 366.8h1.7v1.7h-1.7zM1489.2 379.8h1.7v1.7h-1.7zM1492.0 379.5h1.7v1.7h-1.7zM1494.8 378.4h1.7v1.7h-1.7zM1497.4 376.7h1.7v1.7h-1.7zM1499.7 374.3h1.7v1.7h-1.7zM1501.7 371.4h1.7v1.7h-1.7zM1503.2 368.1h1.7v1.7h-1.7zM1504.4 364.5h1.7v1.7h-1.7zM1505.0 360.6h1.7v1.7h-1.7zM1505.1 356.6h1.7v1.7h-1.7zM1504.7 352.6h1.7v1.7h-1.7zM1503.9 348.9h1.7v1.7h-1.7zM1502.5 345.4h1.7v1.7h-1.7zM1500.7 342.2h1.7v1.7h-1.7zM1498.6 339.6h1.7v1.7h-1.7zM1496.1 337.6h1.7v1.7h-1.7zM1493.4 336.2h1.7v1.7h-1.7zM1490.6 335.5h1.7v1.7h-1.7zM1487.7 335.5h1.7v1.7h-1.7zM1484.9 336.2h1.7v1.7h-1.7zM1482.2 337.6h1.7v1.7h-1.7zM1479.7 339.6h1.7v1.7h-1.7zM1477.6 342.2h1.7v1.7h-1.7zM1475.8 345.4h1.7v1.7h-1.7zM1474.4 348.9h1.7v1.7h-1.7zM1473.6 352.6h1.7v1.7h-1.7zM1473.2 356.6h1.7v1.7h-1.7zM1473.3 360.6h1.7v1.7h-1.7zM1473.9 364.5h1.7v1.7h-1.7zM1475.1 368.1h1.7v1.7h-1.7zM1476.6 371.4h1.7v1.7h-1.7zM1478.6 374.3h1.7v1.7h-1.7zM1480.9 376.7h1.7v1.7h-1.7zM1483.5 378.4h1.7v1.7h-1.7zM1486.3 379.5h1.7v1.7h-1.7zM1489.2 379.8h1.7v1.7h-1.7zM1492.0 379.5h1.7v1.7h-1.7zM1494.8 378.4h1.7v1.7h-1.7zM1497.4 376.7h1.7v1.7h-1.7zM1499.7 374.3h1.7v1.7h-1.7zM1501.7 371.4h1.7v1.7h-1.7zM1503.2 368.1h1.7v1.7h-1.7zM1504.4 364.5h1.7v1.7h-1.7zM1505.0 360.6h1.7v1.7h-1.7zM1505.1 356.6h1.7v1.7h-1.7zM1504.7 352.6h1.7v1.7h-1.7zM1503.9 348.9h1.7v1.7h-1.7zM1502.5 345.4h1.7v1.7h-1.7zM1500.7 342.2h1.7v1.7h-1.7zM1498.6 339.6h1.7v1.7h-1.7zM1496.1 337.6h1.7v1.7h-1.7zM1493.4 336.2h1.7v1.7h-1.7zM1490.6 335.5h1.7v1.7h-1.7zM1487.7 335.5h1.7v1.7h-1.7zM1484.9 336.2h1.7v1.7h-1.7zM1482.2 337.6h1.7v1.7h-1.7zM1479.7 339.6h1.7v1.7h-1.7zM1477.6 342.2h1.7v1.7h-1.7zM1475.8 345.4h1.7v1.7h-1.7zM1474.4 348.9h1.7v1.7h-1.7zM1473.6 352.6h1.7v1.7h-1.7zM1473.2 356.6h1.7v1.7h-1.7zM1473.3 360.6h1.7v1.7h-1.7zM1473.9 364.5h1.7v1.7h-1.7zM1475.1 368.1h1.7v1.7h-1.7zM1476.6 371.4h1.7v1.7h-1.7zM1478.6 374.3h1.7v1.7h-1.7zM1480.9 376.7h1.7v1.7h-1.7zM1483.5 378.4h1.7v1.7h-1.7zM1486.3 379.5h1.7v1.7h-1.7zM1489.2 393.8h1.7v1.7h-1.7zM1492.3 393.5h1.7v1.7h-1.7zM1495.4 392.4h1.7v1.7h-1.7zM1498.3 390.7h1.7v1.7h-1.7zM1500.9 388.3h1.7v1.7h-1.7zM1503.3 385.4h1.7v1.7h-1.7zM1505.2 381.9h1.7v1.7h-1.7zM1506.8 378.1h1.7v1.7h-1.7zM1507.8 374.0h1.7v1.7h-1.7zM1508.4 369.7h1.7v1.7h-1.7zM1508.5 365.3h1.7v1.7h-1.7zM1508.0 360.9h1.7v1.7h-1.7zM1507.1 356.8h1.7v1.7h-1.7zM1505.6 352.9h1.7v1.7h-1.7zM1503.8 349.3h1.7v1.7h-1.7zM1501.5 346.3h1.7v1.7h-1.7zM1498.9 343.7h1.7v1.7h-1.7zM1496.1 341.8h1.7v1.7h-1.7zM1493.1 340.6h1.7v1.7h-1.7zM1489.9 340.1h1.7v1.7h-1.7zM1486.8 340.2h1.7v1.7h-1.7zM1483.7 341.1h1.7v1.7h-1.7zM1480.8 342.7h1.7v1.7h-1.7zM1478.0 344.9h1.7v1.7h-1.7zM1475.6 347.7h1.7v1.7h-1.7zM1473.5 351.0h1.7v1.7h-1.7zM1471.9 354.8h1.7v1.7h-1.7zM1470.7 358.8h1.7v1.7h-1.7zM1470.0 363.1h1.7v1.7h-1.7zM1469.8 367.5h1.7v1.7h-1.7zM1470.1 371.8h1.7v1.7h-1.7zM1470.9 376.1h1.7v1.7h-1.7zM1472.3 380.1h1.7v1.7h-1.7zM1474.0 383.7h1.7v1.7h-1.7zM1476.2 386.9h1.7v1.7h-1.7zM1478.7 389.5h1.7v1.7h-1.7zM1481.5 391.6h1.7v1.7h-1.7zM1484.5 393.0h1.7v1.7h-1.7zM1487.6 393.7h1.7v1.7h-1.7zM1490.7 393.7h1.7v1.7h-1.7zM1493.8 393.0h1.7v1.7h-1.7zM1496.8 391.6h1.7v1.7h-1.7zM1499.6 389.5h1.7v1.7h-1.7zM1502.1 386.9h1.7v1.7h-1.7zM1504.3 383.7h1.7v1.7h-1.7zM1506.0 380.1h1.7v1.7h-1.7zM1507.4 376.1h1.7v1.7h-1.7zM1508.2 371.8h1.7v1.7h-1.7zM1508.5 367.5h1.7v1.7h-1.7zM1508.3 363.1h1.7v1.7h-1.7zM1507.6 358.8h1.7v1.7h-1.7zM1506.4 354.8h1.7v1.7h-1.7zM1504.8 351.0h1.7v1.7h-1.7zM1502.7 347.7h1.7v1.7h-1.7zM1500.3 344.9h1.7v1.7h-1.7zM1497.5 342.7h1.7v1.7h-1.7zM1494.6 341.1h1.7v1.7h-1.7zM1491.5 340.2h1.7v1.7h-1.7zM1488.4 340.1h1.7v1.7h-1.7zM1485.2 340.6h1.7v1.7h-1.7zM1482.2 341.8h1.7v1.7h-1.7zM1479.4 343.7h1.7v1.7h-1.7zM1476.8 346.3h1.7v1.7h-1.7zM1474.5 349.3h1.7v1.7h-1.7zM1472.7 352.9h1.7v1.7h-1.7zM1471.2 356.8h1.7v1.7h-1.7zM1470.3 360.9h1.7v1.7h-1.7zM1469.8 365.3h1.7v1.7h-1.7zM1469.9 369.7h1.7v1.7h-1.7zM1470.5 374.0h1.7v1.7h-1.7zM1471.5 378.1h1.7v1.7h-1.7zM1473.1 381.9h1.7v1.7h-1.7zM1475.0 385.4h1.7v1.7h-1.7zM1477.4 388.3h1.7v1.7h-1.7zM1480.0 390.7h1.7v1.7h-1.7zM1482.9 392.4h1.7v1.7h-1.7zM1486.0 393.5h1.7v1.7h-1.7zM1489.2 409.1h1.7v1.7h-1.7zM1492.6 408.8h1.7v1.7h-1.7zM1495.9 407.7h1.7v1.7h-1.7zM1499.1 406.0h1.7v1.7h-1.7zM1502.1 403.6h1.7v1.7h-1.7zM1504.8 400.6h1.7v1.7h-1.7zM1507.2 397.1h1.7v1.7h-1.7zM1509.1 393.1h1.7v1.7h-1.7zM1510.6 388.8h1.7v1.7h-1.7zM1511.6 384.3h1.7v1.7h-1.7zM1512.1 379.5h1.7v1.7h-1.7zM1512.1 374.8h1.7v1.7h-1.7zM1511.6 370.0h1.7v1.7h-1.7zM1510.6 365.5h1.7v1.7h-1.7zM1509.1 361.1h1.7v1.7h-1.7zM1507.2 357.2h1.7v1.7h-1.7zM1504.8 353.7h1.7v1.7h-1.7zM1502.1 350.7h1.7v1.7h-1.7zM1499.1 348.3h1.7v1.7h-1.7zM1495.9 346.6h1.7v1.7h-1.7zM1492.6 345.5h1.7v1.7h-1.7zM1489.2 345.1h1.7v1.7h-1.7zM1485.7 345.5h1.7v1.7h-1.7zM1482.4 346.6h1.7v1.7h-1.7zM1479.2 348.3h1.7v1.7h-1.7zM1476.2 350.7h1.7v1.7h-1.7zM1473.5 353.7h1.7v1.7h-1.7zM1471.1 357.2h1.7v1.7h-1.7zM1469.2 361.1h1.7v1.7h-1.7zM1467.7 365.5h1.7v1.7h-1.7zM1466.7 370.0h1.7v1.7h-1.7zM1466.2 374.8h1.7v1.7h-1.7zM1466.2 379.5h1.7v1.7h-1.7zM1466.7 384.3h1.7v1.7h-1.7zM1467.7 388.8h1.7v1.7h-1.7zM1469.2 393.1h1.7v1.7h-1.7zM1471.1 397.1h1.7v1.7h-1.7zM1473.5 400.6h1.7v1.7h-1.7zM1476.2 403.6h1.7v1.7h-1.7zM1479.2 406.0h1.7v1.7h-1.7zM1482.4 407.7h1.7v1.7h-1.7zM1485.7 408.8h1.7v1.7h-1.7zM1489.2 409.1h1.7v1.7h-1.7zM1492.6 408.8h1.7v1.7h-1.7zM1495.9 407.7h1.7v1.7h-1.7zM1499.1 406.0h1.7v1.7h-1.7zM1502.1 403.6h1.7v1.7h-1.7zM1504.8 400.6h1.7v1.7h-1.7zM1507.2 397.1h1.7v1.7h-1.7zM1509.1 393.1h1.7v1.7h-1.7zM1510.6 388.8h1.7v1.7h-1.7zM1511.6 384.3h1.7v1.7h-1.7zM1512.1 379.5h1.7v1.7h-1.7zM1512.1 374.8h1.7v1.7h-1.7zM1511.6 370.0h1.7v1.7h-1.7zM1510.6 365.5h1.7v1.7h-1.7zM1509.1 361.1h1.7v1.7h-1.7zM1507.2 357.2h1.7v1.7h-1.7zM1504.8 353.7h1.7v1.7h-1.7zM1502.1 350.7h1.7v1.7h-1.7zM1499.1 348.3h1.7v1.7h-1.7zM1495.9 346.6h1.7v1.7h-1.7zM1492.6 345.5h1.7v1.7h-1.7zM1489.2 345.1h1.7v1.7h-1.7zM1485.7 345.5h1.7v1.7h-1.7zM1482.4 346.6h1.7v1.7h-1.7zM1479.2 348.3h1.7v1.7h-1.7zM1476.2 350.7h1.7v1.7h-1.7zM1473.5 353.7h1.7v1.7h-1.7zM1471.1 357.2h1.7v1.7h-1.7zM1469.2 361.1h1.7v1.7h-1.7zM1467.7 365.5h1.7v1.7h-1.7zM1466.7 370.0h1.7v1.7h-1.7zM1466.2 374.8h1.7v1.7h-1.7zM1466.2 379.5h1.7v1.7h-1.7zM1466.7 384.3h1.7v1.7h-1.7zM1467.7 388.8h1.7v1.7h-1.7zM1469.2 393.1h1.7v1.7h-1.7zM1471.1 397.1h1.7v1.7h-1.7zM1473.5 400.6h1.7v1.7h-1.7zM1476.2 403.6h1.7v1.7h-1.7zM1479.2 406.0h1.7v1.7h-1.7zM1482.4 407.7h1.7v1.7h-1.7zM1485.7 408.8h1.7v1.7h-1.7z"/>
<path fill="#e8140e" d="M1489.2 326.1h1.7v1.7h-1.7zM1495.0 326.7h1.7v1.7h-1.7zM1489.7 327.7h1.7v1.7h-1.7zM1488.6 327.7h1.7v1.7h-1.7zM1483.3 326.7h1.7v1.7h-1.7zM1489.2 331.1h1.7v1.7h-1.7zM1499.1 331.5h1.7v1.7h-1.7zM1500.8 332.3h1.7v1.7h-1.7zM1495.3 333.3h1.7v1.7h-1.7zM1490.2 334.2h1.7v1.7h-1.7zM1489.2 334.5h1.7v1.7h-1.7zM1488.1 334.2h1.7v1.7h-1.7zM1483.0 333.3h1.7v1.7h-1.7zM1477.5 332.3h1.7v1.7h-1.7zM1479.2 331.5h1.7v1.7h-1.7zM1489.2 336.1h1.7v1.7h-1.7zM1500.0 336.4h1.7v1.7h-1.7zM1506.5 337.0h1.7v1.7h-1.7zM1506.6 337.9h1.7v1.7h-1.7zM1501.6 338.9h1.7v1.7h-1.7zM1495.2 339.9h1.7v1.7h-1.7zM1490.7 340.7h1.7v1.7h-1.7zM1489.2 341.1h1.7v1.7h-1.7zM1489.1 341.1h1.7v1.7h-1.7zM1487.6 340.7h1.7v1.7h-1.7zM1483.1 339.9h1.7v1.7h-1.7zM1476.7 338.9h1.7v1.7h-1.7zM1471.7 337.9h1.7v1.7h-1.7zM1471.8 337.0h1.7v1.7h-1.7zM1478.3 336.4h1.7v1.7h-1.7zM1489.2 341.1h1.7v1.7h-1.7zM1500.4 341.3h1.7v1.7h-1.7zM1509.0 341.8h1.7v1.7h-1.7zM1513.1 342.5h1.7v1.7h-1.7zM1512.4 343.5h1.7v1.7h-1.7zM1507.8 344.5h1.7v1.7h-1.7zM1501.4 345.5h1.7v1.7h-1.7zM1495.4 346.4h1.7v1.7h-1.7zM1491.2 347.2h1.7v1.7h-1.7zM1489.4 347.7h1.7v1.7h-1.7zM1489.2 347.8h1.7v1.7h-1.7zM1488.9 347.7h1.7v1.7h-1.7zM1487.1 347.2h1.7v1.7h-1.7zM1482.9 346.4h1.7v1.7h-1.7zM1476.9 345.5h1.7v1.7h-1.7zM1470.5 344.5h1.7v1.7h-1.7zM1465.9 343.5h1.7v1.7h-1.7zM1465.2 342.5h1.7v1.7h-1.7zM1469.3 341.8h1.7v1.7h-1.7zM1477.9 341.3h1.7v1.7h-1.7zM1489.2 346.1h1.7v1.7h-1.7zM1500.6 346.3h1.7v1.7h-1.7zM1510.2 346.7h1.7v1.7h-1.7zM1516.8 347.3h1.7v1.7h-1.7zM1519.4 348.1h1.7v1.7h-1.7zM1518.2 349.0h1.7v1.7h-1.7zM1513.9 350.1h1.7v1.7h-1.7zM1507.8 351.1h1.7v1.7h-1.7zM1501.3 352.1h1.7v1.7h-1.7zM1495.7 353.0h1.7v1.7h-1.7zM1491.8 353.7h1.7v1.7h-1.7zM1489.8 354.2h1.7v1.7h-1.7zM1489.2 354.5h1.7v1.7h-1.7zM1489.1 354.5h1.7v1.7h-1.7zM1488.5 354.2h1.7v1.7h-1.7zM1486.5 353.7h1.7v1.7h-1.7zM1482.6 353.0h1.7v1.7h-1.7zM1477.0 352.1h1.7v1.7h-1.7zM1470.5 351.1h1.7v1.7h-1.7zM1464.4 350.1h1.7v1.7h-1.7zM1460.1 349.0h1.7v1.7h-1.7zM1458.9 348.1h1.7v1.7h-1.7zM1461.5 347.3h1.7v1.7h-1.7zM1468.1 346.7h1.7v1.7h-1.7zM1477.7 346.3h1.7v1.7h-1.7zM1489.2 351.1h1.7v1.7h-1.7zM1500.7 351.3h1.7v1.7h-1.7zM1510.9 351.6h1.7v1.7h-1.7zM1518.9 352.1h1.7v1.7h-1.7zM1523.9 352.8h1.7v1.7h-1.7zM1525.5 353.6h1.7v1.7h-1.7zM1524.0 354.6h1.7v1.7h-1.7zM1519.9 355.6h1.7v1.7h-1.7zM1514.1 356.7h1.7v1.7h-1.7zM1507.6 357.7h1.7v1.7h-1.7zM1501.3 358.6h1.7v1.7h-1.7zM1496.0 359.5h1.7v1.7h-1.7zM1492.3 360.2h1.7v1.7h-1.7zM1490.1 360.7h1.7v1.7h-1.7zM1489.3 361.0h1.7v1.7h-1.7zM1489.2 361.1h1.7v1.7h-1.7zM1489.0 361.0h1.7v1.7h-1.7zM1488.2 360.7h1.7v1.7h-1.7zM1486.0 360.2h1.7v1.7h-1.7zM1482.3 359.5h1.7v1.7h-1.7zM1477.0 358.6h1.7v1.7h-1.7zM1470.7 357.7h1.7v1.7h-1.7zM1464.2 356.7h1.7v1.7h-1.7zM1458.4 355.6h1.7v1.7h-1.7zM1454.3 354.6h1.7v1.7h-1.7zM1452.8 353.6h1.7v1.7h-1.7zM1454.4 352.8h1.7v1.7h-1.7zM1459.4 352.1h1.7v1.7h-1.7zM1467.4 351.6h1.7v1.7h-1.7zM1477.6 351.3h1.7v1.7h-1.7z"/>
<path fill="#e8140e" d="M1489.2 330.3h1.7v1.7h-1.7zM1490.7 331.4h1.7v1.7h-1.7zM1489.7 333.6h1.7v1.7h-1.7zM1489.2 334.6h1.7v1.7h-1.7zM1488.6 333.6h1.7v1.7h-1.7zM1487.6 331.4h1.7v1.7h-1.7zM1489.2 331.5h1.7v1.7h-1.7zM1491.4 332.1h1.7v1.7h-1.7zM1492.3 333.7h1.7v1.7h-1.7zM1491.6 335.8h1.7v1.7h-1.7zM1490.2 338.0h1.7v1.7h-1.7zM1489.3 339.6h1.7v1.7h-1.7zM1489.2 340.1h1.7v1.7h-1.7zM1489.0 339.6h1.7v1.7h-1.7zM1488.1 338.0h1.7v1.7h-1.7zM1486.8 335.8h1.7v1.7h-1.7zM1486.0 333.7h1.7v1.7h-1.7zM1486.9 332.1h1.7v1.7h-1.7zM1489.2 332.8h1.7v1.7h-1.7zM1491.5 333.1h1.7v1.7h-1.7zM1493.2 334.3h1.7v1.7h-1.7zM1493.8 336.0h1.7v1.7h-1.7zM1493.3 338.1h1.7v1.7h-1.7zM1492.1 340.3h1.7v1.7h-1.7zM1490.7 342.4h1.7v1.7h-1.7zM1489.7 344.1h1.7v1.7h-1.7zM1489.2 345.3h1.7v1.7h-1.7zM1489.2 345.6h1.7v1.7h-1.7zM1489.1 345.3h1.7v1.7h-1.7zM1488.6 344.1h1.7v1.7h-1.7zM1487.6 342.4h1.7v1.7h-1.7zM1486.2 340.3h1.7v1.7h-1.7zM1485.0 338.1h1.7v1.7h-1.7zM1484.5 336.0h1.7v1.7h-1.7zM1485.1 334.3h1.7v1.7h-1.7zM1486.8 333.1h1.7v1.7h-1.7zM1489.2 333.9h1.7v1.7h-1.7zM1491.6 334.2h1.7v1.7h-1.7zM1493.6 335.1h1.7v1.7h-1.7zM1494.9 336.5h1.7v1.7h-1.7zM1495.4 338.2h1.7v1.7h-1.7zM1495.0 340.3h1.7v1.7h-1.7zM1494.0 342.5h1.7v1.7h-1.7zM1492.6 344.8h1.7v1.7h-1.7zM1491.2 346.8h1.7v1.7h-1.7zM1490.1 348.6h1.7v1.7h-1.7zM1489.5 350.0h1.7v1.7h-1.7zM1489.2 350.9h1.7v1.7h-1.7zM1489.2 351.1h1.7v1.7h-1.7zM1489.1 350.9h1.7v1.7h-1.7zM1488.8 350.0h1.7v1.7h-1.7zM1488.2 348.6h1.7v1.7h-1.7zM1487.1 346.8h1.7v1.7h-1.7zM1485.7 344.8h1.7v1.7h-1.7zM1484.4 342.5h1.7v1.7h-1.7zM1483.3 340.3h1.7v1.7h-1.7zM1482.9 338.2h1.7v1.7h-1.7zM1483.4 336.5h1.7v1.7h-1.7zM1484.7 335.1h1.7v1.7h-1.7zM1486.7 334.2h1.7v1.7h-1.7zM1489.2 335.1h1.7v1.7h-1.7zM1491.6 335.4h1.7v1.7h-1.7zM1493.8 336.1h1.7v1.7h-1.7zM1495.5 337.2h1.7v1.7h-1.7zM1496.6 338.7h1.7v1.7h-1.7zM1496.9 340.5h1.7v1.7h-1.7zM1496.6 342.6h1.7v1.7h-1.7zM1495.7 344.8h1.7v1.7h-1.7zM1494.5 347.0h1.7v1.7h-1.7zM1493.1 349.2h1.7v1.7h-1.7zM1491.7 351.3h1.7v1.7h-1.7zM1490.6 353.1h1.7v1.7h-1.7zM1489.8 354.6h1.7v1.7h-1.7zM1489.4 355.7h1.7v1.7h-1.7zM1489.2 356.4h1.7v1.7h-1.7zM1489.2 356.6h1.7v1.7h-1.7zM1489.1 356.4h1.7v1.7h-1.7zM1488.9 355.7h1.7v1.7h-1.7zM1488.5 354.6h1.7v1.7h-1.7zM1487.7 353.1h1.7v1.7h-1.7zM1486.6 351.3h1.7v1.7h-1.7zM1485.2 349.2h1.7v1.7h-1.7zM1483.8 347.0h1.7v1.7h-1.7zM1482.6 344.8h1.7v1.7h-1.7zM1481.7 342.6h1.7v1.7h-1.7zM1481.4 340.5h1.7v1.7h-1.7zM1481.7 338.7h1.7v1.7h-1.7zM1482.8 337.2h1.7v1.7h-1.7zM1484.5 336.1h1.7v1.7h-1.7zM1486.7 335.4h1.7v1.7h-1.7zM1489.2 336.3h1.7v1.7h-1.7zM1491.6 336.5h1.7v1.7h-1.7zM1493.9 337.1h1.7v1.7h-1.7zM1495.9 338.1h1.7v1.7h-1.7zM1497.3 339.4h1.7v1.7h-1.7zM1498.2 341.0h1.7v1.7h-1.7zM1498.5 342.8h1.7v1.7h-1.7zM1498.2 344.8h1.7v1.7h-1.7zM1497.5 347.0h1.7v1.7h-1.7zM1496.4 349.2h1.7v1.7h-1.7zM1495.0 351.5h1.7v1.7h-1.7zM1493.6 353.7h1.7v1.7h-1.7zM1492.3 355.7h1.7v1.7h-1.7zM1491.1 357.5h1.7v1.7h-1.7zM1490.2 359.1h1.7v1.7h-1.7zM1489.6 360.4h1.7v1.7h-1.7zM1489.3 361.4h1.7v1.7h-1.7zM1489.2 362.0h1.7v1.7h-1.7zM1489.2 362.1h1.7v1.7h-1.7zM1489.1 362.0h1.7v1.7h-1.7zM1489.0 361.4h1.7v1.7h-1.7zM1488.7 360.4h1.7v1.7h-1.7zM1488.1 359.1h1.7v1.7h-1.7zM1487.2 357.5h1.7v1.7h-1.7zM1486.0 355.7h1.7v1.7h-1.7zM1484.7 353.7h1.7v1.7h-1.7zM1483.3 351.5h1.7v1.7h-1.7zM1482.0 349.2h1.7v1.7h-1.7zM1480.8 347.0h1.7v1.7h-1.7zM1480.1 344.8h1.7v1.7h-1.7zM1479.8 342.8h1.7v1.7h-1.7zM1480.1 341.0h1.7v1.7h-1.7zM1481.0 339.4h1.7v1.7h-1.7zM1482.4 338.1h1.7v1.7h-1.7zM1484.4 337.1h1.7v1.7h-1.7zM1486.7 336.5h1.7v1.7h-1.7zM1489.2 337.5h1.7v1.7h-1.7zM1491.6 337.7h1.7v1.7h-1.7zM1494.0 338.2h1.7v1.7h-1.7zM1496.1 339.0h1.7v1.7h-1.7zM1497.8 340.2h1.7v1.7h-1.7zM1499.1 341.6h1.7v1.7h-1.7zM1499.8 343.2h1.7v1.7h-1.7zM1500.1 345.1h1.7v1.7h-1.7zM1499.8 347.1h1.7v1.7h-1.7zM1499.2 349.3h1.7v1.7h-1.7zM1498.2 351.5h1.7v1.7h-1.7zM1496.9 353.7h1.7v1.7h-1.7zM1495.5 355.9h1.7v1.7h-1.7zM1494.1 358.1h1.7v1.7h-1.7zM1492.8 360.1h1.7v1.7h-1.7zM1491.6 362.0h1.7v1.7h-1.7zM1490.7 363.6h1.7v1.7h-1.7zM1490.0 365.0h1.7v1.7h-1.7zM1489.5 366.2h1.7v1.7h-1.7zM1489.3 367.0h1.7v1.7h-1.7zM1489.2 367.5h1.7v1.7h-1.7zM1489.2 367.6h1.7v1.7h-1.7zM1489.1 367.5h1.7v1.7h-1.7zM1489.0 367.0h1.7v1.7h-1.7zM1488.8 366.2h1.7v1.7h-1.7zM1488.3 365.0h1.7v1.7h-1.7zM1487.6 363.6h1.7v1.7h-1.7zM1486.7 362.0h1.7v1.7h-1.7zM1485.5 360.1h1.7v1.7h-1.7zM1484.2 358.1h1.7v1.7h-1.7zM1482.8 355.9h1.7v1.7h-1.7zM1481.4 353.7h1.7v1.7h-1.7zM1480.1 351.5h1.7v1.7h-1.7zM1479.1 349.3h1.7v1.7h-1.7zM1478.5 347.1h1.7v1.7h-1.7zM1478.2 345.1h1.7v1.7h-1.7zM1478.5 343.2h1.7v1.7h-1.7zM1479.2 341.6h1.7v1.7h-1.7zM1480.5 340.2h1.7v1.7h-1.7zM1482.2 339.0h1.7v1.7h-1.7zM1484.3 338.2h1.7v1.7h-1.7zM1486.7 337.7h1.7v1.7h-1.7zM1489.2 338.8h1.7v1.7h-1.7zM1491.6 338.9h1.7v1.7h-1.7zM1494.0 339.3h1.7v1.7h-1.7zM1496.2 340.1h1.7v1.7h-1.7zM1498.1 341.1h1.7v1.7h-1.7zM1499.6 342.3h1.7v1.7h-1.7zM1500.7 343.8h1.7v1.7h-1.7zM1501.4 345.5h1.7v1.7h-1.7zM1501.6 347.3h1.7v1.7h-1.7zM1501.4 349.4h1.7v1.7h-1.7zM1500.8 351.5h1.7v1.7h-1.7zM1499.9 353.7h1.7v1.7h-1.7zM1498.8 355.9h1.7v1.7h-1.7zM1497.4 358.2h1.7v1.7h-1.7zM1496.0 360.4h1.7v1.7h-1.7zM1494.6 362.5h1.7v1.7h-1.7zM1493.3 364.5h1.7v1.7h-1.7zM1492.1 366.4h1.7v1.7h-1.7zM1491.1 368.1h1.7v1.7h-1.7zM1490.4 369.6h1.7v1.7h-1.7zM1489.8 370.8h1.7v1.7h-1.7zM1489.4 371.8h1.7v1.7h-1.7zM1489.2 372.6h1.7v1.7h-1.7zM1489.2 373.0h1.7v1.7h-1.7zM1489.2 373.1h1.7v1.7h-1.7zM1489.1 373.0h1.7v1.7h-1.7zM1489.1 372.6h1.7v1.7h-1.7zM1488.9 371.8h1.7v1.7h-1.7zM1488.5 370.8h1.7v1.7h-1.7zM1487.9 369.6h1.7v1.7h-1.7zM1487.2 368.1h1.7v1.7h-1.7zM1486.2 366.4h1.7v1.7h-1.7zM1485.0 364.5h1.7v1.7h-1.7zM1483.7 362.5h1.7v1.7h-1.7zM1482.3 360.4h1.7v1.7h-1.7zM1480.9 358.2h1.7v1.7h-1.7zM1479.6 355.9h1.7v1.7h-1.7zM1478.4 353.7h1.7v1.7h-1.7zM1477.5 351.5h1.7v1.7h-1.7zM1476.9 349.4h1.7v1.7h-1.7zM1476.7 347.3h1.7v1.7h-1.7zM1476.9 345.5h1.7v1.7h-1.7zM1477.6 343.8h1.7v1.7h-1.7zM1478.7 342.3h1.7v1.7h-1.7zM1480.2 341.1h1.7v1.7h-1.7zM1482.1 340.1h1.7v1.7h-1.7zM1484.3 339.3h1.7v1.7h-1.7zM1486.7 338.9h1.7v1.7h-1.7zM1489.2 339.9h1.7v1.7h-1.7zM1491.6 340.1h1.7v1.7h-1.7zM1494.1 340.5h1.7v1.7h-1.7zM1496.3 341.1h1.7v1.7h-1.7zM1498.3 342.0h1.7v1.7h-1.7zM1500.0 343.1h1.7v1.7h-1.7zM1501.4 344.5h1.7v1.7h-1.7zM1502.4 346.0h1.7v1.7h-1.7zM1503.0 347.7h1.7v1.7h-1.7zM1503.2 349.6h1.7v1.7h-1.7zM1503.0 351.6h1.7v1.7h-1.7zM1502.5 353.8h1.7v1.7h-1.7zM1501.6 355.9h1.7v1.7h-1.7zM1500.6 358.2h1.7v1.7h-1.7zM1499.3 360.4h1.7v1.7h-1.7zM1497.9 362.7h1.7v1.7h-1.7zM1496.5 364.8h1.7v1.7h-1.7zM1495.1 367.0h1.7v1.7h-1.7zM1493.8 369.0h1.7v1.7h-1.7zM1492.6 370.9h1.7v1.7h-1.7zM1491.6 372.6h1.7v1.7h-1.7zM1490.8 374.1h1.7v1.7h-1.7zM1490.1 375.5h1.7v1.7h-1.7zM1489.7 376.6h1.7v1.7h-1.7zM1489.4 377.5h1.7v1.7h-1.7zM1489.2 378.1h1.7v1.7h-1.7zM1489.2 378.5h1.7v1.7h-1.7zM1489.2 378.6h1.7v1.7h-1.7zM1489.1 378.5h1.7v1.7h-1.7zM1489.1 378.1h1.7v1.7h-1.7zM1488.9 377.5h1.7v1.7h-1.7zM1488.6 376.6h1.7v1.7h-1.7zM1488.2 375.5h1.7v1.7h-1.7zM1487.5 374.1h1.7v1.7h-1.7zM1486.7 372.6h1.7v1.7h-1.7zM1485.7 370.9h1.7v1.7h-1.7zM1484.5 369.0h1.7v1.7h-1.7zM1483.2 367.0h1.7v1.7h-1.7zM1481.8 364.8h1.7v1.7h-1.7zM1480.4 362.7h1.7v1.7h-1.7zM1479.0 360.4h1.7v1.7h-1.7zM1477.7 358.2h1.7v1.7h-1.7zM1476.7 355.9h1.7v1.7h-1.7zM1475.8 353.8h1.7v1.7h-1.7zM1475.3 351.6h1.7v1.7h-1.7zM1475.1 349.6h1.7v1.7h-1.7zM1475.3 347.7h1.7v1.7h-1.7zM1475.9 346.0h1.7v1.7h-1.7zM1476.9 344.5h1.7v1.7h-1.7zM1478.3 343.1h1.7v1.7h-1.7zM1480.0 342.0h1.7v1.7h-1.7zM1482.0 341.1h1.7v1.7h-1.7zM1484.2 340.5h1.7v1.7h-1.7zM1486.7 340.1h1.7v1.7h-1.7zM1489.2 341.1h1.7v1.7h-1.7zM1491.7 341.3h1.7v1.7h-1.7zM1494.1 341.6h1.7v1.7h-1.7zM1496.4 342.2h1.7v1.7h-1.7zM1498.5 343.0h1.7v1.7h-1.7zM1500.3 344.0h1.7v1.7h-1.7zM1501.9 345.3h1.7v1.7h-1.7zM1503.1 346.7h1.7v1.7h-1.7zM1504.0 348.3h1.7v1.7h-1.7zM1504.6 350.0h1.7v1.7h-1.7zM1504.7 351.9h1.7v1.7h-1.7zM1504.6 353.9h1.7v1.7h-1.7zM1504.1 356.0h1.7v1.7h-1.7zM1503.3 358.2h1.7v1.7h-1.7zM1502.3 360.4h1.7v1.7h-1.7zM1501.2 362.6h1.7v1.7h-1.7zM1499.8 364.9h1.7v1.7h-1.7zM1498.4 367.1h1.7v1.7h-1.7zM1497.0 369.3h1.7v1.7h-1.7zM1495.7 371.4h1.7v1.7h-1.7zM1494.3 373.4h1.7v1.7h-1.7zM1493.2 375.3h1.7v1.7h-1.7zM1492.1 377.0h1.7v1.7h-1.7zM1491.2 378.6h1.7v1.7h-1.7zM1490.5 380.0h1.7v1.7h-1.7zM1490.0 381.3h1.7v1.7h-1.7zM1489.6 382.3h1.7v1.7h-1.7zM1489.3 383.1h1.7v1.7h-1.7zM1489.2 383.7h1.7v1.7h-1.7zM1489.2 384.0h1.7v1.7h-1.7zM1489.2 384.1h1.7v1.7h-1.7zM1489.1 384.0h1.7v1.7h-1.7zM1489.1 383.7h1.7v1.7h-1.7zM1489.0 383.1h1.7v1.7h-1.7zM1488.7 382.3h1.7v1.7h-1.7zM1488.3 381.3h1.7v1.7h-1.7zM1487.8 380.0h1.7v1.7h-1.7zM1487.1 378.6h1.7v1.7h-1.7zM1486.2 377.0h1.7v1.7h-1.7zM1485.1 375.3h1.7v1.7h-1.7zM1484.0 373.4h1.7v1.7h-1.7zM1482.6 371.4h1.7v1.7h-1.7zM1481.3 369.3h1.7v1.7h-1.7zM1479.9 367.1h1.7v1.7h-1.7zM1478.5 364.9h1.7v1.7h-1.7zM1477.2 362.6h1.7v1.7h-1.7zM1476.0 360.4h1.7v1.7h-1.7zM1475.0 358.2h1.7v1.7h-1.7zM1474.2 356.0h1.7v1.7h-1.7zM1473.7 353.9h1.7v1.7h-1.7zM1473.6 351.9h1.7v1.7h-1.7zM1473.7 350.0h1.7v1.7h-1.7zM1474.3 348.3h1.7v1.7h-1.7zM1475.2 346.7h1.7v1.7h-1.7zM1476.4 345.3h1.7v1.7h-1.7zM1478.0 344.0h1.7v1.7h-1.7zM1479.8 343.0h1.7v1.7h-1.7zM1481.9 342.2h1.7v1.7h-1.7zM1484.2 341.6h1.7v1.7h-1.7zM1486.6 341.3h1.7v1.7h-1.7z"/>
<path fill="#2a36f2" d="M1489.2 327.9h1.7v1.7h-1.7zM1489.2 327.4h1.7v1.7h-1.7zM1489.2 327.9h1.7v1.7h-1.7zM1489.2 327.4h1.7v1.7h-1.7zM1489.2 330.0h1.7v1.7h-1.7zM1489.8 329.1h1.7v1.7h-1.7zM1489.2 328.1h1.7v1.7h-1.7zM1488.5 329.1h1.7v1.7h-1.7zM1489.2 330.0h1.7v1.7h-1.7zM1489.8 329.1h1.7v1.7h-1.7zM1489.2 328.1h1.7v1.7h-1.7zM1488.5 329.1h1.7v1.7h-1.7zM1489.2 333.6h1.7v1.7h-1.7zM1490.5 332.5h1.7v1.7h-1.7zM1490.5 330.4h1.7v1.7h-1.7zM1489.2 329.3h1.7v1.7h-1.7zM1487.8 330.4h1.7v1.7h-1.7zM1487.8 332.5h1.7v1.7h-1.7zM1489.2 333.6h1.7v1.7h-1.7zM1490.5 332.5h1.7v1.7h-1.7zM1490.5 330.4h1.7v1.7h-1.7zM1489.2 329.3h1.7v1.7h-1.7zM1487.8 330.4h1.7v1.7h-1.7zM1487.8 332.5h1.7v1.7h-1.7zM1489.2 338.7h1.7v1.7h-1.7zM1491.1 337.5h1.7v1.7h-1.7zM1491.8 334.8h1.7v1.7h-1.7zM1491.1 332.1h1.7v1.7h-1.7zM1489.2 331.0h1.7v1.7h-1.7zM1487.2 332.1h1.7v1.7h-1.7zM1486.5 334.8h1.7v1.7h-1.7zM1487.2 337.5h1.7v1.7h-1.7zM1489.2 338.7h1.7v1.7h-1.7zM1491.1 337.5h1.7v1.7h-1.7zM1491.8 334.8h1.7v1.7h-1.7zM1491.1 332.1h1.7v1.7h-1.7zM1489.2 331.0h1.7v1.7h-1.7zM1487.2 332.1h1.7v1.7h-1.7zM1486.5 334.8h1.7v1.7h-1.7zM1487.2 337.5h1.7v1.7h-1.7zM1489.2 345.1h1.7v1.7h-1.7zM1491.6 344.0h1.7v1.7h-1.7zM1493.1 341.0h1.7v1.7h-1.7zM1493.1 337.3h1.7v1.7h-1.7zM1491.6 334.3h1.7v1.7h-1.7zM1489.2 333.1h1.7v1.7h-1.7zM1486.7 334.3h1.7v1.7h-1.7zM1485.2 337.3h1.7v1.7h-1.7zM1485.2 341.0h1.7v1.7h-1.7zM1486.7 344.0h1.7v1.7h-1.7zM1489.2 345.1h1.7v1.7h-1.7zM1491.6 344.0h1.7v1.7h-1.7zM1493.1 341.0h1.7v1.7h-1.7zM1493.1 337.3h1.7v1.7h-1.7zM1491.6 334.3h1.7v1.7h-1.7zM1489.2 333.1h1.7v1.7h-1.7zM1486.7 334.3h1.7v1.7h-1.7zM1485.2 337.3h1.7v1.7h-1.7zM1485.2 341.0h1.7v1.7h-1.7zM1486.7 344.0h1.7v1.7h-1.7zM1489.2 353.1h1.7v1.7h-1.7zM1492.2 351.9h1.7v1.7h-1.7zM1494.4 348.8h1.7v1.7h-1.7zM1495.2 344.4h1.7v1.7h-1.7zM1494.4 340.1h1.7v1.7h-1.7zM1492.2 336.9h1.7v1.7h-1.7zM1489.2 335.8h1.7v1.7h-1.7zM1486.1 336.9h1.7v1.7h-1.7zM1483.9 340.1h1.7v1.7h-1.7zM1483.1 344.4h1.7v1.7h-1.7zM1483.9 348.8h1.7v1.7h-1.7zM1486.1 351.9h1.7v1.7h-1.7zM1489.2 353.1h1.7v1.7h-1.7zM1492.2 351.9h1.7v1.7h-1.7zM1494.4 348.8h1.7v1.7h-1.7zM1495.2 344.4h1.7v1.7h-1.7zM1494.4 340.1h1.7v1.7h-1.7zM1492.2 336.9h1.7v1.7h-1.7zM1489.2 335.8h1.7v1.7h-1.7zM1486.1 336.9h1.7v1.7h-1.7zM1483.9 340.1h1.7v1.7h-1.7zM1483.1 344.4h1.7v1.7h-1.7zM1483.9 348.7h1.7v1.7h-1.7zM1486.1 351.9h1.7v1.7h-1.7zM1489.2 362.4h1.7v1.7h-1.7zM1492.7 361.3h1.7v1.7h-1.7zM1495.6 358.0h1.7v1.7h-1.7zM1497.2 353.3h1.7v1.7h-1.7zM1497.2 348.1h1.7v1.7h-1.7zM1495.6 343.3h1.7v1.7h-1.7zM1492.7 340.1h1.7v1.7h-1.7zM1489.2 338.9h1.7v1.7h-1.7zM1485.6 340.1h1.7v1.7h-1.7zM1482.7 343.3h1.7v1.7h-1.7zM1481.1 348.1h1.7v1.7h-1.7zM1481.1 353.3h1.7v1.7h-1.7zM1482.7 358.0h1.7v1.7h-1.7zM1485.6 361.3h1.7v1.7h-1.7zM1489.2 362.4h1.7v1.7h-1.7zM1492.7 361.3h1.7v1.7h-1.7zM1495.6 358.0h1.7v1.7h-1.7zM1497.2 353.3h1.7v1.7h-1.7zM1497.2 348.1h1.7v1.7h-1.7zM1495.6 343.3h1.7v1.7h-1.7zM1492.7 340.1h1.7v1.7h-1.7zM1489.2 338.9h1.7v1.7h-1.7zM1485.6 340.1h1.7v1.7h-1.7zM1482.7 343.3h1.7v1.7h-1.7zM1481.1 348.1h1.7v1.7h-1.7zM1481.1 353.3h1.7v1.7h-1.7zM1482.7 358.0h1.7v1.7h-1.7zM1485.6 361.3h1.7v1.7h-1.7zM1489.2 373.2h1.7v1.7h-1.7zM1493.3 372.1h1.7v1.7h-1.7zM1496.8 368.7h1.7v1.7h-1.7zM1499.1 363.7h1.7v1.7h-1.7zM1499.9 357.9h1.7v1.7h-1.7zM1499.1 352.0h1.7v1.7h-1.7zM1496.8 347.0h1.7v1.7h-1.7zM1493.3 343.7h1.7v1.7h-1.7zM1489.2 342.5h1.7v1.7h-1.7zM1485.0 343.7h1.7v1.7h-1.7zM1481.5 347.0h1.7v1.7h-1.7zM1479.2 352.0h1.7v1.7h-1.7zM1478.4 357.9h1.7v1.7h-1.7zM1479.2 363.7h1.7v1.7h-1.7zM1481.5 368.7h1.7v1.7h-1.7zM1485.0 372.1h1.7v1.7h-1.7zM1489.2 373.2h1.7v1.7h-1.7zM1493.3 372.1h1.7v1.7h-1.7zM1496.8 368.7h1.7v1.7h-1.7zM1499.1 363.7h1.7v1.7h-1.7zM1499.9 357.9h1.7v1.7h-1.7zM1499.1 352.0h1.7v1.7h-1.7zM1496.8 347.0h1.7v1.7h-1.7zM1493.3 343.7h1.7v1.7h-1.7zM1489.2 342.5h1.7v1.7h-1.7zM1485.0 343.7h1.7v1.7h-1.7zM1481.5 347.0h1.7v1.7h-1.7zM1479.2 352.0h1.7v1.7h-1.7zM1478.4 357.9h1.7v1.7h-1.7zM1479.2 363.7h1.7v1.7h-1.7zM1481.5 368.7h1.7v1.7h-1.7zM1485.0 372.1h1.7v1.7h-1.7zM1489.2 385.5h1.7v1.7h-1.7zM1493.8 384.3h1.7v1.7h-1.7zM1497.9 380.9h1.7v1.7h-1.7zM1500.9 375.8h1.7v1.7h-1.7zM1502.6 369.4h1.7v1.7h-1.7zM1502.6 362.7h1.7v1.7h-1.7zM1500.9 356.3h1.7v1.7h-1.7zM1497.9 351.1h1.7v1.7h-1.7zM1493.8 347.8h1.7v1.7h-1.7zM1489.2 346.6h1.7v1.7h-1.7zM1484.5 347.8h1.7v1.7h-1.7zM1480.4 351.1h1.7v1.7h-1.7zM1477.4 356.3h1.7v1.7h-1.7zM1475.7 362.7h1.7v1.7h-1.7zM1475.7 369.4h1.7v1.7h-1.7zM1477.4 375.7h1.7v1.7h-1.7zM1480.4 380.9h1.7v1.7h-1.7zM1484.5 384.3h1.7v1.7h-1.7zM1489.2 385.5h1.7v1.7h-1.7zM1493.8 384.3h1.7v1.7h-1.7zM1497.9 380.9h1.7v1.7h-1.7zM1500.9 375.8h1.7v1.7h-1.7zM1502.6 369.4h1.7v1.7h-1.7zM1502.6 362.7h1.7v1.7h-1.7zM1500.9 356.3h1.7v1.7h-1.7zM1497.9 351.1h1.7v1.7h-1.7zM1493.8 347.8h1.7v1.7h-1.7zM1489.2 346.6h1.7v1.7h-1.7zM1484.5 347.8h1.7v1.7h-1.7zM1480.4 351.1h1.7v1.7h-1.7zM1477.4 356.3h1.7v1.7h-1.7zM1475.7 362.7h1.7v1.7h-1.7zM1475.7 369.4h1.7v1.7h-1.7zM1477.4 375.8h1.7v1.7h-1.7zM1480.4 380.9h1.7v1.7h-1.7zM1484.5 384.3h1.7v1.7h-1.7zM1489.2 399.1h1.7v1.7h-1.7zM1494.3 398.0h1.7v1.7h-1.7zM1499.0 394.6h1.7v1.7h-1.7zM1502.7 389.3h1.7v1.7h-1.7zM1505.1 382.6h1.7v1.7h-1.7zM1506.0 375.1h1.7v1.7h-1.7zM1505.1 367.7h1.7v1.7h-1.7zM1502.7 361.0h1.7v1.7h-1.7zM1499.0 355.7h1.7v1.7h-1.7zM1494.3 352.3h1.7v1.7h-1.7zM1489.2 351.1h1.7v1.7h-1.7zM1484.0 352.3h1.7v1.7h-1.7zM1479.3 355.7h1.7v1.7h-1.7zM1475.6 361.0h1.7v1.7h-1.7zM1473.2 367.7h1.7v1.7h-1.7zM1472.4 375.1h1.7v1.7h-1.7zM1473.2 382.6h1.7v1.7h-1.7zM1475.6 389.3h1.7v1.7h-1.7zM1479.3 394.6h1.7v1.7h-1.7zM1484.0 398.0h1.7v1.7h-1.7zM1489.2 399.1h1.7v1.7h-1.7zM1494.3 398.0h1.7v1.7h-1.7zM1499.0 394.6h1.7v1.7h-1.7zM1502.7 389.3h1.7v1.7h-1.7zM1505.1 382.6h1.7v1.7h-1.7zM1506.0 375.1h1.7v1.7h-1.7zM1505.1 367.7h1.7v1.7h-1.7zM1502.7 361.0h1.7v1.7h-1.7zM1499.0 355.7h1.7v1.7h-1.7zM1494.3 352.3h1.7v1.7h-1.7zM1489.2 351.1h1.7v1.7h-1.7zM1484.0 352.3h1.7v1.7h-1.7zM1479.3 355.7h1.7v1.7h-1.7zM1475.6 361.0h1.7v1.7h-1.7zM1473.2 367.7h1.7v1.7h-1.7zM1472.4 375.1h1.7v1.7h-1.7zM1473.2 382.6h1.7v1.7h-1.7zM1475.6 389.3h1.7v1.7h-1.7zM1479.3 394.6h1.7v1.7h-1.7zM1484.0 398.0h1.7v1.7h-1.7z"/>
<path fill="#2a36f2" d="M1439.1 372.8h1.6v1.6h-1.6zM1440.1 380.3h1.6v1.6h-1.6zM1445.7 376.2h1.6v1.6h-1.6zM1453.4 371.9h1.6v1.6h-1.6zM1456.4 381.5h1.6v1.6h-1.6zM1459.8 376.8h1.6v1.6h-1.6zM1465.8 371.1h1.6v1.6h-1.6zM1445.9 382.2h1.6v1.6h-1.6zM1450.4 384.0h1.6v1.6h-1.6zM1459.2 368.5h1.6v1.6h-1.6zM1467.5 364.0h1.6v1.6h-1.6zM1462.9 383.9h1.6v1.6h-1.6zM1538.0 372.6h1.6v1.6h-1.6zM1537.7 379.9h1.6v1.6h-1.6zM1531.0 375.0h1.6v1.6h-1.6zM1525.5 372.3h1.6v1.6h-1.6zM1521.5 382.1h1.6v1.6h-1.6zM1516.3 378.4h1.6v1.6h-1.6zM1514.3 369.9h1.6v1.6h-1.6zM1532.8 383.2h1.6v1.6h-1.6zM1525.8 385.0h1.6v1.6h-1.6zM1520.4 366.0h1.6v1.6h-1.6zM1511.5 362.1h1.6v1.6h-1.6zM1515.4 384.4h1.6v1.6h-1.6z"/>
<path fill="#e8140e" d="M1333.2 627.4h1.7v1.7h-1.7zM1339.4 628.2h1.7v1.7h-1.7zM1333.7 629.4h1.7v1.7h-1.7zM1332.6 629.4h1.7v1.7h-1.7zM1326.9 628.2h1.7v1.7h-1.7zM1333.2 633.6h1.7v1.7h-1.7zM1343.8 634.1h1.7v1.7h-1.7zM1345.6 635.2h1.7v1.7h-1.7zM1339.7 636.6h1.7v1.7h-1.7zM1334.3 637.7h1.7v1.7h-1.7zM1333.2 638.1h1.7v1.7h-1.7zM1332.0 637.7h1.7v1.7h-1.7zM1326.6 636.6h1.7v1.7h-1.7zM1320.7 635.2h1.7v1.7h-1.7zM1322.5 634.1h1.7v1.7h-1.7zM1333.2 639.9h1.7v1.7h-1.7zM1344.8 640.2h1.7v1.7h-1.7zM1351.8 641.0h1.7v1.7h-1.7zM1351.8 642.2h1.7v1.7h-1.7zM1346.5 643.6h1.7v1.7h-1.7zM1339.6 645.0h1.7v1.7h-1.7zM1334.8 646.0h1.7v1.7h-1.7zM1333.2 646.6h1.7v1.7h-1.7zM1333.1 646.6h1.7v1.7h-1.7zM1331.5 646.0h1.7v1.7h-1.7zM1326.7 645.0h1.7v1.7h-1.7zM1319.8 643.6h1.7v1.7h-1.7zM1314.5 642.2h1.7v1.7h-1.7zM1314.5 641.0h1.7v1.7h-1.7zM1321.5 640.2h1.7v1.7h-1.7zM1333.2 646.1h1.7v1.7h-1.7zM1345.2 646.4h1.7v1.7h-1.7zM1354.4 647.0h1.7v1.7h-1.7zM1358.8 648.0h1.7v1.7h-1.7zM1358.0 649.3h1.7v1.7h-1.7zM1353.2 650.6h1.7v1.7h-1.7zM1346.3 652.0h1.7v1.7h-1.7zM1339.8 653.3h1.7v1.7h-1.7zM1335.4 654.3h1.7v1.7h-1.7zM1333.5 654.9h1.7v1.7h-1.7zM1333.2 655.1h1.7v1.7h-1.7zM1332.8 654.9h1.7v1.7h-1.7zM1330.9 654.3h1.7v1.7h-1.7zM1326.5 653.3h1.7v1.7h-1.7zM1320.0 652.0h1.7v1.7h-1.7zM1313.2 650.6h1.7v1.7h-1.7zM1308.3 649.3h1.7v1.7h-1.7zM1307.5 648.0h1.7v1.7h-1.7zM1311.9 647.0h1.7v1.7h-1.7zM1321.1 646.4h1.7v1.7h-1.7zM1333.2 652.4h1.7v1.7h-1.7zM1345.4 652.6h1.7v1.7h-1.7zM1355.7 653.1h1.7v1.7h-1.7zM1362.7 653.9h1.7v1.7h-1.7zM1365.6 655.0h1.7v1.7h-1.7zM1364.3 656.3h1.7v1.7h-1.7zM1359.7 657.7h1.7v1.7h-1.7zM1353.1 659.1h1.7v1.7h-1.7zM1346.1 660.4h1.7v1.7h-1.7zM1340.1 661.6h1.7v1.7h-1.7zM1336.0 662.6h1.7v1.7h-1.7zM1333.8 663.3h1.7v1.7h-1.7zM1333.2 663.6h1.7v1.7h-1.7zM1333.1 663.6h1.7v1.7h-1.7zM1332.5 663.3h1.7v1.7h-1.7zM1330.3 662.6h1.7v1.7h-1.7zM1326.2 661.6h1.7v1.7h-1.7zM1320.2 660.4h1.7v1.7h-1.7zM1313.2 659.1h1.7v1.7h-1.7zM1306.6 657.7h1.7v1.7h-1.7zM1302.0 656.3h1.7v1.7h-1.7zM1300.7 655.0h1.7v1.7h-1.7zM1303.6 653.9h1.7v1.7h-1.7zM1310.6 653.1h1.7v1.7h-1.7zM1320.9 652.6h1.7v1.7h-1.7zM1333.2 658.6h1.7v1.7h-1.7zM1345.5 658.8h1.7v1.7h-1.7zM1356.5 659.2h1.7v1.7h-1.7zM1365.0 659.9h1.7v1.7h-1.7zM1370.4 660.9h1.7v1.7h-1.7zM1372.1 662.0h1.7v1.7h-1.7zM1370.5 663.3h1.7v1.7h-1.7zM1366.1 664.7h1.7v1.7h-1.7zM1359.9 666.1h1.7v1.7h-1.7zM1352.9 667.5h1.7v1.7h-1.7zM1346.1 668.8h1.7v1.7h-1.7zM1340.5 669.9h1.7v1.7h-1.7zM1336.5 670.9h1.7v1.7h-1.7zM1334.2 671.6h1.7v1.7h-1.7zM1333.3 672.0h1.7v1.7h-1.7zM1333.2 672.1h1.7v1.7h-1.7zM1333.0 672.0h1.7v1.7h-1.7zM1332.1 671.6h1.7v1.7h-1.7zM1329.8 670.9h1.7v1.7h-1.7zM1325.8 669.9h1.7v1.7h-1.7zM1320.2 668.8h1.7v1.7h-1.7zM1313.4 667.5h1.7v1.7h-1.7zM1306.4 666.1h1.7v1.7h-1.7zM1300.2 664.7h1.7v1.7h-1.7zM1295.8 663.3h1.7v1.7h-1.7zM1294.2 662.0h1.7v1.7h-1.7zM1295.9 660.9h1.7v1.7h-1.7zM1301.3 659.9h1.7v1.7h-1.7zM1309.8 659.2h1.7v1.7h-1.7zM1320.8 658.8h1.7v1.7h-1.7zM1333.2 664.9h1.7v1.7h-1.7zM1345.5 665.0h1.7v1.7h-1.7zM1357.0 665.4h1.7v1.7h-1.7zM1366.5 666.0h1.7v1.7h-1.7zM1373.5 666.8h1.7v1.7h-1.7zM1377.6 667.9h1.7v1.7h-1.7zM1378.6 669.0h1.7v1.7h-1.7zM1376.7 670.3h1.7v1.7h-1.7zM1372.5 671.7h1.7v1.7h-1.7zM1366.5 673.1h1.7v1.7h-1.7zM1359.7 674.5h1.7v1.7h-1.7zM1352.7 675.9h1.7v1.7h-1.7zM1346.3 677.1h1.7v1.7h-1.7zM1341.0 678.2h1.7v1.7h-1.7zM1337.1 679.1h1.7v1.7h-1.7zM1334.7 679.9h1.7v1.7h-1.7zM1333.5 680.4h1.7v1.7h-1.7zM1333.2 680.6h1.7v1.7h-1.7zM1333.1 680.6h1.7v1.7h-1.7zM1332.8 680.4h1.7v1.7h-1.7zM1331.6 679.9h1.7v1.7h-1.7zM1329.2 679.1h1.7v1.7h-1.7zM1325.3 678.2h1.7v1.7h-1.7zM1320.0 677.1h1.7v1.7h-1.7zM1313.6 675.9h1.7v1.7h-1.7zM1306.6 674.5h1.7v1.7h-1.7zM1299.8 673.1h1.7v1.7h-1.7zM1293.8 671.7h1.7v1.7h-1.7zM1289.6 670.3h1.7v1.7h-1.7zM1287.7 669.0h1.7v1.7h-1.7zM1288.7 667.9h1.7v1.7h-1.7zM1292.8 666.8h1.7v1.7h-1.7zM1299.8 666.0h1.7v1.7h-1.7zM1309.3 665.4h1.7v1.7h-1.7zM1320.8 665.0h1.7v1.7h-1.7zM1333.2 671.1h1.7v1.7h-1.7zM1345.6 671.3h1.7v1.7h-1.7zM1357.3 671.6h1.7v1.7h-1.7zM1367.5 672.1h1.7v1.7h-1.7zM1375.7 672.9h1.7v1.7h-1.7zM1381.4 673.8h1.7v1.7h-1.7zM1384.5 674.9h1.7v1.7h-1.7zM1385.0 676.1h1.7v1.7h-1.7zM1382.9 677.4h1.7v1.7h-1.7zM1378.8 678.7h1.7v1.7h-1.7zM1373.2 680.1h1.7v1.7h-1.7zM1366.5 681.6h1.7v1.7h-1.7zM1359.4 682.9h1.7v1.7h-1.7zM1352.6 684.2h1.7v1.7h-1.7zM1346.5 685.4h1.7v1.7h-1.7zM1341.4 686.5h1.7v1.7h-1.7zM1337.6 687.4h1.7v1.7h-1.7zM1335.1 688.2h1.7v1.7h-1.7zM1333.8 688.7h1.7v1.7h-1.7zM1333.2 689.0h1.7v1.7h-1.7zM1333.2 689.1h1.7v1.7h-1.7zM1333.1 689.0h1.7v1.7h-1.7zM1332.5 688.7h1.7v1.7h-1.7zM1331.2 688.2h1.7v1.7h-1.7zM1328.7 687.4h1.7v1.7h-1.7zM1324.9 686.5h1.7v1.7h-1.7zM1319.8 685.4h1.7v1.7h-1.7zM1313.7 684.2h1.7v1.7h-1.7zM1306.9 682.9h1.7v1.7h-1.7zM1299.8 681.6h1.7v1.7h-1.7zM1293.2 680.1h1.7v1.7h-1.7zM1287.5 678.7h1.7v1.7h-1.7zM1283.4 677.4h1.7v1.7h-1.7zM1281.3 676.1h1.7v1.7h-1.7zM1281.8 674.9h1.7v1.7h-1.7zM1284.9 673.8h1.7v1.7h-1.7zM1290.6 672.9h1.7v1.7h-1.7zM1298.8 672.1h1.7v1.7h-1.7zM1309.0 671.6h1.7v1.7h-1.7zM1320.7 671.3h1.7v1.7h-1.7z"/>
<path fill="#78f078" d="M1333.2 709.1h1.7v1.7h-1.7zM1338.3 706.6h1.7v1.7h-1.7zM1333.6 702.6h1.7v1.7h-1.7zM1332.7 702.6h1.7v1.7h-1.7zM1328.0 706.6h1.7v1.7h-1.7zM1333.2 706.1h1.7v1.7h-1.7zM1341.9 704.8h1.7v1.7h-1.7zM1343.4 701.1h1.7v1.7h-1.7zM1338.6 696.7h1.7v1.7h-1.7zM1334.1 693.0h1.7v1.7h-1.7zM1333.2 691.6h1.7v1.7h-1.7zM1332.2 693.0h1.7v1.7h-1.7zM1327.7 696.7h1.7v1.7h-1.7zM1322.9 701.1h1.7v1.7h-1.7zM1324.4 704.8h1.7v1.7h-1.7zM1333.2 703.1h1.7v1.7h-1.7zM1342.8 702.2h1.7v1.7h-1.7zM1348.5 699.6h1.7v1.7h-1.7zM1348.6 695.6h1.7v1.7h-1.7zM1344.2 691.1h1.7v1.7h-1.7zM1338.5 686.8h1.7v1.7h-1.7zM1334.5 683.5h1.7v1.7h-1.7zM1333.2 681.6h1.7v1.7h-1.7zM1333.1 681.6h1.7v1.7h-1.7zM1331.8 683.5h1.7v1.7h-1.7zM1327.8 686.8h1.7v1.7h-1.7zM1322.1 691.1h1.7v1.7h-1.7zM1317.7 695.6h1.7v1.7h-1.7zM1317.8 699.6h1.7v1.7h-1.7zM1323.5 702.2h1.7v1.7h-1.7zM1333.2 700.1h1.7v1.7h-1.7zM1343.1 699.4h1.7v1.7h-1.7zM1350.7 697.4h1.7v1.7h-1.7zM1354.3 694.2h1.7v1.7h-1.7zM1353.7 690.1h1.7v1.7h-1.7zM1349.7 685.6h1.7v1.7h-1.7zM1344.0 681.2h1.7v1.7h-1.7zM1338.7 677.1h1.7v1.7h-1.7zM1335.0 673.9h1.7v1.7h-1.7zM1333.4 671.9h1.7v1.7h-1.7zM1333.2 671.1h1.7v1.7h-1.7zM1332.9 671.9h1.7v1.7h-1.7zM1331.3 673.9h1.7v1.7h-1.7zM1327.6 677.1h1.7v1.7h-1.7zM1322.3 681.2h1.7v1.7h-1.7zM1316.7 685.6h1.7v1.7h-1.7zM1312.6 690.1h1.7v1.7h-1.7zM1312.0 694.2h1.7v1.7h-1.7zM1315.6 697.4h1.7v1.7h-1.7zM1323.2 699.4h1.7v1.7h-1.7zM1333.2 697.1h1.7v1.7h-1.7zM1343.2 696.6h1.7v1.7h-1.7zM1351.8 694.9h1.7v1.7h-1.7zM1357.6 692.2h1.7v1.7h-1.7zM1359.9 688.7h1.7v1.7h-1.7zM1358.8 684.6h1.7v1.7h-1.7zM1355.0 680.2h1.7v1.7h-1.7zM1349.6 675.6h1.7v1.7h-1.7zM1343.9 671.3h1.7v1.7h-1.7zM1338.9 667.5h1.7v1.7h-1.7zM1335.5 664.4h1.7v1.7h-1.7zM1333.7 662.2h1.7v1.7h-1.7zM1333.2 661.0h1.7v1.7h-1.7zM1333.1 661.0h1.7v1.7h-1.7zM1332.6 662.2h1.7v1.7h-1.7zM1330.8 664.4h1.7v1.7h-1.7zM1327.4 667.5h1.7v1.7h-1.7zM1322.4 671.3h1.7v1.7h-1.7zM1316.7 675.6h1.7v1.7h-1.7zM1311.3 680.2h1.7v1.7h-1.7zM1307.5 684.6h1.7v1.7h-1.7zM1306.4 688.7h1.7v1.7h-1.7zM1308.7 692.2h1.7v1.7h-1.7zM1314.5 694.9h1.7v1.7h-1.7zM1323.1 696.6h1.7v1.7h-1.7zM1333.2 694.1h1.7v1.7h-1.7zM1343.3 693.7h1.7v1.7h-1.7zM1352.4 692.3h1.7v1.7h-1.7zM1359.5 690.0h1.7v1.7h-1.7zM1363.9 687.0h1.7v1.7h-1.7zM1365.3 683.3h1.7v1.7h-1.7zM1364.0 679.1h1.7v1.7h-1.7zM1360.3 674.7h1.7v1.7h-1.7zM1355.2 670.1h1.7v1.7h-1.7zM1349.4 665.7h1.7v1.7h-1.7zM1343.9 661.5h1.7v1.7h-1.7zM1339.2 657.8h1.7v1.7h-1.7zM1335.9 654.8h1.7v1.7h-1.7zM1334.0 652.5h1.7v1.7h-1.7zM1333.3 651.1h1.7v1.7h-1.7zM1333.2 650.6h1.7v1.7h-1.7zM1333.0 651.1h1.7v1.7h-1.7zM1332.3 652.5h1.7v1.7h-1.7zM1330.4 654.8h1.7v1.7h-1.7zM1327.1 657.8h1.7v1.7h-1.7zM1322.4 661.5h1.7v1.7h-1.7zM1316.9 665.7h1.7v1.7h-1.7zM1311.1 670.1h1.7v1.7h-1.7zM1306.0 674.7h1.7v1.7h-1.7zM1302.3 679.1h1.7v1.7h-1.7zM1301.0 683.3h1.7v1.7h-1.7zM1302.4 687.0h1.7v1.7h-1.7zM1306.8 690.0h1.7v1.7h-1.7zM1313.9 692.3h1.7v1.7h-1.7zM1323.0 693.7h1.7v1.7h-1.7zM1333.2 691.1h1.7v1.7h-1.7zM1343.4 690.7h1.7v1.7h-1.7zM1352.8 689.5h1.7v1.7h-1.7zM1360.7 687.6h1.7v1.7h-1.7zM1366.5 684.9h1.7v1.7h-1.7zM1369.8 681.6h1.7v1.7h-1.7zM1370.6 677.8h1.7v1.7h-1.7zM1369.1 673.6h1.7v1.7h-1.7zM1365.6 669.2h1.7v1.7h-1.7zM1360.7 664.6h1.7v1.7h-1.7zM1355.0 660.1h1.7v1.7h-1.7zM1349.3 655.8h1.7v1.7h-1.7zM1344.0 651.8h1.7v1.7h-1.7zM1339.6 648.2h1.7v1.7h-1.7zM1336.4 645.2h1.7v1.7h-1.7zM1334.4 642.9h1.7v1.7h-1.7zM1333.4 641.3h1.7v1.7h-1.7zM1333.2 640.5h1.7v1.7h-1.7zM1333.1 640.5h1.7v1.7h-1.7zM1332.9 641.3h1.7v1.7h-1.7zM1331.9 642.9h1.7v1.7h-1.7zM1329.9 645.2h1.7v1.7h-1.7zM1326.7 648.2h1.7v1.7h-1.7zM1322.3 651.8h1.7v1.7h-1.7zM1317.0 655.8h1.7v1.7h-1.7zM1311.3 660.1h1.7v1.7h-1.7zM1305.6 664.6h1.7v1.7h-1.7zM1300.7 669.2h1.7v1.7h-1.7zM1297.2 673.6h1.7v1.7h-1.7zM1295.7 677.8h1.7v1.7h-1.7zM1296.5 681.6h1.7v1.7h-1.7zM1299.8 684.9h1.7v1.7h-1.7zM1305.6 687.6h1.7v1.7h-1.7zM1313.5 689.5h1.7v1.7h-1.7zM1322.9 690.7h1.7v1.7h-1.7zM1333.2 688.1h1.7v1.7h-1.7zM1343.4 687.8h1.7v1.7h-1.7zM1353.0 686.7h1.7v1.7h-1.7zM1361.5 685.0h1.7v1.7h-1.7zM1368.2 682.6h1.7v1.7h-1.7zM1373.0 679.7h1.7v1.7h-1.7zM1375.5 676.2h1.7v1.7h-1.7zM1375.9 672.3h1.7v1.7h-1.7zM1374.2 668.1h1.7v1.7h-1.7zM1370.8 663.7h1.7v1.7h-1.7zM1366.2 659.1h1.7v1.7h-1.7zM1360.6 654.6h1.7v1.7h-1.7zM1354.8 650.2h1.7v1.7h-1.7zM1349.2 646.0h1.7v1.7h-1.7zM1344.2 642.1h1.7v1.7h-1.7zM1340.0 638.6h1.7v1.7h-1.7zM1336.9 635.7h1.7v1.7h-1.7zM1334.8 633.3h1.7v1.7h-1.7zM1333.6 631.6h1.7v1.7h-1.7zM1333.2 630.5h1.7v1.7h-1.7zM1333.2 630.1h1.7v1.7h-1.7zM1333.1 630.5h1.7v1.7h-1.7zM1332.7 631.6h1.7v1.7h-1.7zM1331.5 633.3h1.7v1.7h-1.7zM1329.4 635.7h1.7v1.7h-1.7zM1326.3 638.6h1.7v1.7h-1.7zM1322.1 642.1h1.7v1.7h-1.7zM1317.1 646.0h1.7v1.7h-1.7zM1311.5 650.2h1.7v1.7h-1.7zM1305.7 654.6h1.7v1.7h-1.7zM1300.2 659.1h1.7v1.7h-1.7zM1295.5 663.7h1.7v1.7h-1.7zM1292.1 668.1h1.7v1.7h-1.7zM1290.4 672.3h1.7v1.7h-1.7zM1290.8 676.2h1.7v1.7h-1.7zM1293.3 679.7h1.7v1.7h-1.7zM1298.1 682.6h1.7v1.7h-1.7zM1304.8 685.0h1.7v1.7h-1.7zM1313.3 686.7h1.7v1.7h-1.7zM1322.9 687.8h1.7v1.7h-1.7z"/>
<path fill="#2a36f2" d="M1333.2 711.9h1.7v1.7h-1.7zM1333.2 712.7h1.7v1.7h-1.7zM1333.2 711.9h1.7v1.7h-1.7zM1333.2 712.7h1.7v1.7h-1.7zM1333.2 708.0h1.7v1.7h-1.7zM1334.2 709.7h1.7v1.7h-1.7zM1333.2 711.4h1.7v1.7h-1.7zM1332.1 709.7h1.7v1.7h-1.7zM1333.2 708.0h1.7v1.7h-1.7zM1334.2 709.7h1.7v1.7h-1.7zM1333.2 711.4h1.7v1.7h-1.7zM1332.1 709.7h1.7v1.7h-1.7zM1333.2 701.6h1.7v1.7h-1.7zM1335.2 703.5h1.7v1.7h-1.7zM1335.2 707.4h1.7v1.7h-1.7zM1333.2 709.3h1.7v1.7h-1.7zM1331.1 707.4h1.7v1.7h-1.7zM1331.1 703.5h1.7v1.7h-1.7zM1333.2 701.6h1.7v1.7h-1.7zM1335.2 703.5h1.7v1.7h-1.7zM1335.2 707.4h1.7v1.7h-1.7zM1333.2 709.3h1.7v1.7h-1.7zM1331.1 707.4h1.7v1.7h-1.7zM1331.1 703.5h1.7v1.7h-1.7zM1333.2 692.6h1.7v1.7h-1.7zM1336.1 694.6h1.7v1.7h-1.7zM1337.3 699.4h1.7v1.7h-1.7zM1336.1 704.3h1.7v1.7h-1.7zM1333.2 706.3h1.7v1.7h-1.7zM1330.2 704.3h1.7v1.7h-1.7zM1329.0 699.4h1.7v1.7h-1.7zM1330.2 694.6h1.7v1.7h-1.7zM1333.2 692.6h1.7v1.7h-1.7zM1336.1 694.6h1.7v1.7h-1.7zM1337.3 699.4h1.7v1.7h-1.7zM1336.1 704.3h1.7v1.7h-1.7zM1333.2 706.3h1.7v1.7h-1.7zM1330.2 704.3h1.7v1.7h-1.7zM1329.0 699.4h1.7v1.7h-1.7zM1330.2 694.6h1.7v1.7h-1.7zM1333.2 681.0h1.7v1.7h-1.7zM1336.9 683.1h1.7v1.7h-1.7zM1339.3 688.4h1.7v1.7h-1.7zM1339.3 695.0h1.7v1.7h-1.7zM1336.9 700.4h1.7v1.7h-1.7zM1333.2 702.4h1.7v1.7h-1.7zM1329.4 700.4h1.7v1.7h-1.7zM1327.0 695.0h1.7v1.7h-1.7zM1327.0 688.4h1.7v1.7h-1.7zM1329.4 683.1h1.7v1.7h-1.7zM1333.2 681.0h1.7v1.7h-1.7zM1336.9 683.1h1.7v1.7h-1.7zM1339.3 688.4h1.7v1.7h-1.7zM1339.3 695.0h1.7v1.7h-1.7zM1336.9 700.4h1.7v1.7h-1.7zM1333.2 702.4h1.7v1.7h-1.7zM1329.4 700.4h1.7v1.7h-1.7zM1327.0 695.0h1.7v1.7h-1.7zM1327.0 688.4h1.7v1.7h-1.7zM1329.4 683.1h1.7v1.7h-1.7zM1333.2 666.9h1.7v1.7h-1.7zM1337.8 668.9h1.7v1.7h-1.7zM1341.2 674.6h1.7v1.7h-1.7zM1342.4 682.3h1.7v1.7h-1.7zM1341.2 690.0h1.7v1.7h-1.7zM1337.8 695.7h1.7v1.7h-1.7zM1333.2 697.7h1.7v1.7h-1.7zM1328.5 695.7h1.7v1.7h-1.7zM1325.1 690.0h1.7v1.7h-1.7zM1323.9 682.3h1.7v1.7h-1.7zM1325.1 674.6h1.7v1.7h-1.7zM1328.5 668.9h1.7v1.7h-1.7zM1333.2 666.9h1.7v1.7h-1.7zM1337.8 668.9h1.7v1.7h-1.7zM1341.2 674.6h1.7v1.7h-1.7zM1342.4 682.3h1.7v1.7h-1.7zM1341.2 690.0h1.7v1.7h-1.7zM1337.8 695.7h1.7v1.7h-1.7zM1333.2 697.7h1.7v1.7h-1.7zM1328.5 695.7h1.7v1.7h-1.7zM1325.1 690.0h1.7v1.7h-1.7zM1323.9 682.3h1.7v1.7h-1.7zM1325.1 674.6h1.7v1.7h-1.7zM1328.5 668.9h1.7v1.7h-1.7zM1333.2 650.1h1.7v1.7h-1.7zM1338.6 652.2h1.7v1.7h-1.7zM1343.0 658.1h1.7v1.7h-1.7zM1345.4 666.5h1.7v1.7h-1.7zM1345.4 675.8h1.7v1.7h-1.7zM1343.0 684.2h1.7v1.7h-1.7zM1338.6 690.1h1.7v1.7h-1.7zM1333.2 692.1h1.7v1.7h-1.7zM1327.7 690.1h1.7v1.7h-1.7zM1323.3 684.2h1.7v1.7h-1.7zM1320.9 675.8h1.7v1.7h-1.7zM1320.9 666.5h1.7v1.7h-1.7zM1323.3 658.1h1.7v1.7h-1.7zM1327.7 652.2h1.7v1.7h-1.7zM1333.2 650.1h1.7v1.7h-1.7zM1338.6 652.2h1.7v1.7h-1.7zM1343.0 658.1h1.7v1.7h-1.7zM1345.4 666.5h1.7v1.7h-1.7zM1345.4 675.8h1.7v1.7h-1.7zM1343.0 684.2h1.7v1.7h-1.7zM1338.6 690.1h1.7v1.7h-1.7zM1333.2 692.1h1.7v1.7h-1.7zM1327.7 690.1h1.7v1.7h-1.7zM1323.3 684.2h1.7v1.7h-1.7zM1320.9 675.8h1.7v1.7h-1.7zM1320.9 666.5h1.7v1.7h-1.7zM1323.3 658.1h1.7v1.7h-1.7zM1327.7 652.2h1.7v1.7h-1.7z"/>
<path fill="#2a36f2" d="M1226.5 673.8h1.6v1.6h-1.6zM1233.8 679.5h1.6v1.6h-1.6zM1238.3 688.7h1.6v1.6h-1.6zM1243.4 697.2h1.6v1.6h-1.6zM1251.3 703.9h1.6v1.6h-1.6zM1259.5 708.6h1.6v1.6h-1.6zM1270.9 716.5h1.6v1.6h-1.6zM1279.7 718.1h1.6v1.6h-1.6zM1293.7 723.0h1.6v1.6h-1.6zM1303.5 716.8h1.6v1.6h-1.6zM1259.1 715.4h1.6v1.6h-1.6zM1248.6 710.4h1.6v1.6h-1.6zM1273.8 705.7h1.6v1.6h-1.6zM1266.4 702.5h1.6v1.6h-1.6zM1283.9 713.5h1.6v1.6h-1.6zM1237.8 708.7h1.6v1.6h-1.6zM1243.4 719.5h1.6v1.6h-1.6zM1261.4 720.0h1.6v1.6h-1.6zM1295.9 704.9h1.6v1.6h-1.6zM1286.5 697.5h1.6v1.6h-1.6zM1305.0 688.4h1.6v1.6h-1.6zM1440.4 676.0h1.6v1.6h-1.6zM1432.2 681.5h1.6v1.6h-1.6zM1428.3 690.7h1.6v1.6h-1.6zM1422.1 696.4h1.6v1.6h-1.6zM1415.1 702.7h1.6v1.6h-1.6zM1404.9 711.2h1.6v1.6h-1.6zM1393.8 715.2h1.6v1.6h-1.6zM1383.4 719.9h1.6v1.6h-1.6zM1374.3 721.5h1.6v1.6h-1.6zM1364.7 716.5h1.6v1.6h-1.6zM1410.0 717.6h1.6v1.6h-1.6zM1419.5 711.0h1.6v1.6h-1.6zM1392.6 709.0h1.6v1.6h-1.6zM1399.1 701.9h1.6v1.6h-1.6zM1379.4 714.0h1.6v1.6h-1.6zM1429.8 711.2h1.6v1.6h-1.6zM1424.5 720.3h1.6v1.6h-1.6zM1402.7 721.9h1.6v1.6h-1.6zM1369.3 705.0h1.6v1.6h-1.6zM1377.9 695.7h1.6v1.6h-1.6zM1359.4 690.3h1.6v1.6h-1.6z"/>
<text x="1133" y="449" font-size="14" fill="#111" font-style="italic">r</text>
<text x="1140" y="452.5" font-size="10.5" fill="#111">rms</text>
<text x="1161" y="449" font-size="15" fill="#111">=</text>
<text x="1174" y="449" font-size="13.3" fill="#111" textLength="52" lengthAdjust="spacingAndGlyphs">3.70 μm</text>
<text x="1444" y="449" font-size="14" fill="#111" font-style="italic">r</text>
<text x="1451" y="452.5" font-size="10.5" fill="#111">rms</text>
<text x="1472" y="449" font-size="15" fill="#111">=</text>
<text x="1485" y="449" font-size="13.3" fill="#111" textLength="52" lengthAdjust="spacingAndGlyphs">6.96 μm</text>
<clipPath id="clp"><rect x="868" y="700" width="1000" height="56"/></clipPath><g clip-path="url(#clp)">
<text x="1289" y="757" font-size="14" fill="#111" font-style="italic">r</text>
<text x="1296" y="760.5" font-size="10.5" fill="#111">rms</text>
<text x="1317" y="757" font-size="15" fill="#111">=</text>
<text x="1330" y="757" font-size="13.3" fill="#111" textLength="52" lengthAdjust="spacingAndGlyphs">7.57 μm</text>
</g>
<path d="M867 791a4 4 0 0 1 4 -4h1038a4 4 0 0 1 4 4v255h-1046z" fill="#e4e5e8" transform="translate(-0.6,0.6)"/>
<path d="M867 791a4 4 0 0 1 4 -4h1038a4 4 0 0 1 4 4v255h-1046z" fill="#e4e5e8" transform="translate(0.6,0.6)"/>
<path d="M867 791a4 4 0 0 1 4 -4h1038a4 4 0 0 1 4 4v255h-1046z" fill="#f9fafd"/>
<text x="881.5" y="809.5" font-size="12.7" fill="#444">Messages</text>
<path d="M949.5 802.5l8 8 M957.5 802.5l-8 8" fill="none" stroke="#999" stroke-width="1.1"/>
<text x="988.3" y="809.5" font-size="12.7" fill="#444">Progress</text>
<text x="1066.3" y="809.5" font-size="12.7" fill="#444">Log</text>
<text x="1114.4" y="809.5" font-size="13.1" fill="#2a7ad0">Objective Table 2</text>
<path d="M1222 802l8 8 M1230 802l-8 8" fill="none" stroke="#999" stroke-width="1.1"/>
<rect x="1109" y="818" width="132" height="2.5" fill="#2a7ad0"/>
<path d="M1860 805l4 4l4-4" fill="none" stroke="#b5b5b5" stroke-width="1.1"/>
<rect x="1878.5" y="802.5" width="9" height="9" fill="none" stroke="#9a9a9a" stroke-width="1"/>
<rect x="1878.5" y="802.5" width="9" height="2" fill="#9a9a9a"/>
<path d="M1897.5 802v5 M1901.5 802v5 M1896 807.5h7 M1899.5 807v6 M1897 801.5h5" fill="none" stroke="#9a9a9a" stroke-width="1.2"/>
<line x1="867" y1="821.5" x2="1913" y2="821.5" stroke="#e3e5ea" stroke-width="1"/>
<line x1="880" y1="826.5" x2="891" y2="826.5" stroke="#2f7fd0" stroke-width="1.2"/>
<line x1="880" y1="830.8" x2="891" y2="830.8" stroke="#2f7fd0" stroke-width="1.2"/>
<line x1="880" y1="835.1" x2="891" y2="835.1" stroke="#2f7fd0" stroke-width="1.2"/>
<line x1="880" y1="839.4" x2="891" y2="839.4" stroke="#2f7fd0" stroke-width="1.2"/>
<text x="877.5" y="829.0" font-size="4.5" fill="#2f7fd0" text-anchor="middle">1</text>
<text x="877.5" y="833.3" font-size="4.5" fill="#2f7fd0" text-anchor="middle">2</text>
<text x="877.5" y="837.6" font-size="4.5" fill="#2f7fd0" text-anchor="middle">3</text>
<text x="877.5" y="841.9" font-size="4.5" fill="#2f7fd0" text-anchor="middle">4</text>
<line x1="898.5" y1="826" x2="898.5" y2="842" stroke="#d6d8dd" stroke-width="1"/>
<line x1="1021.5" y1="826" x2="1021.5" y2="842" stroke="#d6d8dd" stroke-width="1"/>
<line x1="1075.5" y1="826" x2="1075.5" y2="842" stroke="#d6d8dd" stroke-width="1"/>
<line x1="1129.5" y1="826" x2="1129.5" y2="842" stroke="#d6d8dd" stroke-width="1"/>
<line x1="1252.5" y1="826" x2="1252.5" y2="842" stroke="#d6d8dd" stroke-width="1"/>
<line x1="1329.5" y1="826" x2="1329.5" y2="842" stroke="#d6d8dd" stroke-width="1"/>
<text x="913" y="830.5" font-size="9.6" fill="#2f7fd0" text-anchor="middle">8.85</text>
<text x="913" y="840.5" font-size="9.6" fill="#2f7fd0" text-anchor="middle">e-12</text>
<rect x="926.5" y="824.5" width="19" height="19" fill="#cde4f8" stroke="#9cc8ee" stroke-width="1" rx="2"/>
<text x="936" y="837" font-size="7" fill="#2f7fd0" text-anchor="middle" font-weight="bold">AUTO</text>
<text x="959.5" y="830.5" font-size="9.6" fill="#2f7fd0" text-anchor="middle">8.5</text>
<text x="959.5" y="840.5" font-size="9.6" fill="#2f7fd0" text-anchor="middle">e-1</text>
<text x="982" y="830.5" font-size="9.6" fill="#2f7fd0" text-anchor="middle">850</text>
<text x="982" y="840.5" font-size="9.6" fill="#2f7fd0" text-anchor="middle">e-3</text>
<text x="1006" y="837.5" font-size="10" fill="#2f7fd0" text-anchor="middle">0.85</text>
<rect x="1027.5" y="824.5" width="19" height="19" fill="#cde4f8" stroke="#9cc8ee" stroke-width="1" rx="2"/>
<rect x="1030.5" y="828.5" width="13" height="10" fill="#fff" stroke="#3a7ad0" stroke-width="1"/>
<line x1="1033.75" y1="829" x2="1033.75" y2="838" stroke="#2f7fd0" stroke-width="0.8"/>
<line x1="1037.0" y1="829" x2="1037.0" y2="838" stroke="#2f7fd0" stroke-width="0.8"/>
<line x1="1040.25" y1="829" x2="1040.25" y2="838" stroke="#2f7fd0" stroke-width="0.8"/>
<line x1="1031" y1="831.8" x2="1043" y2="831.8" stroke="#2f7fd0" stroke-width="0.8"/>
<line x1="1031" y1="835.1" x2="1043" y2="835.1" stroke="#2f7fd0" stroke-width="0.8"/>
<g fill="none" stroke="#2f7fd0" stroke-width="0.9"><circle cx="1060" cy="833.5" r="7"/><circle cx="1060" cy="833.5" r="4"/><path d="M1053 833.5h14M1060 826.5v14M1055 828.5l10 10M1065 828.5l-10 10"/></g>
<path d="M1086.5 826l3.5 8" fill="none" stroke="#6a6a6a" stroke-width="1.4"/>
<path d="M1089 833.5l2-1q2 4 5 7.5l-3 1.5q-3-1-4.5-4z" fill="#f7c987" stroke="#eea24a" stroke-width="0.7"/>
<path d="M1107 827h12 M1111 827v-2h4v2" fill="none" stroke="#2f7fd0" stroke-width="1.4"/>
<rect x="1108.5" y="828.5" width="9" height="12" fill="#2f7fd0" rx="1"/>
<path d="M1111 830.5v8 M1115 830.5v8" fill="none" stroke="#fff" stroke-width="1"/>
<path d="M1139.5 827v14h14" fill="none" stroke="#666" stroke-width="1"/>
<rect x="1141.5" y="828.5" width="12" height="10" fill="#fff" stroke="#c050a0" stroke-width="1"/>
<path d="M1141.5 832h12 M1141.5 835.5h12 M1147.5 828.5v10" fill="none" stroke="#c050a0" stroke-width="1"/>
<rect x="1161" y="826.5" width="15" height="15" fill="#b84fa0"/>
<g fill="none" stroke="#c050a0" stroke-width="1"><ellipse cx="1191" cy="833.5" rx="7" ry="6.5"/><ellipse cx="1192" cy="834" rx="4.5" ry="4.5"/><ellipse cx="1192.5" cy="834.5" rx="2" ry="2.5"/></g>
<rect x="1206.5" y="826.5" width="14" height="14" fill="#fff" stroke="#aaa" stroke-width="1"/>
<rect x="1209.5" y="836.5" width="1" height="1" fill="#c050a0"/>
<rect x="1211.5" y="834.5" width="1" height="1" fill="#c050a0"/>
<rect x="1213.5" y="833.5" width="1" height="1" fill="#c050a0"/>
<rect x="1215.5" y="831.5" width="1" height="1" fill="#c050a0"/>
<rect x="1217.5" y="830.5" width="1" height="1" fill="#c050a0"/>
<rect x="1212.5" y="836.5" width="1" height="1" fill="#c050a0"/>
<rect x="1214.5" y="835.5" width="1" height="1" fill="#c050a0"/>
<rect x="1216.5" y="833.5" width="1" height="1" fill="#c050a0"/>
<rect x="1210.5" y="832.5" width="1" height="1" fill="#c050a0"/>
<path d="M1229 827h6 M1229 830h6 M1229 833h6 M1229 827v6 M1232 827v6 M1236 828h6 M1229 837h13 M1229 840.5h13" fill="none" stroke="#c050a0" stroke-width="1"/>
<rect x="1260.5" y="826.5" width="11" height="10" fill="#fff" stroke="#777" stroke-width="1"/>
<rect x="1264.5" y="830.5" width="11" height="11" fill="#fff" stroke="#2f7fd0" stroke-width="1.2"/>
<path d="M1265 835h10 M1265 838h10 M1270 835v6" fill="none" stroke="#2f7fd0" stroke-width="1"/>
<rect x="1283.5" y="826.5" width="11" height="10" fill="#fff" stroke="#777" stroke-width="1"/>
<path d="M1289 834h9 M1295 831l3 3l-3 3" fill="none" stroke="#2f7fd0" stroke-width="2"/>
<rect x="1306.5" y="826.5" width="11" height="10" fill="#fff" stroke="#777" stroke-width="1"/>
<rect x="1309.5" y="831.5" width="12" height="9" fill="#fff" stroke="#2f7fd0" stroke-width="1.2"/>
<path d="M1312 835h5 M1312 838h7" fill="none" stroke="#2f7fd0" stroke-width="1"/>
<rect x="1339.5" y="826.5" width="12" height="15" fill="#fff" stroke="#777" stroke-width="1"/>
<path d="M1339.5 834h12 M1342 830.5h7 M1342 838h7" fill="none" stroke="#2f7fd0" stroke-width="1"/>
<rect x="1361.5" y="827.5" width="12" height="12" fill="none" stroke="#c050a0" stroke-width="1"/>
<path d="M1361.5 831.5h12 M1361.5 835.5h12 M1365.5 827.5v12 M1369.5 827.5v12" fill="none" stroke="#c050a0" stroke-width="1"/>
<path d="M1381 831.5h8l-4 4z" fill="#111"/>
<rect x="872.5" y="847.5" width="1036" height="194" fill="#fff" stroke="#c8c8c8" stroke-width="1"/>
<rect x="873" y="848" width="1017" height="25" fill="#f0f0f0"/>
<rect x="1891" y="873" width="17" height="168" fill="#fbfbfb"/>
<path d="M1896 888l3.5-3.5l3.5 3.5" fill="none" stroke="#ccc" stroke-width="1"/>
<rect x="1891" y="997" width="17" height="27" fill="#e6e6e6"/>
<path d="M1896 1030l3.5 3.5l3.5-3.5" fill="none" stroke="#ccc" stroke-width="1"/>
<text x="878.0" y="867.5" font-size="11.1" fill="#1b1b1b">dR1_1 (m)</text>
<text x="942.0" y="867.5" font-size="11.1" fill="#1b1b1b">dR2_1 (m)</text>
<text x="1006.0" y="867.5" font-size="11.1" fill="#1b1b1b">dR2_2 (m)</text>
<text x="1070.0" y="867.5" font-size="11.1" fill="#1b1b1b">dR1_4 (m)</text>
<text x="1134.0" y="867.5" font-size="11.1" fill="#1b1b1b">dR2_4 (m)</text>
<text x="1198.0" y="867.5" font-size="11.1" fill="#1b1b1b">dR2_5 (m)</text>
<text x="1262.0" y="867.5" font-size="11.1" fill="#1b1b1b">dR1_6 (m)</text>
<text x="1326.0" y="867.5" font-size="11.1" fill="#1b1b1b">Objective</text>
<line x1="936.5" y1="848" x2="936.5" y2="1037" stroke="#b5b5b5" stroke-width="1"/>
<line x1="1000.5" y1="848" x2="1000.5" y2="1037" stroke="#b5b5b5" stroke-width="1"/>
<line x1="1064.5" y1="848" x2="1064.5" y2="1037" stroke="#b5b5b5" stroke-width="1"/>
<line x1="1128.5" y1="848" x2="1128.5" y2="1037" stroke="#b5b5b5" stroke-width="1"/>
<line x1="1192.5" y1="848" x2="1192.5" y2="1037" stroke="#b5b5b5" stroke-width="1"/>
<line x1="1256.5" y1="848" x2="1256.5" y2="1037" stroke="#b5b5b5" stroke-width="1"/>
<line x1="1320.5" y1="848" x2="1320.5" y2="1037" stroke="#b5b5b5" stroke-width="1"/>
<line x1="1381" y1="848" x2="1381" y2="1037" stroke="#b5b5b5" stroke-width="1"/>
<text x="874.0" y="887" font-size="11.0" fill="#1b1b1b">4.3724E-4</text>
<text x="938.0" y="887" font-size="11.0" fill="#1b1b1b">0.0059282</text>
<text x="1002.0" y="887" font-size="11.0" fill="#1b1b1b">-0.022440</text>
<text x="1066.0" y="887" font-size="11.0" fill="#1b1b1b">2.6178E-4</text>
<text x="1130.0" y="887" font-size="11.0" fill="#1b1b1b">-3.7737E-4</text>
<text x="1194.0" y="887" font-size="11.0" fill="#1b1b1b">0.0067037</text>
<text x="1258.0" y="887" font-size="11.0" fill="#1b1b1b">-1.6807E-4</text>
<text x="1322.0" y="887" font-size="11.0" fill="#1b1b1b">1.2479E-10</text>
<line x1="873" y1="891.5" x2="1891" y2="891.5" stroke="#a8a8a8" stroke-width="1"/>
<text x="874.0" y="905" font-size="11.0" fill="#1b1b1b">4.7115E-4</text>
<text x="938.0" y="905" font-size="11.0" fill="#1b1b1b">0.0056617</text>
<text x="1002.0" y="905" font-size="11.0" fill="#1b1b1b">-0.020504</text>
<text x="1066.0" y="905" font-size="11.0" fill="#1b1b1b">3.0191E-4</text>
<text x="1130.0" y="905" font-size="11.0" fill="#1b1b1b">-7.1219E-4</text>
<text x="1194.0" y="905" font-size="11.0" fill="#1b1b1b">2.7412E-4</text>
<text x="1258.0" y="905" font-size="11.0" fill="#1b1b1b">-6.7088E-5</text>
<text x="1322.0" y="905" font-size="11.0" fill="#1b1b1b">1.2138E-10</text>
<line x1="873" y1="909.5" x2="1891" y2="909.5" stroke="#a8a8a8" stroke-width="1"/>
<text x="874.0" y="923" font-size="11.0" fill="#1b1b1b">4.5159E-4</text>
<text x="938.0" y="923" font-size="11.0" fill="#1b1b1b">0.0058255</text>
<text x="1002.0" y="923" font-size="11.0" fill="#1b1b1b">-0.011588</text>
<text x="1066.0" y="923" font-size="11.0" fill="#1b1b1b">2.4780E-4</text>
<text x="1130.0" y="923" font-size="11.0" fill="#1b1b1b">-7.3930E-4</text>
<text x="1194.0" y="923" font-size="11.0" fill="#1b1b1b">-0.011124</text>
<text x="1258.0" y="923" font-size="11.0" fill="#1b1b1b">-3.2355E-4</text>
<text x="1322.0" y="923" font-size="11.0" fill="#1b1b1b">1.3316E-10</text>
<line x1="873" y1="927.5" x2="1891" y2="927.5" stroke="#a8a8a8" stroke-width="1"/>
<text x="874.0" y="941" font-size="11.0" fill="#1b1b1b">3.2012E-4</text>
<text x="938.0" y="941" font-size="11.0" fill="#1b1b1b">0.0062372</text>
<text x="1002.0" y="941" font-size="11.0" fill="#1b1b1b">-0.023415</text>
<text x="1066.0" y="941" font-size="11.0" fill="#1b1b1b">2.4825E-4</text>
<text x="1130.0" y="941" font-size="11.0" fill="#1b1b1b">-5.6613E-4</text>
<text x="1194.0" y="941" font-size="11.0" fill="#1b1b1b">0.010720</text>
<text x="1258.0" y="941" font-size="11.0" fill="#1b1b1b">-5.1333E-5</text>
<text x="1322.0" y="941" font-size="11.0" fill="#1b1b1b">1.8480E-10</text>
<line x1="873" y1="945.5" x2="1891" y2="945.5" stroke="#a8a8a8" stroke-width="1"/>
<text x="874.0" y="959" font-size="11.0" fill="#1b1b1b">4.3056E-4</text>
<text x="938.0" y="959" font-size="11.0" fill="#1b1b1b">0.0051740</text>
<text x="1002.0" y="959" font-size="11.0" fill="#1b1b1b">-0.035967</text>
<text x="1066.0" y="959" font-size="11.0" fill="#1b1b1b">2.7590E-4</text>
<text x="1130.0" y="959" font-size="11.0" fill="#1b1b1b">-6.5084E-4</text>
<text x="1194.0" y="959" font-size="11.0" fill="#1b1b1b">2.5050E-4</text>
<text x="1258.0" y="959" font-size="11.0" fill="#1b1b1b">-6.1309E-5</text>
<text x="1322.0" y="959" font-size="11.0" fill="#1b1b1b">5.3612E-10</text>
<line x1="873" y1="963.5" x2="1891" y2="963.5" stroke="#a8a8a8" stroke-width="1"/>
<text x="874.0" y="977" font-size="11.0" fill="#1b1b1b">4.1781E-4</text>
<text x="938.0" y="977" font-size="11.0" fill="#1b1b1b">0.0061485</text>
<text x="1002.0" y="977" font-size="11.0" fill="#1b1b1b">-0.011132</text>
<text x="1066.0" y="977" font-size="11.0" fill="#1b1b1b">2.1335E-4</text>
<text x="1130.0" y="977" font-size="11.0" fill="#1b1b1b">-4.8462E-4</text>
<text x="1194.0" y="977" font-size="11.0" fill="#1b1b1b">-0.0033612</text>
<text x="1258.0" y="977" font-size="11.0" fill="#1b1b1b">-6.7739E-5</text>
<text x="1322.0" y="977" font-size="11.0" fill="#1b1b1b">1.3543E-10</text>
<line x1="873" y1="981.5" x2="1891" y2="981.5" stroke="#a8a8a8" stroke-width="1"/>
<text x="874.0" y="995" font-size="11.0" fill="#1b1b1b">7.7129E-4</text>
<text x="938.0" y="995" font-size="11.0" fill="#1b1b1b">0.0059784</text>
<text x="1002.0" y="995" font-size="11.0" fill="#1b1b1b">-0.027326</text>
<text x="1066.0" y="995" font-size="11.0" fill="#1b1b1b">4.5959E-4</text>
<text x="1130.0" y="995" font-size="11.0" fill="#1b1b1b">-5.7350E-4</text>
<text x="1194.0" y="995" font-size="11.0" fill="#1b1b1b">-0.010808</text>
<text x="1258.0" y="995" font-size="11.0" fill="#1b1b1b">-4.3376E-5</text>
<text x="1322.0" y="995" font-size="11.0" fill="#1b1b1b">1.1442E-8</text>
<line x1="873" y1="999.5" x2="1891" y2="999.5" stroke="#a8a8a8" stroke-width="1"/>
<text x="874.0" y="1013" font-size="11.0" fill="#1b1b1b">3.4503E-4</text>
<text x="938.0" y="1013" font-size="11.0" fill="#1b1b1b">0.0057723</text>
<text x="1002.0" y="1013" font-size="11.0" fill="#1b1b1b">-0.022426</text>
<text x="1066.0" y="1013" font-size="11.0" fill="#1b1b1b">3.3355E-4</text>
<text x="1130.0" y="1013" font-size="11.0" fill="#1b1b1b">-0.0010145</text>
<text x="1194.0" y="1013" font-size="11.0" fill="#1b1b1b">1.9502E-4</text>
<text x="1258.0" y="1013" font-size="11.0" fill="#1b1b1b">-3.1021E-4</text>
<text x="1322.0" y="1013" font-size="11.0" fill="#1b1b1b">2.4773E-10</text>
<line x1="873" y1="1017.5" x2="1891" y2="1017.5" stroke="#a8a8a8" stroke-width="1"/>
<text x="874.0" y="1031" font-size="11.0" fill="#1b1b1b">4.7115E-4</text>
<text x="938.0" y="1031" font-size="11.0" fill="#1b1b1b">0.0056617</text>
<text x="1002.0" y="1031" font-size="11.0" fill="#1b1b1b">-0.020504</text>
<text x="1066.0" y="1031" font-size="11.0" fill="#1b1b1b">3.0191E-4</text>
<text x="1130.0" y="1031" font-size="11.0" fill="#1b1b1b">-7.1219E-4</text>
<text x="1194.0" y="1031" font-size="11.0" fill="#1b1b1b">2.7412E-4</text>
<text x="1258.0" y="1031" font-size="11.0" fill="#1b1b1b">-6.7088E-5</text>
<text x="1322.0" y="1031" font-size="11.0" fill="#1b1b1b">1.2138E-10</text>
<line x1="873" y1="1035.5" x2="1891" y2="1035.5" stroke="#a8a8a8" stroke-width="1"/>
<text x="1241" y="1068" font-size="10.9" fill="#222">3.59 GB | 3.84 GB</text>
</svg></body></html>
